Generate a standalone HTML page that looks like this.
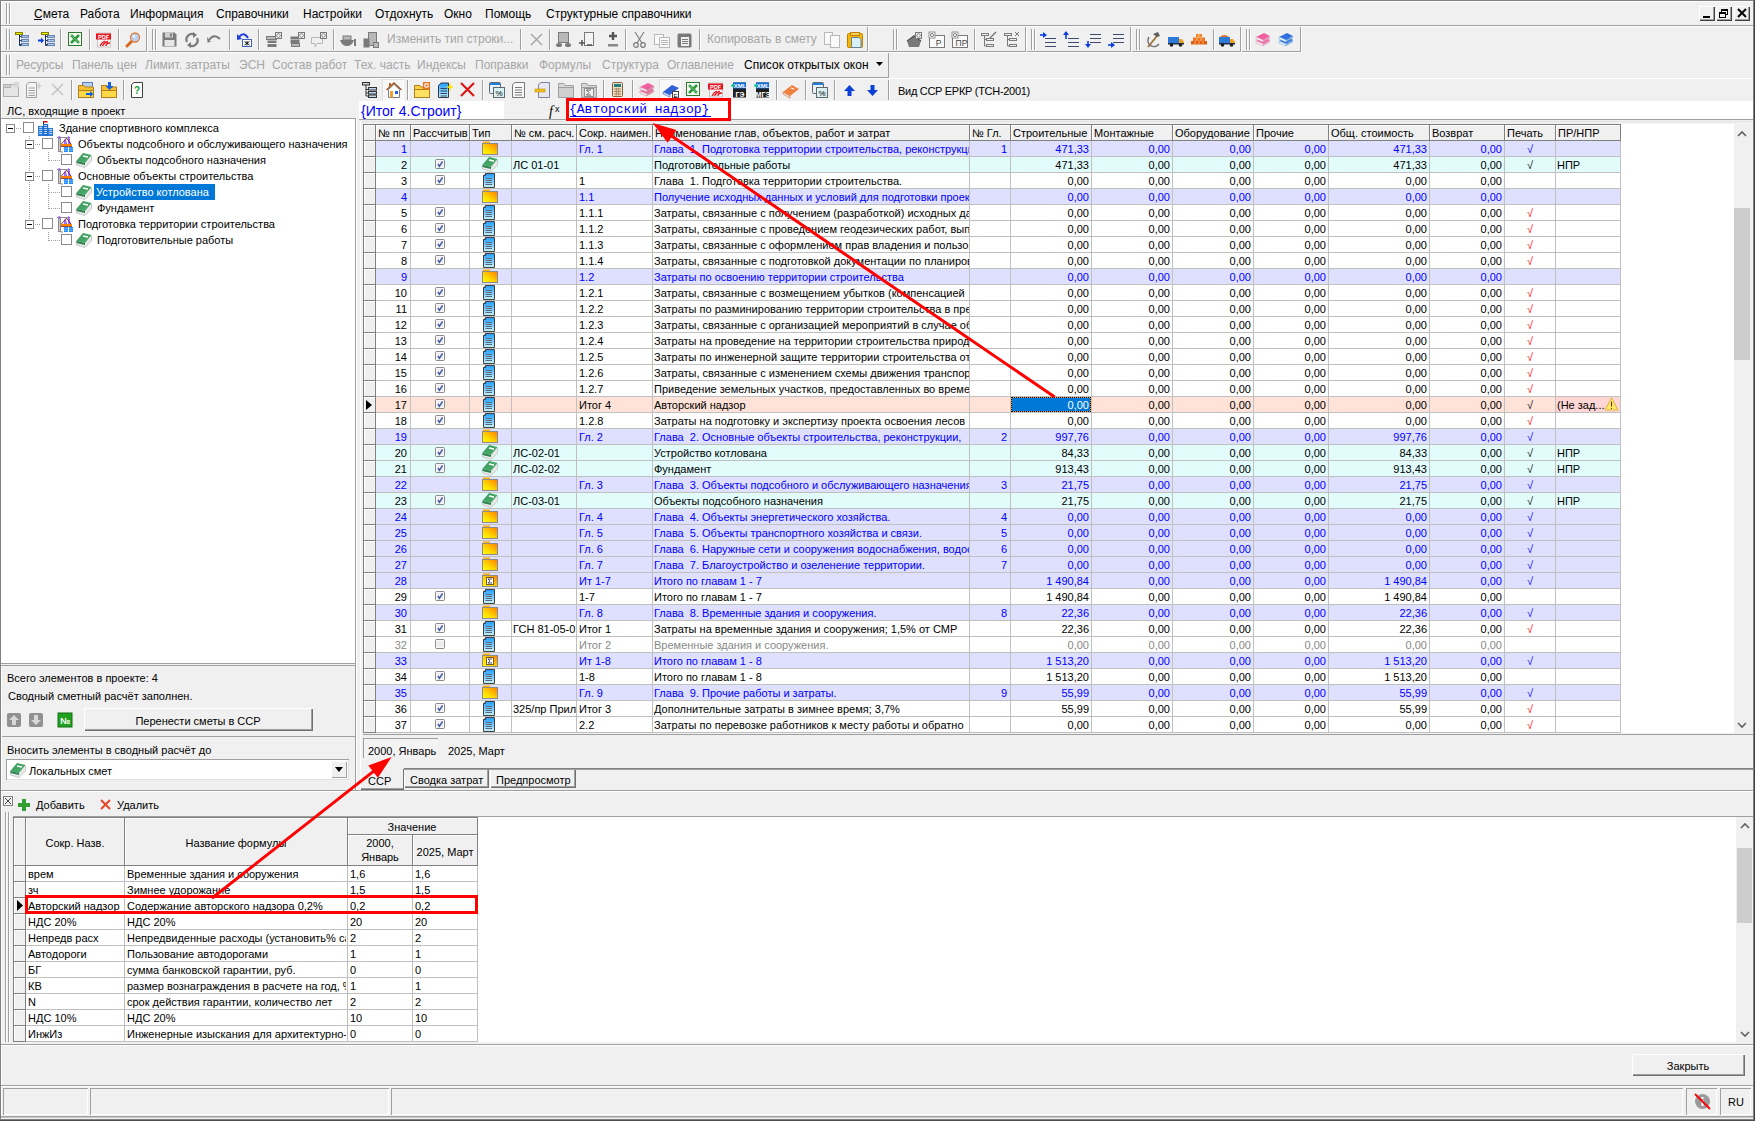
<!DOCTYPE html><html><head><meta charset="utf-8"><style>
*{margin:0;padding:0}
html,body{width:1755px;height:1121px;overflow:hidden;background:#f0f0f0}
body{position:relative;font-family:'Liberation Sans',sans-serif;font-size:11px}
body div{position:absolute}
.t{white-space:pre}
svg{overflow:visible}
</style></head><body><svg width="0" height="0" style="position:absolute"><defs>
<linearGradient id="gfold" x1="0" y1="1" x2="1" y2="0"><stop offset="0" stop-color="#ffff00"/><stop offset="0.45" stop-color="#ffd200"/><stop offset="1" stop-color="#ff7a00"/></linearGradient>
<linearGradient id="gdoc" x1="0" y1="0" x2="0" y2="1"><stop offset="0" stop-color="#1e9cff"/><stop offset="1" stop-color="#c8f4ff"/></linearGradient>
<linearGradient id="gbook" x1="0" y1="0" x2="1" y2="1"><stop offset="0" stop-color="#2f9a5a"/><stop offset="1" stop-color="#58b070"/></linearGradient>
<linearGradient id="gfold2" x1="0" y1="0" x2="0" y2="1"><stop offset="0" stop-color="#ffe070"/><stop offset="1" stop-color="#f0a000"/></linearGradient>
</defs></svg><div style="left:0px;top:0px;width:1755px;height:1px;background:#808080"></div><div style="left:0px;top:0px;width:1px;height:1121px;background:#808080"></div><div style="left:1px;top:1px;width:1753px;height:1px;background:#fff"></div><div style="left:1px;top:1px;width:1px;height:1119px;background:#fff"></div><div style="left:1753px;top:0px;width:1px;height:1121px;background:#808080"></div><div style="left:1754px;top:0px;width:1px;height:1121px;background:#404040"></div><div style="left:6px;top:3px;width:1px;height:21px;background:#a0a0a0"></div><div style="left:7px;top:3px;width:1px;height:21px;background:#fff"></div><div style="left:9px;top:3px;width:1px;height:21px;background:#a0a0a0"></div><div style="left:10px;top:3px;width:1px;height:21px;background:#fff"></div><div class="t" style="left:34px;top:8px;font-size:12px;line-height:12px;color:#000;font-family:'Liberation Sans';">Смета</div><div class="t" style="left:80px;top:8px;font-size:12px;line-height:12px;color:#000;font-family:'Liberation Sans';">Работа</div><div class="t" style="left:130px;top:8px;font-size:12px;line-height:12px;color:#000;font-family:'Liberation Sans';">Информация</div><div class="t" style="left:216px;top:8px;font-size:12px;line-height:12px;color:#000;font-family:'Liberation Sans';">Справочники</div><div class="t" style="left:303px;top:8px;font-size:12px;line-height:12px;color:#000;font-family:'Liberation Sans';">Настройки</div><div class="t" style="left:375px;top:8px;font-size:12px;line-height:12px;color:#000;font-family:'Liberation Sans';">Отдохнуть</div><div class="t" style="left:444px;top:8px;font-size:12px;line-height:12px;color:#000;font-family:'Liberation Sans';">Окно</div><div class="t" style="left:485px;top:8px;font-size:12px;line-height:12px;color:#000;font-family:'Liberation Sans';">Помощь</div><div class="t" style="left:546px;top:8px;font-size:12px;line-height:12px;color:#000;font-family:'Liberation Sans';">Структурные справочники</div><div style="left:34px;top:19px;width:8px;height:1px;background:#000"></div><div style="left:1px;top:25px;width:1752px;height:1px;background:#a0a0a0"></div><div style="left:1px;top:26px;width:1752px;height:1px;background:#fff"></div><div style="left:1699px;top:6px;width:16px;height:15px;background:#f0f0f0;box-shadow:inset 1px 1px #fff, inset -1px -1px #404040, inset -2px -2px #a0a0a0"></div><div style="left:1716px;top:6px;width:16px;height:15px;background:#f0f0f0;box-shadow:inset 1px 1px #fff, inset -1px -1px #404040, inset -2px -2px #a0a0a0"></div><div style="left:1734px;top:6px;width:16px;height:15px;background:#f0f0f0;box-shadow:inset 1px 1px #fff, inset -1px -1px #404040, inset -2px -2px #a0a0a0"></div><svg style="position:absolute;left:1699px;top:6px" width="16" height="15" viewBox="0 0 16 15"><rect x="4" y="10" width="7" height="2" fill="#000"/></svg><svg style="position:absolute;left:1716px;top:6px" width="16" height="15" viewBox="0 0 16 15"><rect x="5.5" y="3.5" width="6" height="5" fill="none" stroke="#000"/><rect x="5" y="3" width="7" height="2" fill="#000"/><rect x="3.5" y="6.5" width="6" height="5" fill="#f0f0f0" stroke="#000"/><rect x="3" y="6" width="7" height="2" fill="#000"/></svg><svg style="position:absolute;left:1734px;top:6px" width="17" height="15" viewBox="0 0 17 15"><path d="M4 3 L12 11 M12 3 L4 11" stroke="#000" stroke-width="2"/></svg><div style="left:1px;top:51px;width:1299px;height:1px;background:#a0a0a0"></div><div style="left:1px;top:52px;width:1299px;height:1px;background:#fff"></div><div style="left:146px;top:27px;width:1px;height:25px;background:#a0a0a0"></div><div style="left:147px;top:27px;width:1px;height:25px;background:#fff"></div><div style="left:867px;top:27px;width:1px;height:25px;background:#a0a0a0"></div><div style="left:868px;top:27px;width:1px;height:25px;background:#fff"></div><div style="left:1025px;top:27px;width:1px;height:25px;background:#a0a0a0"></div><div style="left:1026px;top:27px;width:1px;height:25px;background:#fff"></div><div style="left:1130px;top:27px;width:1px;height:25px;background:#a0a0a0"></div><div style="left:1131px;top:27px;width:1px;height:25px;background:#fff"></div><div style="left:1240px;top:27px;width:1px;height:25px;background:#a0a0a0"></div><div style="left:1241px;top:27px;width:1px;height:25px;background:#fff"></div><div style="left:1300px;top:27px;width:1px;height:25px;background:#a0a0a0"></div><div style="left:1301px;top:27px;width:1px;height:25px;background:#fff"></div><div style="left:6px;top:29px;width:1px;height:21px;background:#a0a0a0"></div><div style="left:7px;top:29px;width:1px;height:21px;background:#fff"></div><div style="left:9px;top:29px;width:1px;height:21px;background:#a0a0a0"></div><div style="left:10px;top:29px;width:1px;height:21px;background:#fff"></div><div style="left:152px;top:29px;width:1px;height:21px;background:#a0a0a0"></div><div style="left:153px;top:29px;width:1px;height:21px;background:#fff"></div><div style="left:155px;top:29px;width:1px;height:21px;background:#a0a0a0"></div><div style="left:156px;top:29px;width:1px;height:21px;background:#fff"></div><div style="left:893px;top:29px;width:1px;height:21px;background:#a0a0a0"></div><div style="left:894px;top:29px;width:1px;height:21px;background:#fff"></div><div style="left:896px;top:29px;width:1px;height:21px;background:#a0a0a0"></div><div style="left:897px;top:29px;width:1px;height:21px;background:#fff"></div><div style="left:1031px;top:29px;width:1px;height:21px;background:#a0a0a0"></div><div style="left:1032px;top:29px;width:1px;height:21px;background:#fff"></div><div style="left:1034px;top:29px;width:1px;height:21px;background:#a0a0a0"></div><div style="left:1035px;top:29px;width:1px;height:21px;background:#fff"></div><div style="left:1136px;top:29px;width:1px;height:21px;background:#a0a0a0"></div><div style="left:1137px;top:29px;width:1px;height:21px;background:#fff"></div><div style="left:1139px;top:29px;width:1px;height:21px;background:#a0a0a0"></div><div style="left:1140px;top:29px;width:1px;height:21px;background:#fff"></div><div style="left:1246px;top:29px;width:1px;height:21px;background:#a0a0a0"></div><div style="left:1247px;top:29px;width:1px;height:21px;background:#fff"></div><div style="left:1249px;top:29px;width:1px;height:21px;background:#a0a0a0"></div><div style="left:1250px;top:29px;width:1px;height:21px;background:#fff"></div><div style="left:6px;top:55px;width:1px;height:20px;background:#a0a0a0"></div><div style="left:7px;top:55px;width:1px;height:20px;background:#fff"></div><div style="left:9px;top:55px;width:1px;height:20px;background:#a0a0a0"></div><div style="left:10px;top:55px;width:1px;height:20px;background:#fff"></div><div class="t" style="left:16px;top:59px;font-size:12px;line-height:12px;color:#a6a6a6;font-family:'Liberation Sans';">Ресурсы</div><div class="t" style="left:72px;top:59px;font-size:12px;line-height:12px;color:#a6a6a6;font-family:'Liberation Sans';">Панель цен</div><div class="t" style="left:145px;top:59px;font-size:12px;line-height:12px;color:#a6a6a6;font-family:'Liberation Sans';">Лимит. затраты</div><div class="t" style="left:239px;top:59px;font-size:12px;line-height:12px;color:#a6a6a6;font-family:'Liberation Sans';">ЭСН</div><div class="t" style="left:272px;top:59px;font-size:12px;line-height:12px;color:#a6a6a6;font-family:'Liberation Sans';">Состав работ</div><div class="t" style="left:354px;top:59px;font-size:12px;line-height:12px;color:#a6a6a6;font-family:'Liberation Sans';">Тех. часть</div><div class="t" style="left:417px;top:59px;font-size:12px;line-height:12px;color:#a6a6a6;font-family:'Liberation Sans';">Индексы</div><div class="t" style="left:475px;top:59px;font-size:12px;line-height:12px;color:#a6a6a6;font-family:'Liberation Sans';">Поправки</div><div class="t" style="left:539px;top:59px;font-size:12px;line-height:12px;color:#a6a6a6;font-family:'Liberation Sans';">Формулы</div><div class="t" style="left:602px;top:59px;font-size:12px;line-height:12px;color:#a6a6a6;font-family:'Liberation Sans';">Структура</div><div class="t" style="left:667px;top:59px;font-size:12px;line-height:12px;color:#a6a6a6;font-family:'Liberation Sans';">Оглавление</div><div class="t" style="left:744px;top:59px;font-size:12px;line-height:12px;color:#000;font-family:'Liberation Sans';">Список открытых окон</div><svg style="position:absolute;left:876px;top:62px" width="7" height="4" viewBox="0 0 7 4"><path d="M0 0 H7 L3.5 4 Z" fill="#000"/></svg><div style="left:1px;top:77px;width:888px;height:1px;background:#a0a0a0"></div><div style="left:888px;top:53px;width:1px;height:25px;background:#a0a0a0"></div><div style="left:1px;top:78px;width:1752px;height:1px;background:#fff"></div><div class="t" style="left:387px;top:33px;font-size:12px;line-height:12px;color:#a6a6a6;font-family:'Liberation Sans';">Изменить тип строки...</div><div class="t" style="left:707px;top:33px;font-size:12px;line-height:12px;color:#a6a6a6;font-family:'Liberation Sans';">Копировать в смету</div><div style="left:60px;top:29px;width:1px;height:21px;background:#a0a0a0"></div><div style="left:61px;top:29px;width:1px;height:21px;background:#fff"></div><div style="left:89px;top:29px;width:1px;height:21px;background:#a0a0a0"></div><div style="left:90px;top:29px;width:1px;height:21px;background:#fff"></div><div style="left:118px;top:29px;width:1px;height:21px;background:#a0a0a0"></div><div style="left:119px;top:29px;width:1px;height:21px;background:#fff"></div><div style="left:229px;top:29px;width:1px;height:21px;background:#a0a0a0"></div><div style="left:230px;top:29px;width:1px;height:21px;background:#fff"></div><div style="left:258px;top:29px;width:1px;height:21px;background:#a0a0a0"></div><div style="left:259px;top:29px;width:1px;height:21px;background:#fff"></div><div style="left:333px;top:29px;width:1px;height:21px;background:#a0a0a0"></div><div style="left:334px;top:29px;width:1px;height:21px;background:#fff"></div><div style="left:520px;top:29px;width:1px;height:21px;background:#a0a0a0"></div><div style="left:521px;top:29px;width:1px;height:21px;background:#fff"></div><div style="left:549px;top:29px;width:1px;height:21px;background:#a0a0a0"></div><div style="left:550px;top:29px;width:1px;height:21px;background:#fff"></div><div style="left:625px;top:29px;width:1px;height:21px;background:#a0a0a0"></div><div style="left:626px;top:29px;width:1px;height:21px;background:#fff"></div><div style="left:699px;top:29px;width:1px;height:21px;background:#a0a0a0"></div><div style="left:700px;top:29px;width:1px;height:21px;background:#fff"></div><div style="left:974px;top:29px;width:1px;height:21px;background:#a0a0a0"></div><div style="left:975px;top:29px;width:1px;height:21px;background:#fff"></div><div style="left:1213px;top:29px;width:1px;height:21px;background:#a0a0a0"></div><div style="left:1214px;top:29px;width:1px;height:21px;background:#fff"></div><div class="t" style="left:7px;top:106px;font-size:11px;line-height:11px;color:#000;font-family:'Liberation Sans';">ЛС, входящие в проект</div><div style="left:1px;top:118px;width:355px;height:546px;background:#fff;box-shadow:inset 0 1px #a0a0a0, inset -1px -1px #a0a0a0"></div><div style="left:71px;top:80px;width:1px;height:20px;background:#a0a0a0"></div><div style="left:72px;top:80px;width:1px;height:20px;background:#fff"></div><div style="left:123px;top:80px;width:1px;height:20px;background:#a0a0a0"></div><div style="left:124px;top:80px;width:1px;height:20px;background:#fff"></div><div style="left:407px;top:80px;width:1px;height:20px;background:#a0a0a0"></div><div style="left:408px;top:80px;width:1px;height:20px;background:#fff"></div><div style="left:482px;top:80px;width:1px;height:20px;background:#a0a0a0"></div><div style="left:483px;top:80px;width:1px;height:20px;background:#fff"></div><div style="left:603px;top:80px;width:1px;height:20px;background:#a0a0a0"></div><div style="left:604px;top:80px;width:1px;height:20px;background:#fff"></div><div style="left:632px;top:80px;width:1px;height:20px;background:#a0a0a0"></div><div style="left:633px;top:80px;width:1px;height:20px;background:#fff"></div><div style="left:776px;top:80px;width:1px;height:20px;background:#a0a0a0"></div><div style="left:777px;top:80px;width:1px;height:20px;background:#fff"></div><div style="left:805px;top:80px;width:1px;height:20px;background:#a0a0a0"></div><div style="left:806px;top:80px;width:1px;height:20px;background:#fff"></div><div style="left:834px;top:80px;width:1px;height:20px;background:#a0a0a0"></div><div style="left:835px;top:80px;width:1px;height:20px;background:#fff"></div><div style="left:888px;top:80px;width:1px;height:20px;background:#a0a0a0"></div><div style="left:889px;top:80px;width:1px;height:20px;background:#fff"></div><div class="t" style="left:898px;top:86px;font-size:11px;line-height:11px;color:#000;font-family:'Liberation Sans';letter-spacing:-0.3px">Вид ССР ЕРКР (ТСН-2001)</div><div style="left:359px;top:101px;width:1394px;height:18px;background:#fff"></div><div style="left:504px;top:101px;width:63px;height:18px;background:#f0f0f0"></div><div style="left:359px;top:119px;width:1394px;height:1px;background:#a0a0a0"></div><div class="t" style="left:361px;top:104px;font-size:14px;line-height:14px;color:#0000ff;font-family:'Liberation Sans';">{Итог 4.Строит}</div><div class="t" style="left:549px;top:105px;font-size:14px;line-height:14px;color:#000;font-family:'Liberation Serif';font-style:italic">f</div><div class="t" style="left:555px;top:105px;font-size:9px;line-height:9px;color:#000;font-family:'Liberation Sans';">x</div><div class="t" style="left:569px;top:103px;font-size:13px;line-height:13px;color:#0000ff;font-family:'Liberation Mono';">{Авторский надзор}</div><div style="left:570px;top:116px;width:141px;height:1px;background:#0000ff"></div><div style="left:363px;top:124px;width:1371px;height:609px;background:#fff"></div><div style="left:360px;top:121px;width:1393px;height:1px;background:#e3e3e3"></div><div style="left:360px;top:121px;width:1px;height:613px;background:#e3e3e3"></div><div style="left:363px;top:734px;width:1390px;height:1px;background:#a0a0a0"></div><div style="left:360px;top:121px;width:1px;height:670px;background:#fff"></div><div style="left:363px;top:124px;width:1258px;height:1px;background:#808080"></div><div style="left:363px;top:140px;width:1258px;height:1px;background:#808080"></div><div style="left:363px;top:124px;width:1px;height:609px;background:#808080"></div><div style="left:375px;top:124px;width:1px;height:609px;background:#808080"></div><div style="left:410px;top:124px;width:1px;height:609px;background:#c0c0c0"></div><div style="left:469px;top:124px;width:1px;height:609px;background:#c0c0c0"></div><div style="left:511px;top:124px;width:1px;height:609px;background:#c0c0c0"></div><div style="left:576px;top:124px;width:1px;height:609px;background:#c0c0c0"></div><div style="left:652px;top:124px;width:1px;height:609px;background:#c0c0c0"></div><div style="left:969px;top:124px;width:1px;height:609px;background:#c0c0c0"></div><div style="left:1010px;top:124px;width:1px;height:609px;background:#c0c0c0"></div><div style="left:1091px;top:124px;width:1px;height:609px;background:#c0c0c0"></div><div style="left:1172px;top:124px;width:1px;height:609px;background:#c0c0c0"></div><div style="left:1253px;top:124px;width:1px;height:609px;background:#c0c0c0"></div><div style="left:1328px;top:124px;width:1px;height:609px;background:#c0c0c0"></div><div style="left:1429px;top:124px;width:1px;height:609px;background:#c0c0c0"></div><div style="left:1504px;top:124px;width:1px;height:609px;background:#c0c0c0"></div><div style="left:1555px;top:124px;width:1px;height:609px;background:#c0c0c0"></div><div style="left:1620px;top:124px;width:1px;height:609px;background:#c0c0c0"></div><div style="left:364px;top:125px;width:11px;height:15px;background:#f0f0f0;box-shadow:inset 1px 1px #fff"></div><div style="left:375px;top:124px;width:1px;height:17px;background:#808080"></div><div style="left:376px;top:125px;width:34px;height:15px;background:#f0f0f0;box-shadow:inset 1px 1px #fff"></div><div style="left:410px;top:124px;width:1px;height:17px;background:#808080"></div><div class="t" style="left:378px;width:31px;overflow:hidden;top:128px;font-size:11px;line-height:11px;color:#000;font-family:'Liberation Sans';">№ пп</div><div style="left:411px;top:125px;width:58px;height:15px;background:#f0f0f0;box-shadow:inset 1px 1px #fff"></div><div style="left:469px;top:124px;width:1px;height:17px;background:#808080"></div><div class="t" style="left:413px;width:55px;overflow:hidden;top:128px;font-size:11px;line-height:11px;color:#000;font-family:'Liberation Sans';">Рассчитыв</div><div style="left:470px;top:125px;width:41px;height:15px;background:#f0f0f0;box-shadow:inset 1px 1px #fff"></div><div style="left:511px;top:124px;width:1px;height:17px;background:#808080"></div><div class="t" style="left:472px;width:38px;overflow:hidden;top:128px;font-size:11px;line-height:11px;color:#000;font-family:'Liberation Sans';">Тип</div><div style="left:512px;top:125px;width:64px;height:15px;background:#f0f0f0;box-shadow:inset 1px 1px #fff"></div><div style="left:576px;top:124px;width:1px;height:17px;background:#808080"></div><div class="t" style="left:514px;width:61px;overflow:hidden;top:128px;font-size:11px;line-height:11px;color:#000;font-family:'Liberation Sans';">№ см. расч.</div><div style="left:577px;top:125px;width:75px;height:15px;background:#f0f0f0;box-shadow:inset 1px 1px #fff"></div><div style="left:652px;top:124px;width:1px;height:17px;background:#808080"></div><div class="t" style="left:579px;width:72px;overflow:hidden;top:128px;font-size:11px;line-height:11px;color:#000;font-family:'Liberation Sans';">Сокр. наимен.</div><div style="left:653px;top:125px;width:316px;height:15px;background:#f0f0f0;box-shadow:inset 1px 1px #fff"></div><div style="left:969px;top:124px;width:1px;height:17px;background:#808080"></div><div class="t" style="left:655px;width:313px;overflow:hidden;top:128px;font-size:11px;line-height:11px;color:#000;font-family:'Liberation Sans';">Наименование глав, объектов, работ и затрат</div><div style="left:970px;top:125px;width:40px;height:15px;background:#f0f0f0;box-shadow:inset 1px 1px #fff"></div><div style="left:1010px;top:124px;width:1px;height:17px;background:#808080"></div><div class="t" style="left:972px;width:37px;overflow:hidden;top:128px;font-size:11px;line-height:11px;color:#000;font-family:'Liberation Sans';">№ Гл.</div><div style="left:1011px;top:125px;width:80px;height:15px;background:#f0f0f0;box-shadow:inset 1px 1px #fff"></div><div style="left:1091px;top:124px;width:1px;height:17px;background:#808080"></div><div class="t" style="left:1013px;width:77px;overflow:hidden;top:128px;font-size:11px;line-height:11px;color:#000;font-family:'Liberation Sans';">Строительные</div><div style="left:1092px;top:125px;width:80px;height:15px;background:#f0f0f0;box-shadow:inset 1px 1px #fff"></div><div style="left:1172px;top:124px;width:1px;height:17px;background:#808080"></div><div class="t" style="left:1094px;width:77px;overflow:hidden;top:128px;font-size:11px;line-height:11px;color:#000;font-family:'Liberation Sans';">Монтажные</div><div style="left:1173px;top:125px;width:80px;height:15px;background:#f0f0f0;box-shadow:inset 1px 1px #fff"></div><div style="left:1253px;top:124px;width:1px;height:17px;background:#808080"></div><div class="t" style="left:1175px;width:77px;overflow:hidden;top:128px;font-size:11px;line-height:11px;color:#000;font-family:'Liberation Sans';">Оборудование</div><div style="left:1254px;top:125px;width:74px;height:15px;background:#f0f0f0;box-shadow:inset 1px 1px #fff"></div><div style="left:1328px;top:124px;width:1px;height:17px;background:#808080"></div><div class="t" style="left:1256px;width:71px;overflow:hidden;top:128px;font-size:11px;line-height:11px;color:#000;font-family:'Liberation Sans';">Прочие</div><div style="left:1329px;top:125px;width:100px;height:15px;background:#f0f0f0;box-shadow:inset 1px 1px #fff"></div><div style="left:1429px;top:124px;width:1px;height:17px;background:#808080"></div><div class="t" style="left:1331px;width:97px;overflow:hidden;top:128px;font-size:11px;line-height:11px;color:#000;font-family:'Liberation Sans';">Общ. стоимость</div><div style="left:1430px;top:125px;width:74px;height:15px;background:#f0f0f0;box-shadow:inset 1px 1px #fff"></div><div style="left:1504px;top:124px;width:1px;height:17px;background:#808080"></div><div class="t" style="left:1432px;width:71px;overflow:hidden;top:128px;font-size:11px;line-height:11px;color:#000;font-family:'Liberation Sans';">Возврат</div><div style="left:1505px;top:125px;width:50px;height:15px;background:#f0f0f0;box-shadow:inset 1px 1px #fff"></div><div style="left:1555px;top:124px;width:1px;height:17px;background:#808080"></div><div class="t" style="left:1507px;width:47px;overflow:hidden;top:128px;font-size:11px;line-height:11px;color:#000;font-family:'Liberation Sans';">Печать</div><div style="left:1556px;top:125px;width:64px;height:15px;background:#f0f0f0;box-shadow:inset 1px 1px #fff"></div><div style="left:1620px;top:124px;width:1px;height:17px;background:#808080"></div><div class="t" style="left:1558px;width:61px;overflow:hidden;top:128px;font-size:11px;line-height:11px;color:#000;font-family:'Liberation Sans';">ПР/НПР</div><div style="left:364px;top:141px;width:11px;height:15px;background:#f0f0f0;box-shadow:inset 1px 1px #fff"></div><div style="left:363px;top:156px;width:13px;height:1px;background:#808080"></div><div style="left:376px;top:141px;width:1244px;height:15px;background:#dfdffe"></div><div style="left:376px;top:156px;width:1245px;height:1px;background:#c0c0c0"></div><div style="left:410px;top:141px;width:1px;height:16px;background:#c0c0c0"></div><div style="left:469px;top:141px;width:1px;height:16px;background:#c0c0c0"></div><div style="left:511px;top:141px;width:1px;height:16px;background:#c0c0c0"></div><div style="left:576px;top:141px;width:1px;height:16px;background:#c0c0c0"></div><div style="left:652px;top:141px;width:1px;height:16px;background:#c0c0c0"></div><div style="left:969px;top:141px;width:1px;height:16px;background:#c0c0c0"></div><div style="left:1010px;top:141px;width:1px;height:16px;background:#c0c0c0"></div><div style="left:1091px;top:141px;width:1px;height:16px;background:#c0c0c0"></div><div style="left:1172px;top:141px;width:1px;height:16px;background:#c0c0c0"></div><div style="left:1253px;top:141px;width:1px;height:16px;background:#c0c0c0"></div><div style="left:1328px;top:141px;width:1px;height:16px;background:#c0c0c0"></div><div style="left:1429px;top:141px;width:1px;height:16px;background:#c0c0c0"></div><div style="left:1504px;top:141px;width:1px;height:16px;background:#c0c0c0"></div><div style="left:1555px;top:141px;width:1px;height:16px;background:#c0c0c0"></div><div style="left:1620px;top:141px;width:1px;height:16px;background:#c0c0c0"></div><div class="t" style="left:7px;width:400px;text-align:right;top:144px;font-size:11px;line-height:11px;color:#0000ff;font-family:'Liberation Sans';">1</div><svg style="position:absolute;left:482px;top:141px" width="16" height="16" viewBox="0 0 16 16"><rect x="1" y="0.5" width="7" height="2" fill="#ffb000"/><rect x="0.5" y="2.5" width="15" height="11" fill="url(#gfold)" stroke="#8c8c8c"/></svg><div class="t" style="left:579px;width:73px;overflow:hidden;top:144px;font-size:11px;line-height:11px;color:#0000ff;font-family:'Liberation Sans';">Гл. 1</div><div class="t" style="left:654px;width:315px;overflow:hidden;top:144px;font-size:11px;line-height:11px;color:#0000ff;font-family:'Liberation Sans';">Глава  1. Подготовка территории строительства, реконструкции</div><div class="t" style="left:607px;width:400px;text-align:right;top:144px;font-size:11px;line-height:11px;color:#0000ff;font-family:'Liberation Sans';">1</div><div class="t" style="left:689px;width:400px;text-align:right;top:144px;font-size:11px;line-height:11px;color:#0000ff;font-family:'Liberation Sans';">471,33</div><div class="t" style="left:770px;width:400px;text-align:right;top:144px;font-size:11px;line-height:11px;color:#0000ff;font-family:'Liberation Sans';">0,00</div><div class="t" style="left:851px;width:400px;text-align:right;top:144px;font-size:11px;line-height:11px;color:#0000ff;font-family:'Liberation Sans';">0,00</div><div class="t" style="left:926px;width:400px;text-align:right;top:144px;font-size:11px;line-height:11px;color:#0000ff;font-family:'Liberation Sans';">0,00</div><div class="t" style="left:1027px;width:400px;text-align:right;top:144px;font-size:11px;line-height:11px;color:#0000ff;font-family:'Liberation Sans';">471,33</div><div class="t" style="left:1102px;width:400px;text-align:right;top:144px;font-size:11px;line-height:11px;color:#0000ff;font-family:'Liberation Sans';">0,00</div><div class="t" style="left:1230px;width:600px;text-align:center;top:144px;font-size:11px;line-height:11px;color:#0000ff;font-family:'Liberation Sans';">√</div><div style="left:364px;top:157px;width:11px;height:15px;background:#f0f0f0;box-shadow:inset 1px 1px #fff"></div><div style="left:363px;top:172px;width:13px;height:1px;background:#808080"></div><div style="left:376px;top:157px;width:1244px;height:15px;background:#e2fcfc"></div><div style="left:376px;top:172px;width:1245px;height:1px;background:#c0c0c0"></div><div style="left:410px;top:157px;width:1px;height:16px;background:#c0c0c0"></div><div style="left:469px;top:157px;width:1px;height:16px;background:#c0c0c0"></div><div style="left:511px;top:157px;width:1px;height:16px;background:#c0c0c0"></div><div style="left:576px;top:157px;width:1px;height:16px;background:#c0c0c0"></div><div style="left:652px;top:157px;width:1px;height:16px;background:#c0c0c0"></div><div style="left:969px;top:157px;width:1px;height:16px;background:#c0c0c0"></div><div style="left:1010px;top:157px;width:1px;height:16px;background:#c0c0c0"></div><div style="left:1091px;top:157px;width:1px;height:16px;background:#c0c0c0"></div><div style="left:1172px;top:157px;width:1px;height:16px;background:#c0c0c0"></div><div style="left:1253px;top:157px;width:1px;height:16px;background:#c0c0c0"></div><div style="left:1328px;top:157px;width:1px;height:16px;background:#c0c0c0"></div><div style="left:1429px;top:157px;width:1px;height:16px;background:#c0c0c0"></div><div style="left:1504px;top:157px;width:1px;height:16px;background:#c0c0c0"></div><div style="left:1555px;top:157px;width:1px;height:16px;background:#c0c0c0"></div><div style="left:1620px;top:157px;width:1px;height:16px;background:#c0c0c0"></div><div class="t" style="left:7px;width:400px;text-align:right;top:160px;font-size:11px;line-height:11px;color:#000000;font-family:'Liberation Sans';">2</div><svg style="position:absolute;left:435px;top:159px" width="11" height="11" viewBox="0 0 11 11"><rect x="0.5" y="0.5" width="9" height="9" rx="0.8" fill="#f8f8f8" stroke="#8a8a8a"/><rect x="2" y="2" width="6" height="6" fill="#ececec"/><path d="M3 5 L4.3 7.3 L7.6 2.3" fill="none" stroke="#3a55a0" stroke-width="1.4"/></svg><svg style="position:absolute;left:482px;top:156px" width="16" height="16" viewBox="0 0 16 16"><path d="M0.5 9 L7 2 L15.5 4 L15.5 9 L9 15.5 L0.5 13 Z" fill="#e8e8e8" stroke="#c0c0c0" stroke-width="0.8"/><path d="M0.5 9 L7 1 L15.5 3 L9 11 Z" fill="url(#gbook)"/><path d="M0.5 9 L9 11 L9 13 L0.5 11 Z" fill="#2a8050"/><path d="M7 4 L12 5" stroke="#fff" stroke-width="1.3"/></svg><div class="t" style="left:513px;width:63px;overflow:hidden;top:160px;font-size:11px;line-height:11px;color:#000000;font-family:'Liberation Sans';">ЛС 01-01</div><div class="t" style="left:654px;width:315px;overflow:hidden;top:160px;font-size:11px;line-height:11px;color:#000000;font-family:'Liberation Sans';">Подготовительные работы</div><div class="t" style="left:689px;width:400px;text-align:right;top:160px;font-size:11px;line-height:11px;color:#000000;font-family:'Liberation Sans';">471,33</div><div class="t" style="left:770px;width:400px;text-align:right;top:160px;font-size:11px;line-height:11px;color:#000000;font-family:'Liberation Sans';">0,00</div><div class="t" style="left:851px;width:400px;text-align:right;top:160px;font-size:11px;line-height:11px;color:#000000;font-family:'Liberation Sans';">0,00</div><div class="t" style="left:926px;width:400px;text-align:right;top:160px;font-size:11px;line-height:11px;color:#000000;font-family:'Liberation Sans';">0,00</div><div class="t" style="left:1027px;width:400px;text-align:right;top:160px;font-size:11px;line-height:11px;color:#000000;font-family:'Liberation Sans';">471,33</div><div class="t" style="left:1102px;width:400px;text-align:right;top:160px;font-size:11px;line-height:11px;color:#000000;font-family:'Liberation Sans';">0,00</div><div class="t" style="left:1230px;width:600px;text-align:center;top:160px;font-size:11px;line-height:11px;color:#000000;font-family:'Liberation Sans';">√</div><div class="t" style="left:1557px;width:63px;overflow:hidden;top:160px;font-size:11px;line-height:11px;color:#000;font-family:'Liberation Sans';">НПР</div><div style="left:364px;top:173px;width:11px;height:15px;background:#f0f0f0;box-shadow:inset 1px 1px #fff"></div><div style="left:363px;top:188px;width:13px;height:1px;background:#808080"></div><div style="left:376px;top:173px;width:1244px;height:15px;background:#ffffff"></div><div style="left:376px;top:188px;width:1245px;height:1px;background:#c0c0c0"></div><div style="left:410px;top:173px;width:1px;height:16px;background:#c0c0c0"></div><div style="left:469px;top:173px;width:1px;height:16px;background:#c0c0c0"></div><div style="left:511px;top:173px;width:1px;height:16px;background:#c0c0c0"></div><div style="left:576px;top:173px;width:1px;height:16px;background:#c0c0c0"></div><div style="left:652px;top:173px;width:1px;height:16px;background:#c0c0c0"></div><div style="left:969px;top:173px;width:1px;height:16px;background:#c0c0c0"></div><div style="left:1010px;top:173px;width:1px;height:16px;background:#c0c0c0"></div><div style="left:1091px;top:173px;width:1px;height:16px;background:#c0c0c0"></div><div style="left:1172px;top:173px;width:1px;height:16px;background:#c0c0c0"></div><div style="left:1253px;top:173px;width:1px;height:16px;background:#c0c0c0"></div><div style="left:1328px;top:173px;width:1px;height:16px;background:#c0c0c0"></div><div style="left:1429px;top:173px;width:1px;height:16px;background:#c0c0c0"></div><div style="left:1504px;top:173px;width:1px;height:16px;background:#c0c0c0"></div><div style="left:1555px;top:173px;width:1px;height:16px;background:#c0c0c0"></div><div style="left:1620px;top:173px;width:1px;height:16px;background:#c0c0c0"></div><div class="t" style="left:7px;width:400px;text-align:right;top:176px;font-size:11px;line-height:11px;color:#000000;font-family:'Liberation Sans';">3</div><svg style="position:absolute;left:435px;top:175px" width="11" height="11" viewBox="0 0 11 11"><rect x="0.5" y="0.5" width="9" height="9" rx="0.8" fill="#f8f8f8" stroke="#8a8a8a"/><rect x="2" y="2" width="6" height="6" fill="#ececec"/><path d="M3 5 L4.3 7.3 L7.6 2.3" fill="none" stroke="#3a55a0" stroke-width="1.4"/></svg><svg style="position:absolute;left:483px;top:173px" width="16" height="16" viewBox="0 0 16 16"><path d="M0.5 2.5 L2.5 0.5 H11.5 V14.5 H0.5 Z" fill="url(#gdoc)" stroke="#404040"/><path d="M0.5 2.5 H2.5 V0.5" fill="#d8f8ff" stroke="#404040"/><path d="M2.5 5.5h6.5M2.5 7.5h6.5M2.5 9.5h6.5M2.5 11.5h6.5" stroke="#5a6a7a" stroke-width="1"/></svg><div class="t" style="left:579px;width:73px;overflow:hidden;top:176px;font-size:11px;line-height:11px;color:#000000;font-family:'Liberation Sans';">1</div><div class="t" style="left:654px;width:315px;overflow:hidden;top:176px;font-size:11px;line-height:11px;color:#000000;font-family:'Liberation Sans';">Глава  1. Подготовка территории строительства.</div><div class="t" style="left:689px;width:400px;text-align:right;top:176px;font-size:11px;line-height:11px;color:#000000;font-family:'Liberation Sans';">0,00</div><div class="t" style="left:770px;width:400px;text-align:right;top:176px;font-size:11px;line-height:11px;color:#000000;font-family:'Liberation Sans';">0,00</div><div class="t" style="left:851px;width:400px;text-align:right;top:176px;font-size:11px;line-height:11px;color:#000000;font-family:'Liberation Sans';">0,00</div><div class="t" style="left:926px;width:400px;text-align:right;top:176px;font-size:11px;line-height:11px;color:#000000;font-family:'Liberation Sans';">0,00</div><div class="t" style="left:1027px;width:400px;text-align:right;top:176px;font-size:11px;line-height:11px;color:#000000;font-family:'Liberation Sans';">0,00</div><div class="t" style="left:1102px;width:400px;text-align:right;top:176px;font-size:11px;line-height:11px;color:#000000;font-family:'Liberation Sans';">0,00</div><div style="left:364px;top:189px;width:11px;height:15px;background:#f0f0f0;box-shadow:inset 1px 1px #fff"></div><div style="left:363px;top:204px;width:13px;height:1px;background:#808080"></div><div style="left:376px;top:189px;width:1244px;height:15px;background:#dfdffe"></div><div style="left:376px;top:204px;width:1245px;height:1px;background:#c0c0c0"></div><div style="left:410px;top:189px;width:1px;height:16px;background:#c0c0c0"></div><div style="left:469px;top:189px;width:1px;height:16px;background:#c0c0c0"></div><div style="left:511px;top:189px;width:1px;height:16px;background:#c0c0c0"></div><div style="left:576px;top:189px;width:1px;height:16px;background:#c0c0c0"></div><div style="left:652px;top:189px;width:1px;height:16px;background:#c0c0c0"></div><div style="left:969px;top:189px;width:1px;height:16px;background:#c0c0c0"></div><div style="left:1010px;top:189px;width:1px;height:16px;background:#c0c0c0"></div><div style="left:1091px;top:189px;width:1px;height:16px;background:#c0c0c0"></div><div style="left:1172px;top:189px;width:1px;height:16px;background:#c0c0c0"></div><div style="left:1253px;top:189px;width:1px;height:16px;background:#c0c0c0"></div><div style="left:1328px;top:189px;width:1px;height:16px;background:#c0c0c0"></div><div style="left:1429px;top:189px;width:1px;height:16px;background:#c0c0c0"></div><div style="left:1504px;top:189px;width:1px;height:16px;background:#c0c0c0"></div><div style="left:1555px;top:189px;width:1px;height:16px;background:#c0c0c0"></div><div style="left:1620px;top:189px;width:1px;height:16px;background:#c0c0c0"></div><div class="t" style="left:7px;width:400px;text-align:right;top:192px;font-size:11px;line-height:11px;color:#0000ff;font-family:'Liberation Sans';">4</div><svg style="position:absolute;left:482px;top:189px" width="16" height="16" viewBox="0 0 16 16"><rect x="1" y="0.5" width="7" height="2" fill="#ffb000"/><rect x="0.5" y="2.5" width="15" height="11" fill="url(#gfold)" stroke="#8c8c8c"/></svg><div class="t" style="left:579px;width:73px;overflow:hidden;top:192px;font-size:11px;line-height:11px;color:#0000ff;font-family:'Liberation Sans';">1.1</div><div class="t" style="left:654px;width:315px;overflow:hidden;top:192px;font-size:11px;line-height:11px;color:#0000ff;font-family:'Liberation Sans';">Получение исходных данных и условий для подготовки проекта</div><div class="t" style="left:689px;width:400px;text-align:right;top:192px;font-size:11px;line-height:11px;color:#0000ff;font-family:'Liberation Sans';">0,00</div><div class="t" style="left:770px;width:400px;text-align:right;top:192px;font-size:11px;line-height:11px;color:#0000ff;font-family:'Liberation Sans';">0,00</div><div class="t" style="left:851px;width:400px;text-align:right;top:192px;font-size:11px;line-height:11px;color:#0000ff;font-family:'Liberation Sans';">0,00</div><div class="t" style="left:926px;width:400px;text-align:right;top:192px;font-size:11px;line-height:11px;color:#0000ff;font-family:'Liberation Sans';">0,00</div><div class="t" style="left:1027px;width:400px;text-align:right;top:192px;font-size:11px;line-height:11px;color:#0000ff;font-family:'Liberation Sans';">0,00</div><div class="t" style="left:1102px;width:400px;text-align:right;top:192px;font-size:11px;line-height:11px;color:#0000ff;font-family:'Liberation Sans';">0,00</div><div style="left:364px;top:205px;width:11px;height:15px;background:#f0f0f0;box-shadow:inset 1px 1px #fff"></div><div style="left:363px;top:220px;width:13px;height:1px;background:#808080"></div><div style="left:376px;top:205px;width:1244px;height:15px;background:#ffffff"></div><div style="left:376px;top:220px;width:1245px;height:1px;background:#c0c0c0"></div><div style="left:410px;top:205px;width:1px;height:16px;background:#c0c0c0"></div><div style="left:469px;top:205px;width:1px;height:16px;background:#c0c0c0"></div><div style="left:511px;top:205px;width:1px;height:16px;background:#c0c0c0"></div><div style="left:576px;top:205px;width:1px;height:16px;background:#c0c0c0"></div><div style="left:652px;top:205px;width:1px;height:16px;background:#c0c0c0"></div><div style="left:969px;top:205px;width:1px;height:16px;background:#c0c0c0"></div><div style="left:1010px;top:205px;width:1px;height:16px;background:#c0c0c0"></div><div style="left:1091px;top:205px;width:1px;height:16px;background:#c0c0c0"></div><div style="left:1172px;top:205px;width:1px;height:16px;background:#c0c0c0"></div><div style="left:1253px;top:205px;width:1px;height:16px;background:#c0c0c0"></div><div style="left:1328px;top:205px;width:1px;height:16px;background:#c0c0c0"></div><div style="left:1429px;top:205px;width:1px;height:16px;background:#c0c0c0"></div><div style="left:1504px;top:205px;width:1px;height:16px;background:#c0c0c0"></div><div style="left:1555px;top:205px;width:1px;height:16px;background:#c0c0c0"></div><div style="left:1620px;top:205px;width:1px;height:16px;background:#c0c0c0"></div><div class="t" style="left:7px;width:400px;text-align:right;top:208px;font-size:11px;line-height:11px;color:#000000;font-family:'Liberation Sans';">5</div><svg style="position:absolute;left:435px;top:207px" width="11" height="11" viewBox="0 0 11 11"><rect x="0.5" y="0.5" width="9" height="9" rx="0.8" fill="#f8f8f8" stroke="#8a8a8a"/><rect x="2" y="2" width="6" height="6" fill="#ececec"/><path d="M3 5 L4.3 7.3 L7.6 2.3" fill="none" stroke="#3a55a0" stroke-width="1.4"/></svg><svg style="position:absolute;left:483px;top:205px" width="16" height="16" viewBox="0 0 16 16"><path d="M0.5 2.5 L2.5 0.5 H11.5 V14.5 H0.5 Z" fill="url(#gdoc)" stroke="#404040"/><path d="M0.5 2.5 H2.5 V0.5" fill="#d8f8ff" stroke="#404040"/><path d="M2.5 5.5h6.5M2.5 7.5h6.5M2.5 9.5h6.5M2.5 11.5h6.5" stroke="#5a6a7a" stroke-width="1"/></svg><div class="t" style="left:579px;width:73px;overflow:hidden;top:208px;font-size:11px;line-height:11px;color:#000000;font-family:'Liberation Sans';">1.1.1</div><div class="t" style="left:654px;width:315px;overflow:hidden;top:208px;font-size:11px;line-height:11px;color:#000000;font-family:'Liberation Sans';">Затраты, связанные с получением (разработкой) исходных данных</div><div class="t" style="left:689px;width:400px;text-align:right;top:208px;font-size:11px;line-height:11px;color:#000000;font-family:'Liberation Sans';">0,00</div><div class="t" style="left:770px;width:400px;text-align:right;top:208px;font-size:11px;line-height:11px;color:#000000;font-family:'Liberation Sans';">0,00</div><div class="t" style="left:851px;width:400px;text-align:right;top:208px;font-size:11px;line-height:11px;color:#000000;font-family:'Liberation Sans';">0,00</div><div class="t" style="left:926px;width:400px;text-align:right;top:208px;font-size:11px;line-height:11px;color:#000000;font-family:'Liberation Sans';">0,00</div><div class="t" style="left:1027px;width:400px;text-align:right;top:208px;font-size:11px;line-height:11px;color:#000000;font-family:'Liberation Sans';">0,00</div><div class="t" style="left:1102px;width:400px;text-align:right;top:208px;font-size:11px;line-height:11px;color:#000000;font-family:'Liberation Sans';">0,00</div><div class="t" style="left:1230px;width:600px;text-align:center;top:208px;font-size:11px;line-height:11px;color:#ff0000;font-family:'Liberation Sans';">√</div><div style="left:364px;top:221px;width:11px;height:15px;background:#f0f0f0;box-shadow:inset 1px 1px #fff"></div><div style="left:363px;top:236px;width:13px;height:1px;background:#808080"></div><div style="left:376px;top:221px;width:1244px;height:15px;background:#ffffff"></div><div style="left:376px;top:236px;width:1245px;height:1px;background:#c0c0c0"></div><div style="left:410px;top:221px;width:1px;height:16px;background:#c0c0c0"></div><div style="left:469px;top:221px;width:1px;height:16px;background:#c0c0c0"></div><div style="left:511px;top:221px;width:1px;height:16px;background:#c0c0c0"></div><div style="left:576px;top:221px;width:1px;height:16px;background:#c0c0c0"></div><div style="left:652px;top:221px;width:1px;height:16px;background:#c0c0c0"></div><div style="left:969px;top:221px;width:1px;height:16px;background:#c0c0c0"></div><div style="left:1010px;top:221px;width:1px;height:16px;background:#c0c0c0"></div><div style="left:1091px;top:221px;width:1px;height:16px;background:#c0c0c0"></div><div style="left:1172px;top:221px;width:1px;height:16px;background:#c0c0c0"></div><div style="left:1253px;top:221px;width:1px;height:16px;background:#c0c0c0"></div><div style="left:1328px;top:221px;width:1px;height:16px;background:#c0c0c0"></div><div style="left:1429px;top:221px;width:1px;height:16px;background:#c0c0c0"></div><div style="left:1504px;top:221px;width:1px;height:16px;background:#c0c0c0"></div><div style="left:1555px;top:221px;width:1px;height:16px;background:#c0c0c0"></div><div style="left:1620px;top:221px;width:1px;height:16px;background:#c0c0c0"></div><div class="t" style="left:7px;width:400px;text-align:right;top:224px;font-size:11px;line-height:11px;color:#000000;font-family:'Liberation Sans';">6</div><svg style="position:absolute;left:435px;top:223px" width="11" height="11" viewBox="0 0 11 11"><rect x="0.5" y="0.5" width="9" height="9" rx="0.8" fill="#f8f8f8" stroke="#8a8a8a"/><rect x="2" y="2" width="6" height="6" fill="#ececec"/><path d="M3 5 L4.3 7.3 L7.6 2.3" fill="none" stroke="#3a55a0" stroke-width="1.4"/></svg><svg style="position:absolute;left:483px;top:221px" width="16" height="16" viewBox="0 0 16 16"><path d="M0.5 2.5 L2.5 0.5 H11.5 V14.5 H0.5 Z" fill="url(#gdoc)" stroke="#404040"/><path d="M0.5 2.5 H2.5 V0.5" fill="#d8f8ff" stroke="#404040"/><path d="M2.5 5.5h6.5M2.5 7.5h6.5M2.5 9.5h6.5M2.5 11.5h6.5" stroke="#5a6a7a" stroke-width="1"/></svg><div class="t" style="left:579px;width:73px;overflow:hidden;top:224px;font-size:11px;line-height:11px;color:#000000;font-family:'Liberation Sans';">1.1.2</div><div class="t" style="left:654px;width:315px;overflow:hidden;top:224px;font-size:11px;line-height:11px;color:#000000;font-family:'Liberation Sans';">Затраты, связанные с проведением геодезических работ, выполняемых</div><div class="t" style="left:689px;width:400px;text-align:right;top:224px;font-size:11px;line-height:11px;color:#000000;font-family:'Liberation Sans';">0,00</div><div class="t" style="left:770px;width:400px;text-align:right;top:224px;font-size:11px;line-height:11px;color:#000000;font-family:'Liberation Sans';">0,00</div><div class="t" style="left:851px;width:400px;text-align:right;top:224px;font-size:11px;line-height:11px;color:#000000;font-family:'Liberation Sans';">0,00</div><div class="t" style="left:926px;width:400px;text-align:right;top:224px;font-size:11px;line-height:11px;color:#000000;font-family:'Liberation Sans';">0,00</div><div class="t" style="left:1027px;width:400px;text-align:right;top:224px;font-size:11px;line-height:11px;color:#000000;font-family:'Liberation Sans';">0,00</div><div class="t" style="left:1102px;width:400px;text-align:right;top:224px;font-size:11px;line-height:11px;color:#000000;font-family:'Liberation Sans';">0,00</div><div class="t" style="left:1230px;width:600px;text-align:center;top:224px;font-size:11px;line-height:11px;color:#ff0000;font-family:'Liberation Sans';">√</div><div style="left:364px;top:237px;width:11px;height:15px;background:#f0f0f0;box-shadow:inset 1px 1px #fff"></div><div style="left:363px;top:252px;width:13px;height:1px;background:#808080"></div><div style="left:376px;top:237px;width:1244px;height:15px;background:#ffffff"></div><div style="left:376px;top:252px;width:1245px;height:1px;background:#c0c0c0"></div><div style="left:410px;top:237px;width:1px;height:16px;background:#c0c0c0"></div><div style="left:469px;top:237px;width:1px;height:16px;background:#c0c0c0"></div><div style="left:511px;top:237px;width:1px;height:16px;background:#c0c0c0"></div><div style="left:576px;top:237px;width:1px;height:16px;background:#c0c0c0"></div><div style="left:652px;top:237px;width:1px;height:16px;background:#c0c0c0"></div><div style="left:969px;top:237px;width:1px;height:16px;background:#c0c0c0"></div><div style="left:1010px;top:237px;width:1px;height:16px;background:#c0c0c0"></div><div style="left:1091px;top:237px;width:1px;height:16px;background:#c0c0c0"></div><div style="left:1172px;top:237px;width:1px;height:16px;background:#c0c0c0"></div><div style="left:1253px;top:237px;width:1px;height:16px;background:#c0c0c0"></div><div style="left:1328px;top:237px;width:1px;height:16px;background:#c0c0c0"></div><div style="left:1429px;top:237px;width:1px;height:16px;background:#c0c0c0"></div><div style="left:1504px;top:237px;width:1px;height:16px;background:#c0c0c0"></div><div style="left:1555px;top:237px;width:1px;height:16px;background:#c0c0c0"></div><div style="left:1620px;top:237px;width:1px;height:16px;background:#c0c0c0"></div><div class="t" style="left:7px;width:400px;text-align:right;top:240px;font-size:11px;line-height:11px;color:#000000;font-family:'Liberation Sans';">7</div><svg style="position:absolute;left:435px;top:239px" width="11" height="11" viewBox="0 0 11 11"><rect x="0.5" y="0.5" width="9" height="9" rx="0.8" fill="#f8f8f8" stroke="#8a8a8a"/><rect x="2" y="2" width="6" height="6" fill="#ececec"/><path d="M3 5 L4.3 7.3 L7.6 2.3" fill="none" stroke="#3a55a0" stroke-width="1.4"/></svg><svg style="position:absolute;left:483px;top:237px" width="16" height="16" viewBox="0 0 16 16"><path d="M0.5 2.5 L2.5 0.5 H11.5 V14.5 H0.5 Z" fill="url(#gdoc)" stroke="#404040"/><path d="M0.5 2.5 H2.5 V0.5" fill="#d8f8ff" stroke="#404040"/><path d="M2.5 5.5h6.5M2.5 7.5h6.5M2.5 9.5h6.5M2.5 11.5h6.5" stroke="#5a6a7a" stroke-width="1"/></svg><div class="t" style="left:579px;width:73px;overflow:hidden;top:240px;font-size:11px;line-height:11px;color:#000000;font-family:'Liberation Sans';">1.1.3</div><div class="t" style="left:654px;width:315px;overflow:hidden;top:240px;font-size:11px;line-height:11px;color:#000000;font-family:'Liberation Sans';">Затраты, связанные с оформлением прав владения и пользования</div><div class="t" style="left:689px;width:400px;text-align:right;top:240px;font-size:11px;line-height:11px;color:#000000;font-family:'Liberation Sans';">0,00</div><div class="t" style="left:770px;width:400px;text-align:right;top:240px;font-size:11px;line-height:11px;color:#000000;font-family:'Liberation Sans';">0,00</div><div class="t" style="left:851px;width:400px;text-align:right;top:240px;font-size:11px;line-height:11px;color:#000000;font-family:'Liberation Sans';">0,00</div><div class="t" style="left:926px;width:400px;text-align:right;top:240px;font-size:11px;line-height:11px;color:#000000;font-family:'Liberation Sans';">0,00</div><div class="t" style="left:1027px;width:400px;text-align:right;top:240px;font-size:11px;line-height:11px;color:#000000;font-family:'Liberation Sans';">0,00</div><div class="t" style="left:1102px;width:400px;text-align:right;top:240px;font-size:11px;line-height:11px;color:#000000;font-family:'Liberation Sans';">0,00</div><div class="t" style="left:1230px;width:600px;text-align:center;top:240px;font-size:11px;line-height:11px;color:#ff0000;font-family:'Liberation Sans';">√</div><div style="left:364px;top:253px;width:11px;height:15px;background:#f0f0f0;box-shadow:inset 1px 1px #fff"></div><div style="left:363px;top:268px;width:13px;height:1px;background:#808080"></div><div style="left:376px;top:253px;width:1244px;height:15px;background:#ffffff"></div><div style="left:376px;top:268px;width:1245px;height:1px;background:#c0c0c0"></div><div style="left:410px;top:253px;width:1px;height:16px;background:#c0c0c0"></div><div style="left:469px;top:253px;width:1px;height:16px;background:#c0c0c0"></div><div style="left:511px;top:253px;width:1px;height:16px;background:#c0c0c0"></div><div style="left:576px;top:253px;width:1px;height:16px;background:#c0c0c0"></div><div style="left:652px;top:253px;width:1px;height:16px;background:#c0c0c0"></div><div style="left:969px;top:253px;width:1px;height:16px;background:#c0c0c0"></div><div style="left:1010px;top:253px;width:1px;height:16px;background:#c0c0c0"></div><div style="left:1091px;top:253px;width:1px;height:16px;background:#c0c0c0"></div><div style="left:1172px;top:253px;width:1px;height:16px;background:#c0c0c0"></div><div style="left:1253px;top:253px;width:1px;height:16px;background:#c0c0c0"></div><div style="left:1328px;top:253px;width:1px;height:16px;background:#c0c0c0"></div><div style="left:1429px;top:253px;width:1px;height:16px;background:#c0c0c0"></div><div style="left:1504px;top:253px;width:1px;height:16px;background:#c0c0c0"></div><div style="left:1555px;top:253px;width:1px;height:16px;background:#c0c0c0"></div><div style="left:1620px;top:253px;width:1px;height:16px;background:#c0c0c0"></div><div class="t" style="left:7px;width:400px;text-align:right;top:256px;font-size:11px;line-height:11px;color:#000000;font-family:'Liberation Sans';">8</div><svg style="position:absolute;left:435px;top:255px" width="11" height="11" viewBox="0 0 11 11"><rect x="0.5" y="0.5" width="9" height="9" rx="0.8" fill="#f8f8f8" stroke="#8a8a8a"/><rect x="2" y="2" width="6" height="6" fill="#ececec"/><path d="M3 5 L4.3 7.3 L7.6 2.3" fill="none" stroke="#3a55a0" stroke-width="1.4"/></svg><svg style="position:absolute;left:483px;top:253px" width="16" height="16" viewBox="0 0 16 16"><path d="M0.5 2.5 L2.5 0.5 H11.5 V14.5 H0.5 Z" fill="url(#gdoc)" stroke="#404040"/><path d="M0.5 2.5 H2.5 V0.5" fill="#d8f8ff" stroke="#404040"/><path d="M2.5 5.5h6.5M2.5 7.5h6.5M2.5 9.5h6.5M2.5 11.5h6.5" stroke="#5a6a7a" stroke-width="1"/></svg><div class="t" style="left:579px;width:73px;overflow:hidden;top:256px;font-size:11px;line-height:11px;color:#000000;font-family:'Liberation Sans';">1.1.4</div><div class="t" style="left:654px;width:315px;overflow:hidden;top:256px;font-size:11px;line-height:11px;color:#000000;font-family:'Liberation Sans';">Затраты, связанные с подготовкой документации по планировке</div><div class="t" style="left:689px;width:400px;text-align:right;top:256px;font-size:11px;line-height:11px;color:#000000;font-family:'Liberation Sans';">0,00</div><div class="t" style="left:770px;width:400px;text-align:right;top:256px;font-size:11px;line-height:11px;color:#000000;font-family:'Liberation Sans';">0,00</div><div class="t" style="left:851px;width:400px;text-align:right;top:256px;font-size:11px;line-height:11px;color:#000000;font-family:'Liberation Sans';">0,00</div><div class="t" style="left:926px;width:400px;text-align:right;top:256px;font-size:11px;line-height:11px;color:#000000;font-family:'Liberation Sans';">0,00</div><div class="t" style="left:1027px;width:400px;text-align:right;top:256px;font-size:11px;line-height:11px;color:#000000;font-family:'Liberation Sans';">0,00</div><div class="t" style="left:1102px;width:400px;text-align:right;top:256px;font-size:11px;line-height:11px;color:#000000;font-family:'Liberation Sans';">0,00</div><div class="t" style="left:1230px;width:600px;text-align:center;top:256px;font-size:11px;line-height:11px;color:#ff0000;font-family:'Liberation Sans';">√</div><div style="left:364px;top:269px;width:11px;height:15px;background:#f0f0f0;box-shadow:inset 1px 1px #fff"></div><div style="left:363px;top:284px;width:13px;height:1px;background:#808080"></div><div style="left:376px;top:269px;width:1244px;height:15px;background:#dfdffe"></div><div style="left:376px;top:284px;width:1245px;height:1px;background:#c0c0c0"></div><div style="left:410px;top:269px;width:1px;height:16px;background:#c0c0c0"></div><div style="left:469px;top:269px;width:1px;height:16px;background:#c0c0c0"></div><div style="left:511px;top:269px;width:1px;height:16px;background:#c0c0c0"></div><div style="left:576px;top:269px;width:1px;height:16px;background:#c0c0c0"></div><div style="left:652px;top:269px;width:1px;height:16px;background:#c0c0c0"></div><div style="left:969px;top:269px;width:1px;height:16px;background:#c0c0c0"></div><div style="left:1010px;top:269px;width:1px;height:16px;background:#c0c0c0"></div><div style="left:1091px;top:269px;width:1px;height:16px;background:#c0c0c0"></div><div style="left:1172px;top:269px;width:1px;height:16px;background:#c0c0c0"></div><div style="left:1253px;top:269px;width:1px;height:16px;background:#c0c0c0"></div><div style="left:1328px;top:269px;width:1px;height:16px;background:#c0c0c0"></div><div style="left:1429px;top:269px;width:1px;height:16px;background:#c0c0c0"></div><div style="left:1504px;top:269px;width:1px;height:16px;background:#c0c0c0"></div><div style="left:1555px;top:269px;width:1px;height:16px;background:#c0c0c0"></div><div style="left:1620px;top:269px;width:1px;height:16px;background:#c0c0c0"></div><div class="t" style="left:7px;width:400px;text-align:right;top:272px;font-size:11px;line-height:11px;color:#0000ff;font-family:'Liberation Sans';">9</div><svg style="position:absolute;left:482px;top:269px" width="16" height="16" viewBox="0 0 16 16"><rect x="1" y="0.5" width="7" height="2" fill="#ffb000"/><rect x="0.5" y="2.5" width="15" height="11" fill="url(#gfold)" stroke="#8c8c8c"/></svg><div class="t" style="left:579px;width:73px;overflow:hidden;top:272px;font-size:11px;line-height:11px;color:#0000ff;font-family:'Liberation Sans';">1.2</div><div class="t" style="left:654px;width:315px;overflow:hidden;top:272px;font-size:11px;line-height:11px;color:#0000ff;font-family:'Liberation Sans';">Затраты по освоению территории строительства</div><div class="t" style="left:689px;width:400px;text-align:right;top:272px;font-size:11px;line-height:11px;color:#0000ff;font-family:'Liberation Sans';">0,00</div><div class="t" style="left:770px;width:400px;text-align:right;top:272px;font-size:11px;line-height:11px;color:#0000ff;font-family:'Liberation Sans';">0,00</div><div class="t" style="left:851px;width:400px;text-align:right;top:272px;font-size:11px;line-height:11px;color:#0000ff;font-family:'Liberation Sans';">0,00</div><div class="t" style="left:926px;width:400px;text-align:right;top:272px;font-size:11px;line-height:11px;color:#0000ff;font-family:'Liberation Sans';">0,00</div><div class="t" style="left:1027px;width:400px;text-align:right;top:272px;font-size:11px;line-height:11px;color:#0000ff;font-family:'Liberation Sans';">0,00</div><div class="t" style="left:1102px;width:400px;text-align:right;top:272px;font-size:11px;line-height:11px;color:#0000ff;font-family:'Liberation Sans';">0,00</div><div style="left:364px;top:285px;width:11px;height:15px;background:#f0f0f0;box-shadow:inset 1px 1px #fff"></div><div style="left:363px;top:300px;width:13px;height:1px;background:#808080"></div><div style="left:376px;top:285px;width:1244px;height:15px;background:#ffffff"></div><div style="left:376px;top:300px;width:1245px;height:1px;background:#c0c0c0"></div><div style="left:410px;top:285px;width:1px;height:16px;background:#c0c0c0"></div><div style="left:469px;top:285px;width:1px;height:16px;background:#c0c0c0"></div><div style="left:511px;top:285px;width:1px;height:16px;background:#c0c0c0"></div><div style="left:576px;top:285px;width:1px;height:16px;background:#c0c0c0"></div><div style="left:652px;top:285px;width:1px;height:16px;background:#c0c0c0"></div><div style="left:969px;top:285px;width:1px;height:16px;background:#c0c0c0"></div><div style="left:1010px;top:285px;width:1px;height:16px;background:#c0c0c0"></div><div style="left:1091px;top:285px;width:1px;height:16px;background:#c0c0c0"></div><div style="left:1172px;top:285px;width:1px;height:16px;background:#c0c0c0"></div><div style="left:1253px;top:285px;width:1px;height:16px;background:#c0c0c0"></div><div style="left:1328px;top:285px;width:1px;height:16px;background:#c0c0c0"></div><div style="left:1429px;top:285px;width:1px;height:16px;background:#c0c0c0"></div><div style="left:1504px;top:285px;width:1px;height:16px;background:#c0c0c0"></div><div style="left:1555px;top:285px;width:1px;height:16px;background:#c0c0c0"></div><div style="left:1620px;top:285px;width:1px;height:16px;background:#c0c0c0"></div><div class="t" style="left:7px;width:400px;text-align:right;top:288px;font-size:11px;line-height:11px;color:#000000;font-family:'Liberation Sans';">10</div><svg style="position:absolute;left:435px;top:287px" width="11" height="11" viewBox="0 0 11 11"><rect x="0.5" y="0.5" width="9" height="9" rx="0.8" fill="#f8f8f8" stroke="#8a8a8a"/><rect x="2" y="2" width="6" height="6" fill="#ececec"/><path d="M3 5 L4.3 7.3 L7.6 2.3" fill="none" stroke="#3a55a0" stroke-width="1.4"/></svg><svg style="position:absolute;left:483px;top:285px" width="16" height="16" viewBox="0 0 16 16"><path d="M0.5 2.5 L2.5 0.5 H11.5 V14.5 H0.5 Z" fill="url(#gdoc)" stroke="#404040"/><path d="M0.5 2.5 H2.5 V0.5" fill="#d8f8ff" stroke="#404040"/><path d="M2.5 5.5h6.5M2.5 7.5h6.5M2.5 9.5h6.5M2.5 11.5h6.5" stroke="#5a6a7a" stroke-width="1"/></svg><div class="t" style="left:579px;width:73px;overflow:hidden;top:288px;font-size:11px;line-height:11px;color:#000000;font-family:'Liberation Sans';">1.2.1</div><div class="t" style="left:654px;width:315px;overflow:hidden;top:288px;font-size:11px;line-height:11px;color:#000000;font-family:'Liberation Sans';">Затраты, связанные с возмещением убытков (компенсацией</div><div class="t" style="left:689px;width:400px;text-align:right;top:288px;font-size:11px;line-height:11px;color:#000000;font-family:'Liberation Sans';">0,00</div><div class="t" style="left:770px;width:400px;text-align:right;top:288px;font-size:11px;line-height:11px;color:#000000;font-family:'Liberation Sans';">0,00</div><div class="t" style="left:851px;width:400px;text-align:right;top:288px;font-size:11px;line-height:11px;color:#000000;font-family:'Liberation Sans';">0,00</div><div class="t" style="left:926px;width:400px;text-align:right;top:288px;font-size:11px;line-height:11px;color:#000000;font-family:'Liberation Sans';">0,00</div><div class="t" style="left:1027px;width:400px;text-align:right;top:288px;font-size:11px;line-height:11px;color:#000000;font-family:'Liberation Sans';">0,00</div><div class="t" style="left:1102px;width:400px;text-align:right;top:288px;font-size:11px;line-height:11px;color:#000000;font-family:'Liberation Sans';">0,00</div><div class="t" style="left:1230px;width:600px;text-align:center;top:288px;font-size:11px;line-height:11px;color:#ff0000;font-family:'Liberation Sans';">√</div><div style="left:364px;top:301px;width:11px;height:15px;background:#f0f0f0;box-shadow:inset 1px 1px #fff"></div><div style="left:363px;top:316px;width:13px;height:1px;background:#808080"></div><div style="left:376px;top:301px;width:1244px;height:15px;background:#ffffff"></div><div style="left:376px;top:316px;width:1245px;height:1px;background:#c0c0c0"></div><div style="left:410px;top:301px;width:1px;height:16px;background:#c0c0c0"></div><div style="left:469px;top:301px;width:1px;height:16px;background:#c0c0c0"></div><div style="left:511px;top:301px;width:1px;height:16px;background:#c0c0c0"></div><div style="left:576px;top:301px;width:1px;height:16px;background:#c0c0c0"></div><div style="left:652px;top:301px;width:1px;height:16px;background:#c0c0c0"></div><div style="left:969px;top:301px;width:1px;height:16px;background:#c0c0c0"></div><div style="left:1010px;top:301px;width:1px;height:16px;background:#c0c0c0"></div><div style="left:1091px;top:301px;width:1px;height:16px;background:#c0c0c0"></div><div style="left:1172px;top:301px;width:1px;height:16px;background:#c0c0c0"></div><div style="left:1253px;top:301px;width:1px;height:16px;background:#c0c0c0"></div><div style="left:1328px;top:301px;width:1px;height:16px;background:#c0c0c0"></div><div style="left:1429px;top:301px;width:1px;height:16px;background:#c0c0c0"></div><div style="left:1504px;top:301px;width:1px;height:16px;background:#c0c0c0"></div><div style="left:1555px;top:301px;width:1px;height:16px;background:#c0c0c0"></div><div style="left:1620px;top:301px;width:1px;height:16px;background:#c0c0c0"></div><div class="t" style="left:7px;width:400px;text-align:right;top:304px;font-size:11px;line-height:11px;color:#000000;font-family:'Liberation Sans';">11</div><svg style="position:absolute;left:435px;top:303px" width="11" height="11" viewBox="0 0 11 11"><rect x="0.5" y="0.5" width="9" height="9" rx="0.8" fill="#f8f8f8" stroke="#8a8a8a"/><rect x="2" y="2" width="6" height="6" fill="#ececec"/><path d="M3 5 L4.3 7.3 L7.6 2.3" fill="none" stroke="#3a55a0" stroke-width="1.4"/></svg><svg style="position:absolute;left:483px;top:301px" width="16" height="16" viewBox="0 0 16 16"><path d="M0.5 2.5 L2.5 0.5 H11.5 V14.5 H0.5 Z" fill="url(#gdoc)" stroke="#404040"/><path d="M0.5 2.5 H2.5 V0.5" fill="#d8f8ff" stroke="#404040"/><path d="M2.5 5.5h6.5M2.5 7.5h6.5M2.5 9.5h6.5M2.5 11.5h6.5" stroke="#5a6a7a" stroke-width="1"/></svg><div class="t" style="left:579px;width:73px;overflow:hidden;top:304px;font-size:11px;line-height:11px;color:#000000;font-family:'Liberation Sans';">1.2.2</div><div class="t" style="left:654px;width:315px;overflow:hidden;top:304px;font-size:11px;line-height:11px;color:#000000;font-family:'Liberation Sans';">Затраты по разминированию территории строительства в пределах</div><div class="t" style="left:689px;width:400px;text-align:right;top:304px;font-size:11px;line-height:11px;color:#000000;font-family:'Liberation Sans';">0,00</div><div class="t" style="left:770px;width:400px;text-align:right;top:304px;font-size:11px;line-height:11px;color:#000000;font-family:'Liberation Sans';">0,00</div><div class="t" style="left:851px;width:400px;text-align:right;top:304px;font-size:11px;line-height:11px;color:#000000;font-family:'Liberation Sans';">0,00</div><div class="t" style="left:926px;width:400px;text-align:right;top:304px;font-size:11px;line-height:11px;color:#000000;font-family:'Liberation Sans';">0,00</div><div class="t" style="left:1027px;width:400px;text-align:right;top:304px;font-size:11px;line-height:11px;color:#000000;font-family:'Liberation Sans';">0,00</div><div class="t" style="left:1102px;width:400px;text-align:right;top:304px;font-size:11px;line-height:11px;color:#000000;font-family:'Liberation Sans';">0,00</div><div class="t" style="left:1230px;width:600px;text-align:center;top:304px;font-size:11px;line-height:11px;color:#ff0000;font-family:'Liberation Sans';">√</div><div style="left:364px;top:317px;width:11px;height:15px;background:#f0f0f0;box-shadow:inset 1px 1px #fff"></div><div style="left:363px;top:332px;width:13px;height:1px;background:#808080"></div><div style="left:376px;top:317px;width:1244px;height:15px;background:#ffffff"></div><div style="left:376px;top:332px;width:1245px;height:1px;background:#c0c0c0"></div><div style="left:410px;top:317px;width:1px;height:16px;background:#c0c0c0"></div><div style="left:469px;top:317px;width:1px;height:16px;background:#c0c0c0"></div><div style="left:511px;top:317px;width:1px;height:16px;background:#c0c0c0"></div><div style="left:576px;top:317px;width:1px;height:16px;background:#c0c0c0"></div><div style="left:652px;top:317px;width:1px;height:16px;background:#c0c0c0"></div><div style="left:969px;top:317px;width:1px;height:16px;background:#c0c0c0"></div><div style="left:1010px;top:317px;width:1px;height:16px;background:#c0c0c0"></div><div style="left:1091px;top:317px;width:1px;height:16px;background:#c0c0c0"></div><div style="left:1172px;top:317px;width:1px;height:16px;background:#c0c0c0"></div><div style="left:1253px;top:317px;width:1px;height:16px;background:#c0c0c0"></div><div style="left:1328px;top:317px;width:1px;height:16px;background:#c0c0c0"></div><div style="left:1429px;top:317px;width:1px;height:16px;background:#c0c0c0"></div><div style="left:1504px;top:317px;width:1px;height:16px;background:#c0c0c0"></div><div style="left:1555px;top:317px;width:1px;height:16px;background:#c0c0c0"></div><div style="left:1620px;top:317px;width:1px;height:16px;background:#c0c0c0"></div><div class="t" style="left:7px;width:400px;text-align:right;top:320px;font-size:11px;line-height:11px;color:#000000;font-family:'Liberation Sans';">12</div><svg style="position:absolute;left:435px;top:319px" width="11" height="11" viewBox="0 0 11 11"><rect x="0.5" y="0.5" width="9" height="9" rx="0.8" fill="#f8f8f8" stroke="#8a8a8a"/><rect x="2" y="2" width="6" height="6" fill="#ececec"/><path d="M3 5 L4.3 7.3 L7.6 2.3" fill="none" stroke="#3a55a0" stroke-width="1.4"/></svg><svg style="position:absolute;left:483px;top:317px" width="16" height="16" viewBox="0 0 16 16"><path d="M0.5 2.5 L2.5 0.5 H11.5 V14.5 H0.5 Z" fill="url(#gdoc)" stroke="#404040"/><path d="M0.5 2.5 H2.5 V0.5" fill="#d8f8ff" stroke="#404040"/><path d="M2.5 5.5h6.5M2.5 7.5h6.5M2.5 9.5h6.5M2.5 11.5h6.5" stroke="#5a6a7a" stroke-width="1"/></svg><div class="t" style="left:579px;width:73px;overflow:hidden;top:320px;font-size:11px;line-height:11px;color:#000000;font-family:'Liberation Sans';">1.2.3</div><div class="t" style="left:654px;width:315px;overflow:hidden;top:320px;font-size:11px;line-height:11px;color:#000000;font-family:'Liberation Sans';">Затраты, связанные с организацией мероприятий в случае обнаружения</div><div class="t" style="left:689px;width:400px;text-align:right;top:320px;font-size:11px;line-height:11px;color:#000000;font-family:'Liberation Sans';">0,00</div><div class="t" style="left:770px;width:400px;text-align:right;top:320px;font-size:11px;line-height:11px;color:#000000;font-family:'Liberation Sans';">0,00</div><div class="t" style="left:851px;width:400px;text-align:right;top:320px;font-size:11px;line-height:11px;color:#000000;font-family:'Liberation Sans';">0,00</div><div class="t" style="left:926px;width:400px;text-align:right;top:320px;font-size:11px;line-height:11px;color:#000000;font-family:'Liberation Sans';">0,00</div><div class="t" style="left:1027px;width:400px;text-align:right;top:320px;font-size:11px;line-height:11px;color:#000000;font-family:'Liberation Sans';">0,00</div><div class="t" style="left:1102px;width:400px;text-align:right;top:320px;font-size:11px;line-height:11px;color:#000000;font-family:'Liberation Sans';">0,00</div><div class="t" style="left:1230px;width:600px;text-align:center;top:320px;font-size:11px;line-height:11px;color:#ff0000;font-family:'Liberation Sans';">√</div><div style="left:364px;top:333px;width:11px;height:15px;background:#f0f0f0;box-shadow:inset 1px 1px #fff"></div><div style="left:363px;top:348px;width:13px;height:1px;background:#808080"></div><div style="left:376px;top:333px;width:1244px;height:15px;background:#ffffff"></div><div style="left:376px;top:348px;width:1245px;height:1px;background:#c0c0c0"></div><div style="left:410px;top:333px;width:1px;height:16px;background:#c0c0c0"></div><div style="left:469px;top:333px;width:1px;height:16px;background:#c0c0c0"></div><div style="left:511px;top:333px;width:1px;height:16px;background:#c0c0c0"></div><div style="left:576px;top:333px;width:1px;height:16px;background:#c0c0c0"></div><div style="left:652px;top:333px;width:1px;height:16px;background:#c0c0c0"></div><div style="left:969px;top:333px;width:1px;height:16px;background:#c0c0c0"></div><div style="left:1010px;top:333px;width:1px;height:16px;background:#c0c0c0"></div><div style="left:1091px;top:333px;width:1px;height:16px;background:#c0c0c0"></div><div style="left:1172px;top:333px;width:1px;height:16px;background:#c0c0c0"></div><div style="left:1253px;top:333px;width:1px;height:16px;background:#c0c0c0"></div><div style="left:1328px;top:333px;width:1px;height:16px;background:#c0c0c0"></div><div style="left:1429px;top:333px;width:1px;height:16px;background:#c0c0c0"></div><div style="left:1504px;top:333px;width:1px;height:16px;background:#c0c0c0"></div><div style="left:1555px;top:333px;width:1px;height:16px;background:#c0c0c0"></div><div style="left:1620px;top:333px;width:1px;height:16px;background:#c0c0c0"></div><div class="t" style="left:7px;width:400px;text-align:right;top:336px;font-size:11px;line-height:11px;color:#000000;font-family:'Liberation Sans';">13</div><svg style="position:absolute;left:435px;top:335px" width="11" height="11" viewBox="0 0 11 11"><rect x="0.5" y="0.5" width="9" height="9" rx="0.8" fill="#f8f8f8" stroke="#8a8a8a"/><rect x="2" y="2" width="6" height="6" fill="#ececec"/><path d="M3 5 L4.3 7.3 L7.6 2.3" fill="none" stroke="#3a55a0" stroke-width="1.4"/></svg><svg style="position:absolute;left:483px;top:333px" width="16" height="16" viewBox="0 0 16 16"><path d="M0.5 2.5 L2.5 0.5 H11.5 V14.5 H0.5 Z" fill="url(#gdoc)" stroke="#404040"/><path d="M0.5 2.5 H2.5 V0.5" fill="#d8f8ff" stroke="#404040"/><path d="M2.5 5.5h6.5M2.5 7.5h6.5M2.5 9.5h6.5M2.5 11.5h6.5" stroke="#5a6a7a" stroke-width="1"/></svg><div class="t" style="left:579px;width:73px;overflow:hidden;top:336px;font-size:11px;line-height:11px;color:#000000;font-family:'Liberation Sans';">1.2.4</div><div class="t" style="left:654px;width:315px;overflow:hidden;top:336px;font-size:11px;line-height:11px;color:#000000;font-family:'Liberation Sans';">Затраты на проведение на территории строительства природоохранных</div><div class="t" style="left:689px;width:400px;text-align:right;top:336px;font-size:11px;line-height:11px;color:#000000;font-family:'Liberation Sans';">0,00</div><div class="t" style="left:770px;width:400px;text-align:right;top:336px;font-size:11px;line-height:11px;color:#000000;font-family:'Liberation Sans';">0,00</div><div class="t" style="left:851px;width:400px;text-align:right;top:336px;font-size:11px;line-height:11px;color:#000000;font-family:'Liberation Sans';">0,00</div><div class="t" style="left:926px;width:400px;text-align:right;top:336px;font-size:11px;line-height:11px;color:#000000;font-family:'Liberation Sans';">0,00</div><div class="t" style="left:1027px;width:400px;text-align:right;top:336px;font-size:11px;line-height:11px;color:#000000;font-family:'Liberation Sans';">0,00</div><div class="t" style="left:1102px;width:400px;text-align:right;top:336px;font-size:11px;line-height:11px;color:#000000;font-family:'Liberation Sans';">0,00</div><div class="t" style="left:1230px;width:600px;text-align:center;top:336px;font-size:11px;line-height:11px;color:#ff0000;font-family:'Liberation Sans';">√</div><div style="left:364px;top:349px;width:11px;height:15px;background:#f0f0f0;box-shadow:inset 1px 1px #fff"></div><div style="left:363px;top:364px;width:13px;height:1px;background:#808080"></div><div style="left:376px;top:349px;width:1244px;height:15px;background:#ffffff"></div><div style="left:376px;top:364px;width:1245px;height:1px;background:#c0c0c0"></div><div style="left:410px;top:349px;width:1px;height:16px;background:#c0c0c0"></div><div style="left:469px;top:349px;width:1px;height:16px;background:#c0c0c0"></div><div style="left:511px;top:349px;width:1px;height:16px;background:#c0c0c0"></div><div style="left:576px;top:349px;width:1px;height:16px;background:#c0c0c0"></div><div style="left:652px;top:349px;width:1px;height:16px;background:#c0c0c0"></div><div style="left:969px;top:349px;width:1px;height:16px;background:#c0c0c0"></div><div style="left:1010px;top:349px;width:1px;height:16px;background:#c0c0c0"></div><div style="left:1091px;top:349px;width:1px;height:16px;background:#c0c0c0"></div><div style="left:1172px;top:349px;width:1px;height:16px;background:#c0c0c0"></div><div style="left:1253px;top:349px;width:1px;height:16px;background:#c0c0c0"></div><div style="left:1328px;top:349px;width:1px;height:16px;background:#c0c0c0"></div><div style="left:1429px;top:349px;width:1px;height:16px;background:#c0c0c0"></div><div style="left:1504px;top:349px;width:1px;height:16px;background:#c0c0c0"></div><div style="left:1555px;top:349px;width:1px;height:16px;background:#c0c0c0"></div><div style="left:1620px;top:349px;width:1px;height:16px;background:#c0c0c0"></div><div class="t" style="left:7px;width:400px;text-align:right;top:352px;font-size:11px;line-height:11px;color:#000000;font-family:'Liberation Sans';">14</div><svg style="position:absolute;left:435px;top:351px" width="11" height="11" viewBox="0 0 11 11"><rect x="0.5" y="0.5" width="9" height="9" rx="0.8" fill="#f8f8f8" stroke="#8a8a8a"/><rect x="2" y="2" width="6" height="6" fill="#ececec"/><path d="M3 5 L4.3 7.3 L7.6 2.3" fill="none" stroke="#3a55a0" stroke-width="1.4"/></svg><svg style="position:absolute;left:483px;top:349px" width="16" height="16" viewBox="0 0 16 16"><path d="M0.5 2.5 L2.5 0.5 H11.5 V14.5 H0.5 Z" fill="url(#gdoc)" stroke="#404040"/><path d="M0.5 2.5 H2.5 V0.5" fill="#d8f8ff" stroke="#404040"/><path d="M2.5 5.5h6.5M2.5 7.5h6.5M2.5 9.5h6.5M2.5 11.5h6.5" stroke="#5a6a7a" stroke-width="1"/></svg><div class="t" style="left:579px;width:73px;overflow:hidden;top:352px;font-size:11px;line-height:11px;color:#000000;font-family:'Liberation Sans';">1.2.5</div><div class="t" style="left:654px;width:315px;overflow:hidden;top:352px;font-size:11px;line-height:11px;color:#000000;font-family:'Liberation Sans';">Затраты по инженерной защите территории строительства от</div><div class="t" style="left:689px;width:400px;text-align:right;top:352px;font-size:11px;line-height:11px;color:#000000;font-family:'Liberation Sans';">0,00</div><div class="t" style="left:770px;width:400px;text-align:right;top:352px;font-size:11px;line-height:11px;color:#000000;font-family:'Liberation Sans';">0,00</div><div class="t" style="left:851px;width:400px;text-align:right;top:352px;font-size:11px;line-height:11px;color:#000000;font-family:'Liberation Sans';">0,00</div><div class="t" style="left:926px;width:400px;text-align:right;top:352px;font-size:11px;line-height:11px;color:#000000;font-family:'Liberation Sans';">0,00</div><div class="t" style="left:1027px;width:400px;text-align:right;top:352px;font-size:11px;line-height:11px;color:#000000;font-family:'Liberation Sans';">0,00</div><div class="t" style="left:1102px;width:400px;text-align:right;top:352px;font-size:11px;line-height:11px;color:#000000;font-family:'Liberation Sans';">0,00</div><div class="t" style="left:1230px;width:600px;text-align:center;top:352px;font-size:11px;line-height:11px;color:#ff0000;font-family:'Liberation Sans';">√</div><div style="left:364px;top:365px;width:11px;height:15px;background:#f0f0f0;box-shadow:inset 1px 1px #fff"></div><div style="left:363px;top:380px;width:13px;height:1px;background:#808080"></div><div style="left:376px;top:365px;width:1244px;height:15px;background:#ffffff"></div><div style="left:376px;top:380px;width:1245px;height:1px;background:#c0c0c0"></div><div style="left:410px;top:365px;width:1px;height:16px;background:#c0c0c0"></div><div style="left:469px;top:365px;width:1px;height:16px;background:#c0c0c0"></div><div style="left:511px;top:365px;width:1px;height:16px;background:#c0c0c0"></div><div style="left:576px;top:365px;width:1px;height:16px;background:#c0c0c0"></div><div style="left:652px;top:365px;width:1px;height:16px;background:#c0c0c0"></div><div style="left:969px;top:365px;width:1px;height:16px;background:#c0c0c0"></div><div style="left:1010px;top:365px;width:1px;height:16px;background:#c0c0c0"></div><div style="left:1091px;top:365px;width:1px;height:16px;background:#c0c0c0"></div><div style="left:1172px;top:365px;width:1px;height:16px;background:#c0c0c0"></div><div style="left:1253px;top:365px;width:1px;height:16px;background:#c0c0c0"></div><div style="left:1328px;top:365px;width:1px;height:16px;background:#c0c0c0"></div><div style="left:1429px;top:365px;width:1px;height:16px;background:#c0c0c0"></div><div style="left:1504px;top:365px;width:1px;height:16px;background:#c0c0c0"></div><div style="left:1555px;top:365px;width:1px;height:16px;background:#c0c0c0"></div><div style="left:1620px;top:365px;width:1px;height:16px;background:#c0c0c0"></div><div class="t" style="left:7px;width:400px;text-align:right;top:368px;font-size:11px;line-height:11px;color:#000000;font-family:'Liberation Sans';">15</div><svg style="position:absolute;left:435px;top:367px" width="11" height="11" viewBox="0 0 11 11"><rect x="0.5" y="0.5" width="9" height="9" rx="0.8" fill="#f8f8f8" stroke="#8a8a8a"/><rect x="2" y="2" width="6" height="6" fill="#ececec"/><path d="M3 5 L4.3 7.3 L7.6 2.3" fill="none" stroke="#3a55a0" stroke-width="1.4"/></svg><svg style="position:absolute;left:483px;top:365px" width="16" height="16" viewBox="0 0 16 16"><path d="M0.5 2.5 L2.5 0.5 H11.5 V14.5 H0.5 Z" fill="url(#gdoc)" stroke="#404040"/><path d="M0.5 2.5 H2.5 V0.5" fill="#d8f8ff" stroke="#404040"/><path d="M2.5 5.5h6.5M2.5 7.5h6.5M2.5 9.5h6.5M2.5 11.5h6.5" stroke="#5a6a7a" stroke-width="1"/></svg><div class="t" style="left:579px;width:73px;overflow:hidden;top:368px;font-size:11px;line-height:11px;color:#000000;font-family:'Liberation Sans';">1.2.6</div><div class="t" style="left:654px;width:315px;overflow:hidden;top:368px;font-size:11px;line-height:11px;color:#000000;font-family:'Liberation Sans';">Затраты, связанные с изменением схемы движения транспорта</div><div class="t" style="left:689px;width:400px;text-align:right;top:368px;font-size:11px;line-height:11px;color:#000000;font-family:'Liberation Sans';">0,00</div><div class="t" style="left:770px;width:400px;text-align:right;top:368px;font-size:11px;line-height:11px;color:#000000;font-family:'Liberation Sans';">0,00</div><div class="t" style="left:851px;width:400px;text-align:right;top:368px;font-size:11px;line-height:11px;color:#000000;font-family:'Liberation Sans';">0,00</div><div class="t" style="left:926px;width:400px;text-align:right;top:368px;font-size:11px;line-height:11px;color:#000000;font-family:'Liberation Sans';">0,00</div><div class="t" style="left:1027px;width:400px;text-align:right;top:368px;font-size:11px;line-height:11px;color:#000000;font-family:'Liberation Sans';">0,00</div><div class="t" style="left:1102px;width:400px;text-align:right;top:368px;font-size:11px;line-height:11px;color:#000000;font-family:'Liberation Sans';">0,00</div><div class="t" style="left:1230px;width:600px;text-align:center;top:368px;font-size:11px;line-height:11px;color:#ff0000;font-family:'Liberation Sans';">√</div><div style="left:364px;top:381px;width:11px;height:15px;background:#f0f0f0;box-shadow:inset 1px 1px #fff"></div><div style="left:363px;top:396px;width:13px;height:1px;background:#808080"></div><div style="left:376px;top:381px;width:1244px;height:15px;background:#ffffff"></div><div style="left:376px;top:396px;width:1245px;height:1px;background:#c0c0c0"></div><div style="left:410px;top:381px;width:1px;height:16px;background:#c0c0c0"></div><div style="left:469px;top:381px;width:1px;height:16px;background:#c0c0c0"></div><div style="left:511px;top:381px;width:1px;height:16px;background:#c0c0c0"></div><div style="left:576px;top:381px;width:1px;height:16px;background:#c0c0c0"></div><div style="left:652px;top:381px;width:1px;height:16px;background:#c0c0c0"></div><div style="left:969px;top:381px;width:1px;height:16px;background:#c0c0c0"></div><div style="left:1010px;top:381px;width:1px;height:16px;background:#c0c0c0"></div><div style="left:1091px;top:381px;width:1px;height:16px;background:#c0c0c0"></div><div style="left:1172px;top:381px;width:1px;height:16px;background:#c0c0c0"></div><div style="left:1253px;top:381px;width:1px;height:16px;background:#c0c0c0"></div><div style="left:1328px;top:381px;width:1px;height:16px;background:#c0c0c0"></div><div style="left:1429px;top:381px;width:1px;height:16px;background:#c0c0c0"></div><div style="left:1504px;top:381px;width:1px;height:16px;background:#c0c0c0"></div><div style="left:1555px;top:381px;width:1px;height:16px;background:#c0c0c0"></div><div style="left:1620px;top:381px;width:1px;height:16px;background:#c0c0c0"></div><div class="t" style="left:7px;width:400px;text-align:right;top:384px;font-size:11px;line-height:11px;color:#000000;font-family:'Liberation Sans';">16</div><svg style="position:absolute;left:435px;top:383px" width="11" height="11" viewBox="0 0 11 11"><rect x="0.5" y="0.5" width="9" height="9" rx="0.8" fill="#f8f8f8" stroke="#8a8a8a"/><rect x="2" y="2" width="6" height="6" fill="#ececec"/><path d="M3 5 L4.3 7.3 L7.6 2.3" fill="none" stroke="#3a55a0" stroke-width="1.4"/></svg><svg style="position:absolute;left:483px;top:381px" width="16" height="16" viewBox="0 0 16 16"><path d="M0.5 2.5 L2.5 0.5 H11.5 V14.5 H0.5 Z" fill="url(#gdoc)" stroke="#404040"/><path d="M0.5 2.5 H2.5 V0.5" fill="#d8f8ff" stroke="#404040"/><path d="M2.5 5.5h6.5M2.5 7.5h6.5M2.5 9.5h6.5M2.5 11.5h6.5" stroke="#5a6a7a" stroke-width="1"/></svg><div class="t" style="left:579px;width:73px;overflow:hidden;top:384px;font-size:11px;line-height:11px;color:#000000;font-family:'Liberation Sans';">1.2.7</div><div class="t" style="left:654px;width:315px;overflow:hidden;top:384px;font-size:11px;line-height:11px;color:#000000;font-family:'Liberation Sans';">Приведение земельных участков, предоставленных во временное</div><div class="t" style="left:689px;width:400px;text-align:right;top:384px;font-size:11px;line-height:11px;color:#000000;font-family:'Liberation Sans';">0,00</div><div class="t" style="left:770px;width:400px;text-align:right;top:384px;font-size:11px;line-height:11px;color:#000000;font-family:'Liberation Sans';">0,00</div><div class="t" style="left:851px;width:400px;text-align:right;top:384px;font-size:11px;line-height:11px;color:#000000;font-family:'Liberation Sans';">0,00</div><div class="t" style="left:926px;width:400px;text-align:right;top:384px;font-size:11px;line-height:11px;color:#000000;font-family:'Liberation Sans';">0,00</div><div class="t" style="left:1027px;width:400px;text-align:right;top:384px;font-size:11px;line-height:11px;color:#000000;font-family:'Liberation Sans';">0,00</div><div class="t" style="left:1102px;width:400px;text-align:right;top:384px;font-size:11px;line-height:11px;color:#000000;font-family:'Liberation Sans';">0,00</div><div class="t" style="left:1230px;width:600px;text-align:center;top:384px;font-size:11px;line-height:11px;color:#ff0000;font-family:'Liberation Sans';">√</div><div style="left:364px;top:397px;width:11px;height:15px;background:#f0f0f0;box-shadow:inset 1px 1px #fff"></div><div style="left:363px;top:412px;width:13px;height:1px;background:#808080"></div><div style="left:376px;top:397px;width:1244px;height:15px;background:#ffe3d8"></div><div style="left:376px;top:412px;width:1245px;height:1px;background:#c0c0c0"></div><div style="left:410px;top:397px;width:1px;height:16px;background:#c0c0c0"></div><div style="left:469px;top:397px;width:1px;height:16px;background:#c0c0c0"></div><div style="left:511px;top:397px;width:1px;height:16px;background:#c0c0c0"></div><div style="left:576px;top:397px;width:1px;height:16px;background:#c0c0c0"></div><div style="left:652px;top:397px;width:1px;height:16px;background:#c0c0c0"></div><div style="left:969px;top:397px;width:1px;height:16px;background:#c0c0c0"></div><div style="left:1010px;top:397px;width:1px;height:16px;background:#c0c0c0"></div><div style="left:1091px;top:397px;width:1px;height:16px;background:#c0c0c0"></div><div style="left:1172px;top:397px;width:1px;height:16px;background:#c0c0c0"></div><div style="left:1253px;top:397px;width:1px;height:16px;background:#c0c0c0"></div><div style="left:1328px;top:397px;width:1px;height:16px;background:#c0c0c0"></div><div style="left:1429px;top:397px;width:1px;height:16px;background:#c0c0c0"></div><div style="left:1504px;top:397px;width:1px;height:16px;background:#c0c0c0"></div><div style="left:1555px;top:397px;width:1px;height:16px;background:#c0c0c0"></div><div style="left:1620px;top:397px;width:1px;height:16px;background:#c0c0c0"></div><div class="t" style="left:7px;width:400px;text-align:right;top:400px;font-size:11px;line-height:11px;color:#000000;font-family:'Liberation Sans';">17</div><svg style="position:absolute;left:435px;top:399px" width="11" height="11" viewBox="0 0 11 11"><rect x="0.5" y="0.5" width="9" height="9" rx="0.8" fill="#f8f8f8" stroke="#8a8a8a"/><rect x="2" y="2" width="6" height="6" fill="#ececec"/><path d="M3 5 L4.3 7.3 L7.6 2.3" fill="none" stroke="#3a55a0" stroke-width="1.4"/></svg><svg style="position:absolute;left:483px;top:397px" width="16" height="16" viewBox="0 0 16 16"><path d="M0.5 2.5 L2.5 0.5 H11.5 V14.5 H0.5 Z" fill="url(#gdoc)" stroke="#404040"/><path d="M0.5 2.5 H2.5 V0.5" fill="#d8f8ff" stroke="#404040"/><path d="M2.5 5.5h6.5M2.5 7.5h6.5M2.5 9.5h6.5M2.5 11.5h6.5" stroke="#5a6a7a" stroke-width="1"/></svg><div class="t" style="left:579px;width:73px;overflow:hidden;top:400px;font-size:11px;line-height:11px;color:#000000;font-family:'Liberation Sans';">Итог 4</div><div class="t" style="left:654px;width:315px;overflow:hidden;top:400px;font-size:11px;line-height:11px;color:#000000;font-family:'Liberation Sans';">Авторский надзор</div><div style="left:1011px;top:397px;width:80px;height:15px;background:#0078d7;box-shadow:inset 0 0 0 1px #f0a030;outline:1px dotted #000;outline-offset:-1px"></div><div class="t" style="left:689px;width:400px;text-align:right;top:400px;font-size:11px;line-height:11px;color:#fff;font-family:'Liberation Sans';">0,00</div><div class="t" style="left:770px;width:400px;text-align:right;top:400px;font-size:11px;line-height:11px;color:#000000;font-family:'Liberation Sans';">0,00</div><div class="t" style="left:851px;width:400px;text-align:right;top:400px;font-size:11px;line-height:11px;color:#000000;font-family:'Liberation Sans';">0,00</div><div class="t" style="left:926px;width:400px;text-align:right;top:400px;font-size:11px;line-height:11px;color:#000000;font-family:'Liberation Sans';">0,00</div><div class="t" style="left:1027px;width:400px;text-align:right;top:400px;font-size:11px;line-height:11px;color:#000000;font-family:'Liberation Sans';">0,00</div><div class="t" style="left:1102px;width:400px;text-align:right;top:400px;font-size:11px;line-height:11px;color:#000000;font-family:'Liberation Sans';">0,00</div><div class="t" style="left:1230px;width:600px;text-align:center;top:400px;font-size:11px;line-height:11px;color:#000000;font-family:'Liberation Sans';">√</div><div style="left:1556px;top:397px;width:64px;height:15px;background:#ffd6d6"></div><div class="t" style="left:1557px;width:63px;overflow:hidden;top:400px;font-size:11px;line-height:11px;color:#000;font-family:'Liberation Sans';">(Не зад...</div><div style="left:364px;top:413px;width:11px;height:15px;background:#f0f0f0;box-shadow:inset 1px 1px #fff"></div><div style="left:363px;top:428px;width:13px;height:1px;background:#808080"></div><div style="left:376px;top:413px;width:1244px;height:15px;background:#ffffff"></div><div style="left:376px;top:428px;width:1245px;height:1px;background:#c0c0c0"></div><div style="left:410px;top:413px;width:1px;height:16px;background:#c0c0c0"></div><div style="left:469px;top:413px;width:1px;height:16px;background:#c0c0c0"></div><div style="left:511px;top:413px;width:1px;height:16px;background:#c0c0c0"></div><div style="left:576px;top:413px;width:1px;height:16px;background:#c0c0c0"></div><div style="left:652px;top:413px;width:1px;height:16px;background:#c0c0c0"></div><div style="left:969px;top:413px;width:1px;height:16px;background:#c0c0c0"></div><div style="left:1010px;top:413px;width:1px;height:16px;background:#c0c0c0"></div><div style="left:1091px;top:413px;width:1px;height:16px;background:#c0c0c0"></div><div style="left:1172px;top:413px;width:1px;height:16px;background:#c0c0c0"></div><div style="left:1253px;top:413px;width:1px;height:16px;background:#c0c0c0"></div><div style="left:1328px;top:413px;width:1px;height:16px;background:#c0c0c0"></div><div style="left:1429px;top:413px;width:1px;height:16px;background:#c0c0c0"></div><div style="left:1504px;top:413px;width:1px;height:16px;background:#c0c0c0"></div><div style="left:1555px;top:413px;width:1px;height:16px;background:#c0c0c0"></div><div style="left:1620px;top:413px;width:1px;height:16px;background:#c0c0c0"></div><div class="t" style="left:7px;width:400px;text-align:right;top:416px;font-size:11px;line-height:11px;color:#000000;font-family:'Liberation Sans';">18</div><svg style="position:absolute;left:435px;top:415px" width="11" height="11" viewBox="0 0 11 11"><rect x="0.5" y="0.5" width="9" height="9" rx="0.8" fill="#f8f8f8" stroke="#8a8a8a"/><rect x="2" y="2" width="6" height="6" fill="#ececec"/><path d="M3 5 L4.3 7.3 L7.6 2.3" fill="none" stroke="#3a55a0" stroke-width="1.4"/></svg><svg style="position:absolute;left:483px;top:413px" width="16" height="16" viewBox="0 0 16 16"><path d="M0.5 2.5 L2.5 0.5 H11.5 V14.5 H0.5 Z" fill="url(#gdoc)" stroke="#404040"/><path d="M0.5 2.5 H2.5 V0.5" fill="#d8f8ff" stroke="#404040"/><path d="M2.5 5.5h6.5M2.5 7.5h6.5M2.5 9.5h6.5M2.5 11.5h6.5" stroke="#5a6a7a" stroke-width="1"/></svg><div class="t" style="left:579px;width:73px;overflow:hidden;top:416px;font-size:11px;line-height:11px;color:#000000;font-family:'Liberation Sans';">1.2.8</div><div class="t" style="left:654px;width:315px;overflow:hidden;top:416px;font-size:11px;line-height:11px;color:#000000;font-family:'Liberation Sans';">Затраты на подготовку и экспертизу проекта освоения лесов</div><div class="t" style="left:689px;width:400px;text-align:right;top:416px;font-size:11px;line-height:11px;color:#000000;font-family:'Liberation Sans';">0,00</div><div class="t" style="left:770px;width:400px;text-align:right;top:416px;font-size:11px;line-height:11px;color:#000000;font-family:'Liberation Sans';">0,00</div><div class="t" style="left:851px;width:400px;text-align:right;top:416px;font-size:11px;line-height:11px;color:#000000;font-family:'Liberation Sans';">0,00</div><div class="t" style="left:926px;width:400px;text-align:right;top:416px;font-size:11px;line-height:11px;color:#000000;font-family:'Liberation Sans';">0,00</div><div class="t" style="left:1027px;width:400px;text-align:right;top:416px;font-size:11px;line-height:11px;color:#000000;font-family:'Liberation Sans';">0,00</div><div class="t" style="left:1102px;width:400px;text-align:right;top:416px;font-size:11px;line-height:11px;color:#000000;font-family:'Liberation Sans';">0,00</div><div class="t" style="left:1230px;width:600px;text-align:center;top:416px;font-size:11px;line-height:11px;color:#ff0000;font-family:'Liberation Sans';">√</div><div style="left:364px;top:429px;width:11px;height:15px;background:#f0f0f0;box-shadow:inset 1px 1px #fff"></div><div style="left:363px;top:444px;width:13px;height:1px;background:#808080"></div><div style="left:376px;top:429px;width:1244px;height:15px;background:#dfdffe"></div><div style="left:376px;top:444px;width:1245px;height:1px;background:#c0c0c0"></div><div style="left:410px;top:429px;width:1px;height:16px;background:#c0c0c0"></div><div style="left:469px;top:429px;width:1px;height:16px;background:#c0c0c0"></div><div style="left:511px;top:429px;width:1px;height:16px;background:#c0c0c0"></div><div style="left:576px;top:429px;width:1px;height:16px;background:#c0c0c0"></div><div style="left:652px;top:429px;width:1px;height:16px;background:#c0c0c0"></div><div style="left:969px;top:429px;width:1px;height:16px;background:#c0c0c0"></div><div style="left:1010px;top:429px;width:1px;height:16px;background:#c0c0c0"></div><div style="left:1091px;top:429px;width:1px;height:16px;background:#c0c0c0"></div><div style="left:1172px;top:429px;width:1px;height:16px;background:#c0c0c0"></div><div style="left:1253px;top:429px;width:1px;height:16px;background:#c0c0c0"></div><div style="left:1328px;top:429px;width:1px;height:16px;background:#c0c0c0"></div><div style="left:1429px;top:429px;width:1px;height:16px;background:#c0c0c0"></div><div style="left:1504px;top:429px;width:1px;height:16px;background:#c0c0c0"></div><div style="left:1555px;top:429px;width:1px;height:16px;background:#c0c0c0"></div><div style="left:1620px;top:429px;width:1px;height:16px;background:#c0c0c0"></div><div class="t" style="left:7px;width:400px;text-align:right;top:432px;font-size:11px;line-height:11px;color:#0000ff;font-family:'Liberation Sans';">19</div><svg style="position:absolute;left:482px;top:429px" width="16" height="16" viewBox="0 0 16 16"><rect x="1" y="0.5" width="7" height="2" fill="#ffb000"/><rect x="0.5" y="2.5" width="15" height="11" fill="url(#gfold)" stroke="#8c8c8c"/></svg><div class="t" style="left:579px;width:73px;overflow:hidden;top:432px;font-size:11px;line-height:11px;color:#0000ff;font-family:'Liberation Sans';">Гл. 2</div><div class="t" style="left:654px;width:315px;overflow:hidden;top:432px;font-size:11px;line-height:11px;color:#0000ff;font-family:'Liberation Sans';">Глава  2. Основные объекты строительства, реконструкции, </div><div class="t" style="left:607px;width:400px;text-align:right;top:432px;font-size:11px;line-height:11px;color:#0000ff;font-family:'Liberation Sans';">2</div><div class="t" style="left:689px;width:400px;text-align:right;top:432px;font-size:11px;line-height:11px;color:#0000ff;font-family:'Liberation Sans';">997,76</div><div class="t" style="left:770px;width:400px;text-align:right;top:432px;font-size:11px;line-height:11px;color:#0000ff;font-family:'Liberation Sans';">0,00</div><div class="t" style="left:851px;width:400px;text-align:right;top:432px;font-size:11px;line-height:11px;color:#0000ff;font-family:'Liberation Sans';">0,00</div><div class="t" style="left:926px;width:400px;text-align:right;top:432px;font-size:11px;line-height:11px;color:#0000ff;font-family:'Liberation Sans';">0,00</div><div class="t" style="left:1027px;width:400px;text-align:right;top:432px;font-size:11px;line-height:11px;color:#0000ff;font-family:'Liberation Sans';">997,76</div><div class="t" style="left:1102px;width:400px;text-align:right;top:432px;font-size:11px;line-height:11px;color:#0000ff;font-family:'Liberation Sans';">0,00</div><div class="t" style="left:1230px;width:600px;text-align:center;top:432px;font-size:11px;line-height:11px;color:#0000ff;font-family:'Liberation Sans';">√</div><div style="left:364px;top:445px;width:11px;height:15px;background:#f0f0f0;box-shadow:inset 1px 1px #fff"></div><div style="left:363px;top:460px;width:13px;height:1px;background:#808080"></div><div style="left:376px;top:445px;width:1244px;height:15px;background:#e2fcfc"></div><div style="left:376px;top:460px;width:1245px;height:1px;background:#c0c0c0"></div><div style="left:410px;top:445px;width:1px;height:16px;background:#c0c0c0"></div><div style="left:469px;top:445px;width:1px;height:16px;background:#c0c0c0"></div><div style="left:511px;top:445px;width:1px;height:16px;background:#c0c0c0"></div><div style="left:576px;top:445px;width:1px;height:16px;background:#c0c0c0"></div><div style="left:652px;top:445px;width:1px;height:16px;background:#c0c0c0"></div><div style="left:969px;top:445px;width:1px;height:16px;background:#c0c0c0"></div><div style="left:1010px;top:445px;width:1px;height:16px;background:#c0c0c0"></div><div style="left:1091px;top:445px;width:1px;height:16px;background:#c0c0c0"></div><div style="left:1172px;top:445px;width:1px;height:16px;background:#c0c0c0"></div><div style="left:1253px;top:445px;width:1px;height:16px;background:#c0c0c0"></div><div style="left:1328px;top:445px;width:1px;height:16px;background:#c0c0c0"></div><div style="left:1429px;top:445px;width:1px;height:16px;background:#c0c0c0"></div><div style="left:1504px;top:445px;width:1px;height:16px;background:#c0c0c0"></div><div style="left:1555px;top:445px;width:1px;height:16px;background:#c0c0c0"></div><div style="left:1620px;top:445px;width:1px;height:16px;background:#c0c0c0"></div><div class="t" style="left:7px;width:400px;text-align:right;top:448px;font-size:11px;line-height:11px;color:#000000;font-family:'Liberation Sans';">20</div><svg style="position:absolute;left:435px;top:447px" width="11" height="11" viewBox="0 0 11 11"><rect x="0.5" y="0.5" width="9" height="9" rx="0.8" fill="#f8f8f8" stroke="#8a8a8a"/><rect x="2" y="2" width="6" height="6" fill="#ececec"/><path d="M3 5 L4.3 7.3 L7.6 2.3" fill="none" stroke="#3a55a0" stroke-width="1.4"/></svg><svg style="position:absolute;left:482px;top:444px" width="16" height="16" viewBox="0 0 16 16"><path d="M0.5 9 L7 2 L15.5 4 L15.5 9 L9 15.5 L0.5 13 Z" fill="#e8e8e8" stroke="#c0c0c0" stroke-width="0.8"/><path d="M0.5 9 L7 1 L15.5 3 L9 11 Z" fill="url(#gbook)"/><path d="M0.5 9 L9 11 L9 13 L0.5 11 Z" fill="#2a8050"/><path d="M7 4 L12 5" stroke="#fff" stroke-width="1.3"/></svg><div class="t" style="left:513px;width:63px;overflow:hidden;top:448px;font-size:11px;line-height:11px;color:#000000;font-family:'Liberation Sans';">ЛС-02-01</div><div class="t" style="left:654px;width:315px;overflow:hidden;top:448px;font-size:11px;line-height:11px;color:#000000;font-family:'Liberation Sans';">Устройство котлована</div><div class="t" style="left:689px;width:400px;text-align:right;top:448px;font-size:11px;line-height:11px;color:#000000;font-family:'Liberation Sans';">84,33</div><div class="t" style="left:770px;width:400px;text-align:right;top:448px;font-size:11px;line-height:11px;color:#000000;font-family:'Liberation Sans';">0,00</div><div class="t" style="left:851px;width:400px;text-align:right;top:448px;font-size:11px;line-height:11px;color:#000000;font-family:'Liberation Sans';">0,00</div><div class="t" style="left:926px;width:400px;text-align:right;top:448px;font-size:11px;line-height:11px;color:#000000;font-family:'Liberation Sans';">0,00</div><div class="t" style="left:1027px;width:400px;text-align:right;top:448px;font-size:11px;line-height:11px;color:#000000;font-family:'Liberation Sans';">84,33</div><div class="t" style="left:1102px;width:400px;text-align:right;top:448px;font-size:11px;line-height:11px;color:#000000;font-family:'Liberation Sans';">0,00</div><div class="t" style="left:1230px;width:600px;text-align:center;top:448px;font-size:11px;line-height:11px;color:#000000;font-family:'Liberation Sans';">√</div><div class="t" style="left:1557px;width:63px;overflow:hidden;top:448px;font-size:11px;line-height:11px;color:#000;font-family:'Liberation Sans';">НПР</div><div style="left:364px;top:461px;width:11px;height:15px;background:#f0f0f0;box-shadow:inset 1px 1px #fff"></div><div style="left:363px;top:476px;width:13px;height:1px;background:#808080"></div><div style="left:376px;top:461px;width:1244px;height:15px;background:#e2fcfc"></div><div style="left:376px;top:476px;width:1245px;height:1px;background:#c0c0c0"></div><div style="left:410px;top:461px;width:1px;height:16px;background:#c0c0c0"></div><div style="left:469px;top:461px;width:1px;height:16px;background:#c0c0c0"></div><div style="left:511px;top:461px;width:1px;height:16px;background:#c0c0c0"></div><div style="left:576px;top:461px;width:1px;height:16px;background:#c0c0c0"></div><div style="left:652px;top:461px;width:1px;height:16px;background:#c0c0c0"></div><div style="left:969px;top:461px;width:1px;height:16px;background:#c0c0c0"></div><div style="left:1010px;top:461px;width:1px;height:16px;background:#c0c0c0"></div><div style="left:1091px;top:461px;width:1px;height:16px;background:#c0c0c0"></div><div style="left:1172px;top:461px;width:1px;height:16px;background:#c0c0c0"></div><div style="left:1253px;top:461px;width:1px;height:16px;background:#c0c0c0"></div><div style="left:1328px;top:461px;width:1px;height:16px;background:#c0c0c0"></div><div style="left:1429px;top:461px;width:1px;height:16px;background:#c0c0c0"></div><div style="left:1504px;top:461px;width:1px;height:16px;background:#c0c0c0"></div><div style="left:1555px;top:461px;width:1px;height:16px;background:#c0c0c0"></div><div style="left:1620px;top:461px;width:1px;height:16px;background:#c0c0c0"></div><div class="t" style="left:7px;width:400px;text-align:right;top:464px;font-size:11px;line-height:11px;color:#000000;font-family:'Liberation Sans';">21</div><svg style="position:absolute;left:435px;top:463px" width="11" height="11" viewBox="0 0 11 11"><rect x="0.5" y="0.5" width="9" height="9" rx="0.8" fill="#f8f8f8" stroke="#8a8a8a"/><rect x="2" y="2" width="6" height="6" fill="#ececec"/><path d="M3 5 L4.3 7.3 L7.6 2.3" fill="none" stroke="#3a55a0" stroke-width="1.4"/></svg><svg style="position:absolute;left:482px;top:460px" width="16" height="16" viewBox="0 0 16 16"><path d="M0.5 9 L7 2 L15.5 4 L15.5 9 L9 15.5 L0.5 13 Z" fill="#e8e8e8" stroke="#c0c0c0" stroke-width="0.8"/><path d="M0.5 9 L7 1 L15.5 3 L9 11 Z" fill="url(#gbook)"/><path d="M0.5 9 L9 11 L9 13 L0.5 11 Z" fill="#2a8050"/><path d="M7 4 L12 5" stroke="#fff" stroke-width="1.3"/></svg><div class="t" style="left:513px;width:63px;overflow:hidden;top:464px;font-size:11px;line-height:11px;color:#000000;font-family:'Liberation Sans';">ЛС-02-02</div><div class="t" style="left:654px;width:315px;overflow:hidden;top:464px;font-size:11px;line-height:11px;color:#000000;font-family:'Liberation Sans';">Фундамент</div><div class="t" style="left:689px;width:400px;text-align:right;top:464px;font-size:11px;line-height:11px;color:#000000;font-family:'Liberation Sans';">913,43</div><div class="t" style="left:770px;width:400px;text-align:right;top:464px;font-size:11px;line-height:11px;color:#000000;font-family:'Liberation Sans';">0,00</div><div class="t" style="left:851px;width:400px;text-align:right;top:464px;font-size:11px;line-height:11px;color:#000000;font-family:'Liberation Sans';">0,00</div><div class="t" style="left:926px;width:400px;text-align:right;top:464px;font-size:11px;line-height:11px;color:#000000;font-family:'Liberation Sans';">0,00</div><div class="t" style="left:1027px;width:400px;text-align:right;top:464px;font-size:11px;line-height:11px;color:#000000;font-family:'Liberation Sans';">913,43</div><div class="t" style="left:1102px;width:400px;text-align:right;top:464px;font-size:11px;line-height:11px;color:#000000;font-family:'Liberation Sans';">0,00</div><div class="t" style="left:1230px;width:600px;text-align:center;top:464px;font-size:11px;line-height:11px;color:#000000;font-family:'Liberation Sans';">√</div><div class="t" style="left:1557px;width:63px;overflow:hidden;top:464px;font-size:11px;line-height:11px;color:#000;font-family:'Liberation Sans';">НПР</div><div style="left:364px;top:477px;width:11px;height:15px;background:#f0f0f0;box-shadow:inset 1px 1px #fff"></div><div style="left:363px;top:492px;width:13px;height:1px;background:#808080"></div><div style="left:376px;top:477px;width:1244px;height:15px;background:#dfdffe"></div><div style="left:376px;top:492px;width:1245px;height:1px;background:#c0c0c0"></div><div style="left:410px;top:477px;width:1px;height:16px;background:#c0c0c0"></div><div style="left:469px;top:477px;width:1px;height:16px;background:#c0c0c0"></div><div style="left:511px;top:477px;width:1px;height:16px;background:#c0c0c0"></div><div style="left:576px;top:477px;width:1px;height:16px;background:#c0c0c0"></div><div style="left:652px;top:477px;width:1px;height:16px;background:#c0c0c0"></div><div style="left:969px;top:477px;width:1px;height:16px;background:#c0c0c0"></div><div style="left:1010px;top:477px;width:1px;height:16px;background:#c0c0c0"></div><div style="left:1091px;top:477px;width:1px;height:16px;background:#c0c0c0"></div><div style="left:1172px;top:477px;width:1px;height:16px;background:#c0c0c0"></div><div style="left:1253px;top:477px;width:1px;height:16px;background:#c0c0c0"></div><div style="left:1328px;top:477px;width:1px;height:16px;background:#c0c0c0"></div><div style="left:1429px;top:477px;width:1px;height:16px;background:#c0c0c0"></div><div style="left:1504px;top:477px;width:1px;height:16px;background:#c0c0c0"></div><div style="left:1555px;top:477px;width:1px;height:16px;background:#c0c0c0"></div><div style="left:1620px;top:477px;width:1px;height:16px;background:#c0c0c0"></div><div class="t" style="left:7px;width:400px;text-align:right;top:480px;font-size:11px;line-height:11px;color:#0000ff;font-family:'Liberation Sans';">22</div><svg style="position:absolute;left:482px;top:477px" width="16" height="16" viewBox="0 0 16 16"><rect x="1" y="0.5" width="7" height="2" fill="#ffb000"/><rect x="0.5" y="2.5" width="15" height="11" fill="url(#gfold)" stroke="#8c8c8c"/></svg><div class="t" style="left:579px;width:73px;overflow:hidden;top:480px;font-size:11px;line-height:11px;color:#0000ff;font-family:'Liberation Sans';">Гл. 3</div><div class="t" style="left:654px;width:315px;overflow:hidden;top:480px;font-size:11px;line-height:11px;color:#0000ff;font-family:'Liberation Sans';">Глава  3. Объекты подсобного и обслуживающего назначения</div><div class="t" style="left:607px;width:400px;text-align:right;top:480px;font-size:11px;line-height:11px;color:#0000ff;font-family:'Liberation Sans';">3</div><div class="t" style="left:689px;width:400px;text-align:right;top:480px;font-size:11px;line-height:11px;color:#0000ff;font-family:'Liberation Sans';">21,75</div><div class="t" style="left:770px;width:400px;text-align:right;top:480px;font-size:11px;line-height:11px;color:#0000ff;font-family:'Liberation Sans';">0,00</div><div class="t" style="left:851px;width:400px;text-align:right;top:480px;font-size:11px;line-height:11px;color:#0000ff;font-family:'Liberation Sans';">0,00</div><div class="t" style="left:926px;width:400px;text-align:right;top:480px;font-size:11px;line-height:11px;color:#0000ff;font-family:'Liberation Sans';">0,00</div><div class="t" style="left:1027px;width:400px;text-align:right;top:480px;font-size:11px;line-height:11px;color:#0000ff;font-family:'Liberation Sans';">21,75</div><div class="t" style="left:1102px;width:400px;text-align:right;top:480px;font-size:11px;line-height:11px;color:#0000ff;font-family:'Liberation Sans';">0,00</div><div class="t" style="left:1230px;width:600px;text-align:center;top:480px;font-size:11px;line-height:11px;color:#0000ff;font-family:'Liberation Sans';">√</div><div style="left:364px;top:493px;width:11px;height:15px;background:#f0f0f0;box-shadow:inset 1px 1px #fff"></div><div style="left:363px;top:508px;width:13px;height:1px;background:#808080"></div><div style="left:376px;top:493px;width:1244px;height:15px;background:#e2fcfc"></div><div style="left:376px;top:508px;width:1245px;height:1px;background:#c0c0c0"></div><div style="left:410px;top:493px;width:1px;height:16px;background:#c0c0c0"></div><div style="left:469px;top:493px;width:1px;height:16px;background:#c0c0c0"></div><div style="left:511px;top:493px;width:1px;height:16px;background:#c0c0c0"></div><div style="left:576px;top:493px;width:1px;height:16px;background:#c0c0c0"></div><div style="left:652px;top:493px;width:1px;height:16px;background:#c0c0c0"></div><div style="left:969px;top:493px;width:1px;height:16px;background:#c0c0c0"></div><div style="left:1010px;top:493px;width:1px;height:16px;background:#c0c0c0"></div><div style="left:1091px;top:493px;width:1px;height:16px;background:#c0c0c0"></div><div style="left:1172px;top:493px;width:1px;height:16px;background:#c0c0c0"></div><div style="left:1253px;top:493px;width:1px;height:16px;background:#c0c0c0"></div><div style="left:1328px;top:493px;width:1px;height:16px;background:#c0c0c0"></div><div style="left:1429px;top:493px;width:1px;height:16px;background:#c0c0c0"></div><div style="left:1504px;top:493px;width:1px;height:16px;background:#c0c0c0"></div><div style="left:1555px;top:493px;width:1px;height:16px;background:#c0c0c0"></div><div style="left:1620px;top:493px;width:1px;height:16px;background:#c0c0c0"></div><div class="t" style="left:7px;width:400px;text-align:right;top:496px;font-size:11px;line-height:11px;color:#000000;font-family:'Liberation Sans';">23</div><svg style="position:absolute;left:435px;top:495px" width="11" height="11" viewBox="0 0 11 11"><rect x="0.5" y="0.5" width="9" height="9" rx="0.8" fill="#f8f8f8" stroke="#8a8a8a"/><rect x="2" y="2" width="6" height="6" fill="#ececec"/><path d="M3 5 L4.3 7.3 L7.6 2.3" fill="none" stroke="#3a55a0" stroke-width="1.4"/></svg><svg style="position:absolute;left:482px;top:492px" width="16" height="16" viewBox="0 0 16 16"><path d="M0.5 9 L7 2 L15.5 4 L15.5 9 L9 15.5 L0.5 13 Z" fill="#e8e8e8" stroke="#c0c0c0" stroke-width="0.8"/><path d="M0.5 9 L7 1 L15.5 3 L9 11 Z" fill="url(#gbook)"/><path d="M0.5 9 L9 11 L9 13 L0.5 11 Z" fill="#2a8050"/><path d="M7 4 L12 5" stroke="#fff" stroke-width="1.3"/></svg><div class="t" style="left:513px;width:63px;overflow:hidden;top:496px;font-size:11px;line-height:11px;color:#000000;font-family:'Liberation Sans';">ЛС-03-01</div><div class="t" style="left:654px;width:315px;overflow:hidden;top:496px;font-size:11px;line-height:11px;color:#000000;font-family:'Liberation Sans';">Объекты подсобного назначения</div><div class="t" style="left:689px;width:400px;text-align:right;top:496px;font-size:11px;line-height:11px;color:#000000;font-family:'Liberation Sans';">21,75</div><div class="t" style="left:770px;width:400px;text-align:right;top:496px;font-size:11px;line-height:11px;color:#000000;font-family:'Liberation Sans';">0,00</div><div class="t" style="left:851px;width:400px;text-align:right;top:496px;font-size:11px;line-height:11px;color:#000000;font-family:'Liberation Sans';">0,00</div><div class="t" style="left:926px;width:400px;text-align:right;top:496px;font-size:11px;line-height:11px;color:#000000;font-family:'Liberation Sans';">0,00</div><div class="t" style="left:1027px;width:400px;text-align:right;top:496px;font-size:11px;line-height:11px;color:#000000;font-family:'Liberation Sans';">21,75</div><div class="t" style="left:1102px;width:400px;text-align:right;top:496px;font-size:11px;line-height:11px;color:#000000;font-family:'Liberation Sans';">0,00</div><div class="t" style="left:1230px;width:600px;text-align:center;top:496px;font-size:11px;line-height:11px;color:#000000;font-family:'Liberation Sans';">√</div><div class="t" style="left:1557px;width:63px;overflow:hidden;top:496px;font-size:11px;line-height:11px;color:#000;font-family:'Liberation Sans';">НПР</div><div style="left:364px;top:509px;width:11px;height:15px;background:#f0f0f0;box-shadow:inset 1px 1px #fff"></div><div style="left:363px;top:524px;width:13px;height:1px;background:#808080"></div><div style="left:376px;top:509px;width:1244px;height:15px;background:#dfdffe"></div><div style="left:376px;top:524px;width:1245px;height:1px;background:#c0c0c0"></div><div style="left:410px;top:509px;width:1px;height:16px;background:#c0c0c0"></div><div style="left:469px;top:509px;width:1px;height:16px;background:#c0c0c0"></div><div style="left:511px;top:509px;width:1px;height:16px;background:#c0c0c0"></div><div style="left:576px;top:509px;width:1px;height:16px;background:#c0c0c0"></div><div style="left:652px;top:509px;width:1px;height:16px;background:#c0c0c0"></div><div style="left:969px;top:509px;width:1px;height:16px;background:#c0c0c0"></div><div style="left:1010px;top:509px;width:1px;height:16px;background:#c0c0c0"></div><div style="left:1091px;top:509px;width:1px;height:16px;background:#c0c0c0"></div><div style="left:1172px;top:509px;width:1px;height:16px;background:#c0c0c0"></div><div style="left:1253px;top:509px;width:1px;height:16px;background:#c0c0c0"></div><div style="left:1328px;top:509px;width:1px;height:16px;background:#c0c0c0"></div><div style="left:1429px;top:509px;width:1px;height:16px;background:#c0c0c0"></div><div style="left:1504px;top:509px;width:1px;height:16px;background:#c0c0c0"></div><div style="left:1555px;top:509px;width:1px;height:16px;background:#c0c0c0"></div><div style="left:1620px;top:509px;width:1px;height:16px;background:#c0c0c0"></div><div class="t" style="left:7px;width:400px;text-align:right;top:512px;font-size:11px;line-height:11px;color:#0000ff;font-family:'Liberation Sans';">24</div><svg style="position:absolute;left:482px;top:509px" width="16" height="16" viewBox="0 0 16 16"><rect x="1" y="0.5" width="7" height="2" fill="#ffb000"/><rect x="0.5" y="2.5" width="15" height="11" fill="url(#gfold)" stroke="#8c8c8c"/></svg><div class="t" style="left:579px;width:73px;overflow:hidden;top:512px;font-size:11px;line-height:11px;color:#0000ff;font-family:'Liberation Sans';">Гл. 4</div><div class="t" style="left:654px;width:315px;overflow:hidden;top:512px;font-size:11px;line-height:11px;color:#0000ff;font-family:'Liberation Sans';">Глава  4. Объекты энергетического хозяйства.</div><div class="t" style="left:607px;width:400px;text-align:right;top:512px;font-size:11px;line-height:11px;color:#0000ff;font-family:'Liberation Sans';">4</div><div class="t" style="left:689px;width:400px;text-align:right;top:512px;font-size:11px;line-height:11px;color:#0000ff;font-family:'Liberation Sans';">0,00</div><div class="t" style="left:770px;width:400px;text-align:right;top:512px;font-size:11px;line-height:11px;color:#0000ff;font-family:'Liberation Sans';">0,00</div><div class="t" style="left:851px;width:400px;text-align:right;top:512px;font-size:11px;line-height:11px;color:#0000ff;font-family:'Liberation Sans';">0,00</div><div class="t" style="left:926px;width:400px;text-align:right;top:512px;font-size:11px;line-height:11px;color:#0000ff;font-family:'Liberation Sans';">0,00</div><div class="t" style="left:1027px;width:400px;text-align:right;top:512px;font-size:11px;line-height:11px;color:#0000ff;font-family:'Liberation Sans';">0,00</div><div class="t" style="left:1102px;width:400px;text-align:right;top:512px;font-size:11px;line-height:11px;color:#0000ff;font-family:'Liberation Sans';">0,00</div><div class="t" style="left:1230px;width:600px;text-align:center;top:512px;font-size:11px;line-height:11px;color:#0000ff;font-family:'Liberation Sans';">√</div><div style="left:364px;top:525px;width:11px;height:15px;background:#f0f0f0;box-shadow:inset 1px 1px #fff"></div><div style="left:363px;top:540px;width:13px;height:1px;background:#808080"></div><div style="left:376px;top:525px;width:1244px;height:15px;background:#dfdffe"></div><div style="left:376px;top:540px;width:1245px;height:1px;background:#c0c0c0"></div><div style="left:410px;top:525px;width:1px;height:16px;background:#c0c0c0"></div><div style="left:469px;top:525px;width:1px;height:16px;background:#c0c0c0"></div><div style="left:511px;top:525px;width:1px;height:16px;background:#c0c0c0"></div><div style="left:576px;top:525px;width:1px;height:16px;background:#c0c0c0"></div><div style="left:652px;top:525px;width:1px;height:16px;background:#c0c0c0"></div><div style="left:969px;top:525px;width:1px;height:16px;background:#c0c0c0"></div><div style="left:1010px;top:525px;width:1px;height:16px;background:#c0c0c0"></div><div style="left:1091px;top:525px;width:1px;height:16px;background:#c0c0c0"></div><div style="left:1172px;top:525px;width:1px;height:16px;background:#c0c0c0"></div><div style="left:1253px;top:525px;width:1px;height:16px;background:#c0c0c0"></div><div style="left:1328px;top:525px;width:1px;height:16px;background:#c0c0c0"></div><div style="left:1429px;top:525px;width:1px;height:16px;background:#c0c0c0"></div><div style="left:1504px;top:525px;width:1px;height:16px;background:#c0c0c0"></div><div style="left:1555px;top:525px;width:1px;height:16px;background:#c0c0c0"></div><div style="left:1620px;top:525px;width:1px;height:16px;background:#c0c0c0"></div><div class="t" style="left:7px;width:400px;text-align:right;top:528px;font-size:11px;line-height:11px;color:#0000ff;font-family:'Liberation Sans';">25</div><svg style="position:absolute;left:482px;top:525px" width="16" height="16" viewBox="0 0 16 16"><rect x="1" y="0.5" width="7" height="2" fill="#ffb000"/><rect x="0.5" y="2.5" width="15" height="11" fill="url(#gfold)" stroke="#8c8c8c"/></svg><div class="t" style="left:579px;width:73px;overflow:hidden;top:528px;font-size:11px;line-height:11px;color:#0000ff;font-family:'Liberation Sans';">Гл. 5</div><div class="t" style="left:654px;width:315px;overflow:hidden;top:528px;font-size:11px;line-height:11px;color:#0000ff;font-family:'Liberation Sans';">Глава  5. Объекты транспортного хозяйства и связи.</div><div class="t" style="left:607px;width:400px;text-align:right;top:528px;font-size:11px;line-height:11px;color:#0000ff;font-family:'Liberation Sans';">5</div><div class="t" style="left:689px;width:400px;text-align:right;top:528px;font-size:11px;line-height:11px;color:#0000ff;font-family:'Liberation Sans';">0,00</div><div class="t" style="left:770px;width:400px;text-align:right;top:528px;font-size:11px;line-height:11px;color:#0000ff;font-family:'Liberation Sans';">0,00</div><div class="t" style="left:851px;width:400px;text-align:right;top:528px;font-size:11px;line-height:11px;color:#0000ff;font-family:'Liberation Sans';">0,00</div><div class="t" style="left:926px;width:400px;text-align:right;top:528px;font-size:11px;line-height:11px;color:#0000ff;font-family:'Liberation Sans';">0,00</div><div class="t" style="left:1027px;width:400px;text-align:right;top:528px;font-size:11px;line-height:11px;color:#0000ff;font-family:'Liberation Sans';">0,00</div><div class="t" style="left:1102px;width:400px;text-align:right;top:528px;font-size:11px;line-height:11px;color:#0000ff;font-family:'Liberation Sans';">0,00</div><div class="t" style="left:1230px;width:600px;text-align:center;top:528px;font-size:11px;line-height:11px;color:#0000ff;font-family:'Liberation Sans';">√</div><div style="left:364px;top:541px;width:11px;height:15px;background:#f0f0f0;box-shadow:inset 1px 1px #fff"></div><div style="left:363px;top:556px;width:13px;height:1px;background:#808080"></div><div style="left:376px;top:541px;width:1244px;height:15px;background:#dfdffe"></div><div style="left:376px;top:556px;width:1245px;height:1px;background:#c0c0c0"></div><div style="left:410px;top:541px;width:1px;height:16px;background:#c0c0c0"></div><div style="left:469px;top:541px;width:1px;height:16px;background:#c0c0c0"></div><div style="left:511px;top:541px;width:1px;height:16px;background:#c0c0c0"></div><div style="left:576px;top:541px;width:1px;height:16px;background:#c0c0c0"></div><div style="left:652px;top:541px;width:1px;height:16px;background:#c0c0c0"></div><div style="left:969px;top:541px;width:1px;height:16px;background:#c0c0c0"></div><div style="left:1010px;top:541px;width:1px;height:16px;background:#c0c0c0"></div><div style="left:1091px;top:541px;width:1px;height:16px;background:#c0c0c0"></div><div style="left:1172px;top:541px;width:1px;height:16px;background:#c0c0c0"></div><div style="left:1253px;top:541px;width:1px;height:16px;background:#c0c0c0"></div><div style="left:1328px;top:541px;width:1px;height:16px;background:#c0c0c0"></div><div style="left:1429px;top:541px;width:1px;height:16px;background:#c0c0c0"></div><div style="left:1504px;top:541px;width:1px;height:16px;background:#c0c0c0"></div><div style="left:1555px;top:541px;width:1px;height:16px;background:#c0c0c0"></div><div style="left:1620px;top:541px;width:1px;height:16px;background:#c0c0c0"></div><div class="t" style="left:7px;width:400px;text-align:right;top:544px;font-size:11px;line-height:11px;color:#0000ff;font-family:'Liberation Sans';">26</div><svg style="position:absolute;left:482px;top:541px" width="16" height="16" viewBox="0 0 16 16"><rect x="1" y="0.5" width="7" height="2" fill="#ffb000"/><rect x="0.5" y="2.5" width="15" height="11" fill="url(#gfold)" stroke="#8c8c8c"/></svg><div class="t" style="left:579px;width:73px;overflow:hidden;top:544px;font-size:11px;line-height:11px;color:#0000ff;font-family:'Liberation Sans';">Гл. 6</div><div class="t" style="left:654px;width:315px;overflow:hidden;top:544px;font-size:11px;line-height:11px;color:#0000ff;font-family:'Liberation Sans';">Глава  6. Наружные сети и сооружения водоснабжения, водоотведения</div><div class="t" style="left:607px;width:400px;text-align:right;top:544px;font-size:11px;line-height:11px;color:#0000ff;font-family:'Liberation Sans';">6</div><div class="t" style="left:689px;width:400px;text-align:right;top:544px;font-size:11px;line-height:11px;color:#0000ff;font-family:'Liberation Sans';">0,00</div><div class="t" style="left:770px;width:400px;text-align:right;top:544px;font-size:11px;line-height:11px;color:#0000ff;font-family:'Liberation Sans';">0,00</div><div class="t" style="left:851px;width:400px;text-align:right;top:544px;font-size:11px;line-height:11px;color:#0000ff;font-family:'Liberation Sans';">0,00</div><div class="t" style="left:926px;width:400px;text-align:right;top:544px;font-size:11px;line-height:11px;color:#0000ff;font-family:'Liberation Sans';">0,00</div><div class="t" style="left:1027px;width:400px;text-align:right;top:544px;font-size:11px;line-height:11px;color:#0000ff;font-family:'Liberation Sans';">0,00</div><div class="t" style="left:1102px;width:400px;text-align:right;top:544px;font-size:11px;line-height:11px;color:#0000ff;font-family:'Liberation Sans';">0,00</div><div class="t" style="left:1230px;width:600px;text-align:center;top:544px;font-size:11px;line-height:11px;color:#0000ff;font-family:'Liberation Sans';">√</div><div style="left:364px;top:557px;width:11px;height:15px;background:#f0f0f0;box-shadow:inset 1px 1px #fff"></div><div style="left:363px;top:572px;width:13px;height:1px;background:#808080"></div><div style="left:376px;top:557px;width:1244px;height:15px;background:#dfdffe"></div><div style="left:376px;top:572px;width:1245px;height:1px;background:#c0c0c0"></div><div style="left:410px;top:557px;width:1px;height:16px;background:#c0c0c0"></div><div style="left:469px;top:557px;width:1px;height:16px;background:#c0c0c0"></div><div style="left:511px;top:557px;width:1px;height:16px;background:#c0c0c0"></div><div style="left:576px;top:557px;width:1px;height:16px;background:#c0c0c0"></div><div style="left:652px;top:557px;width:1px;height:16px;background:#c0c0c0"></div><div style="left:969px;top:557px;width:1px;height:16px;background:#c0c0c0"></div><div style="left:1010px;top:557px;width:1px;height:16px;background:#c0c0c0"></div><div style="left:1091px;top:557px;width:1px;height:16px;background:#c0c0c0"></div><div style="left:1172px;top:557px;width:1px;height:16px;background:#c0c0c0"></div><div style="left:1253px;top:557px;width:1px;height:16px;background:#c0c0c0"></div><div style="left:1328px;top:557px;width:1px;height:16px;background:#c0c0c0"></div><div style="left:1429px;top:557px;width:1px;height:16px;background:#c0c0c0"></div><div style="left:1504px;top:557px;width:1px;height:16px;background:#c0c0c0"></div><div style="left:1555px;top:557px;width:1px;height:16px;background:#c0c0c0"></div><div style="left:1620px;top:557px;width:1px;height:16px;background:#c0c0c0"></div><div class="t" style="left:7px;width:400px;text-align:right;top:560px;font-size:11px;line-height:11px;color:#0000ff;font-family:'Liberation Sans';">27</div><svg style="position:absolute;left:482px;top:557px" width="16" height="16" viewBox="0 0 16 16"><rect x="1" y="0.5" width="7" height="2" fill="#ffb000"/><rect x="0.5" y="2.5" width="15" height="11" fill="url(#gfold)" stroke="#8c8c8c"/></svg><div class="t" style="left:579px;width:73px;overflow:hidden;top:560px;font-size:11px;line-height:11px;color:#0000ff;font-family:'Liberation Sans';">Гл. 7</div><div class="t" style="left:654px;width:315px;overflow:hidden;top:560px;font-size:11px;line-height:11px;color:#0000ff;font-family:'Liberation Sans';">Глава  7. Благоустройство и озеленение территории.</div><div class="t" style="left:607px;width:400px;text-align:right;top:560px;font-size:11px;line-height:11px;color:#0000ff;font-family:'Liberation Sans';">7</div><div class="t" style="left:689px;width:400px;text-align:right;top:560px;font-size:11px;line-height:11px;color:#0000ff;font-family:'Liberation Sans';">0,00</div><div class="t" style="left:770px;width:400px;text-align:right;top:560px;font-size:11px;line-height:11px;color:#0000ff;font-family:'Liberation Sans';">0,00</div><div class="t" style="left:851px;width:400px;text-align:right;top:560px;font-size:11px;line-height:11px;color:#0000ff;font-family:'Liberation Sans';">0,00</div><div class="t" style="left:926px;width:400px;text-align:right;top:560px;font-size:11px;line-height:11px;color:#0000ff;font-family:'Liberation Sans';">0,00</div><div class="t" style="left:1027px;width:400px;text-align:right;top:560px;font-size:11px;line-height:11px;color:#0000ff;font-family:'Liberation Sans';">0,00</div><div class="t" style="left:1102px;width:400px;text-align:right;top:560px;font-size:11px;line-height:11px;color:#0000ff;font-family:'Liberation Sans';">0,00</div><div class="t" style="left:1230px;width:600px;text-align:center;top:560px;font-size:11px;line-height:11px;color:#0000ff;font-family:'Liberation Sans';">√</div><div style="left:364px;top:573px;width:11px;height:15px;background:#f0f0f0;box-shadow:inset 1px 1px #fff"></div><div style="left:363px;top:588px;width:13px;height:1px;background:#808080"></div><div style="left:376px;top:573px;width:1244px;height:15px;background:#dfdffe"></div><div style="left:376px;top:588px;width:1245px;height:1px;background:#c0c0c0"></div><div style="left:410px;top:573px;width:1px;height:16px;background:#c0c0c0"></div><div style="left:469px;top:573px;width:1px;height:16px;background:#c0c0c0"></div><div style="left:511px;top:573px;width:1px;height:16px;background:#c0c0c0"></div><div style="left:576px;top:573px;width:1px;height:16px;background:#c0c0c0"></div><div style="left:652px;top:573px;width:1px;height:16px;background:#c0c0c0"></div><div style="left:969px;top:573px;width:1px;height:16px;background:#c0c0c0"></div><div style="left:1010px;top:573px;width:1px;height:16px;background:#c0c0c0"></div><div style="left:1091px;top:573px;width:1px;height:16px;background:#c0c0c0"></div><div style="left:1172px;top:573px;width:1px;height:16px;background:#c0c0c0"></div><div style="left:1253px;top:573px;width:1px;height:16px;background:#c0c0c0"></div><div style="left:1328px;top:573px;width:1px;height:16px;background:#c0c0c0"></div><div style="left:1429px;top:573px;width:1px;height:16px;background:#c0c0c0"></div><div style="left:1504px;top:573px;width:1px;height:16px;background:#c0c0c0"></div><div style="left:1555px;top:573px;width:1px;height:16px;background:#c0c0c0"></div><div style="left:1620px;top:573px;width:1px;height:16px;background:#c0c0c0"></div><div class="t" style="left:7px;width:400px;text-align:right;top:576px;font-size:11px;line-height:11px;color:#0000ff;font-family:'Liberation Sans';">28</div><svg style="position:absolute;left:482px;top:573px" width="16" height="16" viewBox="0 0 16 16"><rect x="1" y="0.5" width="7" height="2" fill="#ffb000"/><rect x="0.5" y="2.5" width="15" height="11" fill="url(#gfold)" stroke="#8c8c8c"/><rect x="4.5" y="4.5" width="7" height="7" fill="#fff" stroke="#806020"/><path d="M6 6h4M6 6l2 2l-2 2h4" stroke="#404040" fill="none" stroke-width="0.9"/></svg><div class="t" style="left:579px;width:73px;overflow:hidden;top:576px;font-size:11px;line-height:11px;color:#0000ff;font-family:'Liberation Sans';">Ит 1-7</div><div class="t" style="left:654px;width:315px;overflow:hidden;top:576px;font-size:11px;line-height:11px;color:#0000ff;font-family:'Liberation Sans';">Итого по главам 1 - 7</div><div class="t" style="left:689px;width:400px;text-align:right;top:576px;font-size:11px;line-height:11px;color:#0000ff;font-family:'Liberation Sans';">1 490,84</div><div class="t" style="left:770px;width:400px;text-align:right;top:576px;font-size:11px;line-height:11px;color:#0000ff;font-family:'Liberation Sans';">0,00</div><div class="t" style="left:851px;width:400px;text-align:right;top:576px;font-size:11px;line-height:11px;color:#0000ff;font-family:'Liberation Sans';">0,00</div><div class="t" style="left:926px;width:400px;text-align:right;top:576px;font-size:11px;line-height:11px;color:#0000ff;font-family:'Liberation Sans';">0,00</div><div class="t" style="left:1027px;width:400px;text-align:right;top:576px;font-size:11px;line-height:11px;color:#0000ff;font-family:'Liberation Sans';">1 490,84</div><div class="t" style="left:1102px;width:400px;text-align:right;top:576px;font-size:11px;line-height:11px;color:#0000ff;font-family:'Liberation Sans';">0,00</div><div class="t" style="left:1230px;width:600px;text-align:center;top:576px;font-size:11px;line-height:11px;color:#0000ff;font-family:'Liberation Sans';">√</div><div style="left:364px;top:589px;width:11px;height:15px;background:#f0f0f0;box-shadow:inset 1px 1px #fff"></div><div style="left:363px;top:604px;width:13px;height:1px;background:#808080"></div><div style="left:376px;top:589px;width:1244px;height:15px;background:#ffffff"></div><div style="left:376px;top:604px;width:1245px;height:1px;background:#c0c0c0"></div><div style="left:410px;top:589px;width:1px;height:16px;background:#c0c0c0"></div><div style="left:469px;top:589px;width:1px;height:16px;background:#c0c0c0"></div><div style="left:511px;top:589px;width:1px;height:16px;background:#c0c0c0"></div><div style="left:576px;top:589px;width:1px;height:16px;background:#c0c0c0"></div><div style="left:652px;top:589px;width:1px;height:16px;background:#c0c0c0"></div><div style="left:969px;top:589px;width:1px;height:16px;background:#c0c0c0"></div><div style="left:1010px;top:589px;width:1px;height:16px;background:#c0c0c0"></div><div style="left:1091px;top:589px;width:1px;height:16px;background:#c0c0c0"></div><div style="left:1172px;top:589px;width:1px;height:16px;background:#c0c0c0"></div><div style="left:1253px;top:589px;width:1px;height:16px;background:#c0c0c0"></div><div style="left:1328px;top:589px;width:1px;height:16px;background:#c0c0c0"></div><div style="left:1429px;top:589px;width:1px;height:16px;background:#c0c0c0"></div><div style="left:1504px;top:589px;width:1px;height:16px;background:#c0c0c0"></div><div style="left:1555px;top:589px;width:1px;height:16px;background:#c0c0c0"></div><div style="left:1620px;top:589px;width:1px;height:16px;background:#c0c0c0"></div><div class="t" style="left:7px;width:400px;text-align:right;top:592px;font-size:11px;line-height:11px;color:#000000;font-family:'Liberation Sans';">29</div><svg style="position:absolute;left:435px;top:591px" width="11" height="11" viewBox="0 0 11 11"><rect x="0.5" y="0.5" width="9" height="9" rx="0.8" fill="#f8f8f8" stroke="#8a8a8a"/><rect x="2" y="2" width="6" height="6" fill="#ececec"/><path d="M3 5 L4.3 7.3 L7.6 2.3" fill="none" stroke="#3a55a0" stroke-width="1.4"/></svg><svg style="position:absolute;left:483px;top:589px" width="16" height="16" viewBox="0 0 16 16"><path d="M0.5 2.5 L2.5 0.5 H11.5 V14.5 H0.5 Z" fill="url(#gdoc)" stroke="#404040"/><path d="M0.5 2.5 H2.5 V0.5" fill="#d8f8ff" stroke="#404040"/><path d="M2.5 5.5h6.5M2.5 7.5h6.5M2.5 9.5h6.5M2.5 11.5h6.5" stroke="#5a6a7a" stroke-width="1"/></svg><div class="t" style="left:579px;width:73px;overflow:hidden;top:592px;font-size:11px;line-height:11px;color:#000000;font-family:'Liberation Sans';">1-7</div><div class="t" style="left:654px;width:315px;overflow:hidden;top:592px;font-size:11px;line-height:11px;color:#000000;font-family:'Liberation Sans';">Итого по главам 1 - 7</div><div class="t" style="left:689px;width:400px;text-align:right;top:592px;font-size:11px;line-height:11px;color:#000000;font-family:'Liberation Sans';">1 490,84</div><div class="t" style="left:770px;width:400px;text-align:right;top:592px;font-size:11px;line-height:11px;color:#000000;font-family:'Liberation Sans';">0,00</div><div class="t" style="left:851px;width:400px;text-align:right;top:592px;font-size:11px;line-height:11px;color:#000000;font-family:'Liberation Sans';">0,00</div><div class="t" style="left:926px;width:400px;text-align:right;top:592px;font-size:11px;line-height:11px;color:#000000;font-family:'Liberation Sans';">0,00</div><div class="t" style="left:1027px;width:400px;text-align:right;top:592px;font-size:11px;line-height:11px;color:#000000;font-family:'Liberation Sans';">1 490,84</div><div class="t" style="left:1102px;width:400px;text-align:right;top:592px;font-size:11px;line-height:11px;color:#000000;font-family:'Liberation Sans';">0,00</div><div style="left:364px;top:605px;width:11px;height:15px;background:#f0f0f0;box-shadow:inset 1px 1px #fff"></div><div style="left:363px;top:620px;width:13px;height:1px;background:#808080"></div><div style="left:376px;top:605px;width:1244px;height:15px;background:#dfdffe"></div><div style="left:376px;top:620px;width:1245px;height:1px;background:#c0c0c0"></div><div style="left:410px;top:605px;width:1px;height:16px;background:#c0c0c0"></div><div style="left:469px;top:605px;width:1px;height:16px;background:#c0c0c0"></div><div style="left:511px;top:605px;width:1px;height:16px;background:#c0c0c0"></div><div style="left:576px;top:605px;width:1px;height:16px;background:#c0c0c0"></div><div style="left:652px;top:605px;width:1px;height:16px;background:#c0c0c0"></div><div style="left:969px;top:605px;width:1px;height:16px;background:#c0c0c0"></div><div style="left:1010px;top:605px;width:1px;height:16px;background:#c0c0c0"></div><div style="left:1091px;top:605px;width:1px;height:16px;background:#c0c0c0"></div><div style="left:1172px;top:605px;width:1px;height:16px;background:#c0c0c0"></div><div style="left:1253px;top:605px;width:1px;height:16px;background:#c0c0c0"></div><div style="left:1328px;top:605px;width:1px;height:16px;background:#c0c0c0"></div><div style="left:1429px;top:605px;width:1px;height:16px;background:#c0c0c0"></div><div style="left:1504px;top:605px;width:1px;height:16px;background:#c0c0c0"></div><div style="left:1555px;top:605px;width:1px;height:16px;background:#c0c0c0"></div><div style="left:1620px;top:605px;width:1px;height:16px;background:#c0c0c0"></div><div class="t" style="left:7px;width:400px;text-align:right;top:608px;font-size:11px;line-height:11px;color:#0000ff;font-family:'Liberation Sans';">30</div><svg style="position:absolute;left:482px;top:605px" width="16" height="16" viewBox="0 0 16 16"><rect x="1" y="0.5" width="7" height="2" fill="#ffb000"/><rect x="0.5" y="2.5" width="15" height="11" fill="url(#gfold)" stroke="#8c8c8c"/></svg><div class="t" style="left:579px;width:73px;overflow:hidden;top:608px;font-size:11px;line-height:11px;color:#0000ff;font-family:'Liberation Sans';">Гл. 8</div><div class="t" style="left:654px;width:315px;overflow:hidden;top:608px;font-size:11px;line-height:11px;color:#0000ff;font-family:'Liberation Sans';">Глава  8. Временные здания и сооружения.</div><div class="t" style="left:607px;width:400px;text-align:right;top:608px;font-size:11px;line-height:11px;color:#0000ff;font-family:'Liberation Sans';">8</div><div class="t" style="left:689px;width:400px;text-align:right;top:608px;font-size:11px;line-height:11px;color:#0000ff;font-family:'Liberation Sans';">22,36</div><div class="t" style="left:770px;width:400px;text-align:right;top:608px;font-size:11px;line-height:11px;color:#0000ff;font-family:'Liberation Sans';">0,00</div><div class="t" style="left:851px;width:400px;text-align:right;top:608px;font-size:11px;line-height:11px;color:#0000ff;font-family:'Liberation Sans';">0,00</div><div class="t" style="left:926px;width:400px;text-align:right;top:608px;font-size:11px;line-height:11px;color:#0000ff;font-family:'Liberation Sans';">0,00</div><div class="t" style="left:1027px;width:400px;text-align:right;top:608px;font-size:11px;line-height:11px;color:#0000ff;font-family:'Liberation Sans';">22,36</div><div class="t" style="left:1102px;width:400px;text-align:right;top:608px;font-size:11px;line-height:11px;color:#0000ff;font-family:'Liberation Sans';">0,00</div><div class="t" style="left:1230px;width:600px;text-align:center;top:608px;font-size:11px;line-height:11px;color:#0000ff;font-family:'Liberation Sans';">√</div><div style="left:364px;top:621px;width:11px;height:15px;background:#f0f0f0;box-shadow:inset 1px 1px #fff"></div><div style="left:363px;top:636px;width:13px;height:1px;background:#808080"></div><div style="left:376px;top:621px;width:1244px;height:15px;background:#ffffff"></div><div style="left:376px;top:636px;width:1245px;height:1px;background:#c0c0c0"></div><div style="left:410px;top:621px;width:1px;height:16px;background:#c0c0c0"></div><div style="left:469px;top:621px;width:1px;height:16px;background:#c0c0c0"></div><div style="left:511px;top:621px;width:1px;height:16px;background:#c0c0c0"></div><div style="left:576px;top:621px;width:1px;height:16px;background:#c0c0c0"></div><div style="left:652px;top:621px;width:1px;height:16px;background:#c0c0c0"></div><div style="left:969px;top:621px;width:1px;height:16px;background:#c0c0c0"></div><div style="left:1010px;top:621px;width:1px;height:16px;background:#c0c0c0"></div><div style="left:1091px;top:621px;width:1px;height:16px;background:#c0c0c0"></div><div style="left:1172px;top:621px;width:1px;height:16px;background:#c0c0c0"></div><div style="left:1253px;top:621px;width:1px;height:16px;background:#c0c0c0"></div><div style="left:1328px;top:621px;width:1px;height:16px;background:#c0c0c0"></div><div style="left:1429px;top:621px;width:1px;height:16px;background:#c0c0c0"></div><div style="left:1504px;top:621px;width:1px;height:16px;background:#c0c0c0"></div><div style="left:1555px;top:621px;width:1px;height:16px;background:#c0c0c0"></div><div style="left:1620px;top:621px;width:1px;height:16px;background:#c0c0c0"></div><div class="t" style="left:7px;width:400px;text-align:right;top:624px;font-size:11px;line-height:11px;color:#000000;font-family:'Liberation Sans';">31</div><svg style="position:absolute;left:435px;top:623px" width="11" height="11" viewBox="0 0 11 11"><rect x="0.5" y="0.5" width="9" height="9" rx="0.8" fill="#f8f8f8" stroke="#8a8a8a"/><rect x="2" y="2" width="6" height="6" fill="#ececec"/><path d="M3 5 L4.3 7.3 L7.6 2.3" fill="none" stroke="#3a55a0" stroke-width="1.4"/></svg><svg style="position:absolute;left:483px;top:621px" width="16" height="16" viewBox="0 0 16 16"><path d="M0.5 2.5 L2.5 0.5 H11.5 V14.5 H0.5 Z" fill="url(#gdoc)" stroke="#404040"/><path d="M0.5 2.5 H2.5 V0.5" fill="#d8f8ff" stroke="#404040"/><path d="M2.5 5.5h6.5M2.5 7.5h6.5M2.5 9.5h6.5M2.5 11.5h6.5" stroke="#5a6a7a" stroke-width="1"/></svg><div class="t" style="left:513px;width:63px;overflow:hidden;top:624px;font-size:11px;line-height:11px;color:#000000;font-family:'Liberation Sans';">ГСН 81-05-01</div><div class="t" style="left:579px;width:73px;overflow:hidden;top:624px;font-size:11px;line-height:11px;color:#000000;font-family:'Liberation Sans';">Итог 1</div><div class="t" style="left:654px;width:315px;overflow:hidden;top:624px;font-size:11px;line-height:11px;color:#000000;font-family:'Liberation Sans';">Затраты на временные здания и сооружения; 1,5% от СМР</div><div class="t" style="left:689px;width:400px;text-align:right;top:624px;font-size:11px;line-height:11px;color:#000000;font-family:'Liberation Sans';">22,36</div><div class="t" style="left:770px;width:400px;text-align:right;top:624px;font-size:11px;line-height:11px;color:#000000;font-family:'Liberation Sans';">0,00</div><div class="t" style="left:851px;width:400px;text-align:right;top:624px;font-size:11px;line-height:11px;color:#000000;font-family:'Liberation Sans';">0,00</div><div class="t" style="left:926px;width:400px;text-align:right;top:624px;font-size:11px;line-height:11px;color:#000000;font-family:'Liberation Sans';">0,00</div><div class="t" style="left:1027px;width:400px;text-align:right;top:624px;font-size:11px;line-height:11px;color:#000000;font-family:'Liberation Sans';">22,36</div><div class="t" style="left:1102px;width:400px;text-align:right;top:624px;font-size:11px;line-height:11px;color:#000000;font-family:'Liberation Sans';">0,00</div><div class="t" style="left:1230px;width:600px;text-align:center;top:624px;font-size:11px;line-height:11px;color:#ff0000;font-family:'Liberation Sans';">√</div><div style="left:364px;top:637px;width:11px;height:15px;background:#f0f0f0;box-shadow:inset 1px 1px #fff"></div><div style="left:363px;top:652px;width:13px;height:1px;background:#808080"></div><div style="left:376px;top:637px;width:1244px;height:15px;background:#ffffff"></div><div style="left:376px;top:652px;width:1245px;height:1px;background:#c0c0c0"></div><div style="left:410px;top:637px;width:1px;height:16px;background:#c0c0c0"></div><div style="left:469px;top:637px;width:1px;height:16px;background:#c0c0c0"></div><div style="left:511px;top:637px;width:1px;height:16px;background:#c0c0c0"></div><div style="left:576px;top:637px;width:1px;height:16px;background:#c0c0c0"></div><div style="left:652px;top:637px;width:1px;height:16px;background:#c0c0c0"></div><div style="left:969px;top:637px;width:1px;height:16px;background:#c0c0c0"></div><div style="left:1010px;top:637px;width:1px;height:16px;background:#c0c0c0"></div><div style="left:1091px;top:637px;width:1px;height:16px;background:#c0c0c0"></div><div style="left:1172px;top:637px;width:1px;height:16px;background:#c0c0c0"></div><div style="left:1253px;top:637px;width:1px;height:16px;background:#c0c0c0"></div><div style="left:1328px;top:637px;width:1px;height:16px;background:#c0c0c0"></div><div style="left:1429px;top:637px;width:1px;height:16px;background:#c0c0c0"></div><div style="left:1504px;top:637px;width:1px;height:16px;background:#c0c0c0"></div><div style="left:1555px;top:637px;width:1px;height:16px;background:#c0c0c0"></div><div style="left:1620px;top:637px;width:1px;height:16px;background:#c0c0c0"></div><div class="t" style="left:7px;width:400px;text-align:right;top:640px;font-size:11px;line-height:11px;color:#888888;font-family:'Liberation Sans';">32</div><svg style="position:absolute;left:435px;top:639px" width="11" height="11" viewBox="0 0 11 11"><rect x="0.5" y="0.5" width="9" height="9" rx="0.8" fill="#f8f8f8" stroke="#8a8a8a"/><rect x="2" y="2" width="6" height="6" fill="#ececec"/></svg><svg style="position:absolute;left:483px;top:637px" width="16" height="16" viewBox="0 0 16 16"><path d="M0.5 2.5 L2.5 0.5 H11.5 V14.5 H0.5 Z" fill="url(#gdoc)" stroke="#404040"/><path d="M0.5 2.5 H2.5 V0.5" fill="#d8f8ff" stroke="#404040"/><path d="M2.5 5.5h6.5M2.5 7.5h6.5M2.5 9.5h6.5M2.5 11.5h6.5" stroke="#5a6a7a" stroke-width="1"/></svg><div class="t" style="left:579px;width:73px;overflow:hidden;top:640px;font-size:11px;line-height:11px;color:#888888;font-family:'Liberation Sans';">Итог 2</div><div class="t" style="left:654px;width:315px;overflow:hidden;top:640px;font-size:11px;line-height:11px;color:#888888;font-family:'Liberation Sans';">Временные здания и сооружения.</div><div class="t" style="left:689px;width:400px;text-align:right;top:640px;font-size:11px;line-height:11px;color:#888888;font-family:'Liberation Sans';">0,00</div><div class="t" style="left:770px;width:400px;text-align:right;top:640px;font-size:11px;line-height:11px;color:#888888;font-family:'Liberation Sans';">0,00</div><div class="t" style="left:851px;width:400px;text-align:right;top:640px;font-size:11px;line-height:11px;color:#888888;font-family:'Liberation Sans';">0,00</div><div class="t" style="left:926px;width:400px;text-align:right;top:640px;font-size:11px;line-height:11px;color:#888888;font-family:'Liberation Sans';">0,00</div><div class="t" style="left:1027px;width:400px;text-align:right;top:640px;font-size:11px;line-height:11px;color:#888888;font-family:'Liberation Sans';">0,00</div><div class="t" style="left:1102px;width:400px;text-align:right;top:640px;font-size:11px;line-height:11px;color:#888888;font-family:'Liberation Sans';">0,00</div><div style="left:364px;top:653px;width:11px;height:15px;background:#f0f0f0;box-shadow:inset 1px 1px #fff"></div><div style="left:363px;top:668px;width:13px;height:1px;background:#808080"></div><div style="left:376px;top:653px;width:1244px;height:15px;background:#dfdffe"></div><div style="left:376px;top:668px;width:1245px;height:1px;background:#c0c0c0"></div><div style="left:410px;top:653px;width:1px;height:16px;background:#c0c0c0"></div><div style="left:469px;top:653px;width:1px;height:16px;background:#c0c0c0"></div><div style="left:511px;top:653px;width:1px;height:16px;background:#c0c0c0"></div><div style="left:576px;top:653px;width:1px;height:16px;background:#c0c0c0"></div><div style="left:652px;top:653px;width:1px;height:16px;background:#c0c0c0"></div><div style="left:969px;top:653px;width:1px;height:16px;background:#c0c0c0"></div><div style="left:1010px;top:653px;width:1px;height:16px;background:#c0c0c0"></div><div style="left:1091px;top:653px;width:1px;height:16px;background:#c0c0c0"></div><div style="left:1172px;top:653px;width:1px;height:16px;background:#c0c0c0"></div><div style="left:1253px;top:653px;width:1px;height:16px;background:#c0c0c0"></div><div style="left:1328px;top:653px;width:1px;height:16px;background:#c0c0c0"></div><div style="left:1429px;top:653px;width:1px;height:16px;background:#c0c0c0"></div><div style="left:1504px;top:653px;width:1px;height:16px;background:#c0c0c0"></div><div style="left:1555px;top:653px;width:1px;height:16px;background:#c0c0c0"></div><div style="left:1620px;top:653px;width:1px;height:16px;background:#c0c0c0"></div><div class="t" style="left:7px;width:400px;text-align:right;top:656px;font-size:11px;line-height:11px;color:#0000ff;font-family:'Liberation Sans';">33</div><svg style="position:absolute;left:482px;top:653px" width="16" height="16" viewBox="0 0 16 16"><rect x="1" y="0.5" width="7" height="2" fill="#ffb000"/><rect x="0.5" y="2.5" width="15" height="11" fill="url(#gfold)" stroke="#8c8c8c"/><rect x="4.5" y="4.5" width="7" height="7" fill="#fff" stroke="#806020"/><path d="M6 6h4M6 6l2 2l-2 2h4" stroke="#404040" fill="none" stroke-width="0.9"/></svg><div class="t" style="left:579px;width:73px;overflow:hidden;top:656px;font-size:11px;line-height:11px;color:#0000ff;font-family:'Liberation Sans';">Ит 1-8</div><div class="t" style="left:654px;width:315px;overflow:hidden;top:656px;font-size:11px;line-height:11px;color:#0000ff;font-family:'Liberation Sans';">Итого по главам 1 - 8</div><div class="t" style="left:689px;width:400px;text-align:right;top:656px;font-size:11px;line-height:11px;color:#0000ff;font-family:'Liberation Sans';">1 513,20</div><div class="t" style="left:770px;width:400px;text-align:right;top:656px;font-size:11px;line-height:11px;color:#0000ff;font-family:'Liberation Sans';">0,00</div><div class="t" style="left:851px;width:400px;text-align:right;top:656px;font-size:11px;line-height:11px;color:#0000ff;font-family:'Liberation Sans';">0,00</div><div class="t" style="left:926px;width:400px;text-align:right;top:656px;font-size:11px;line-height:11px;color:#0000ff;font-family:'Liberation Sans';">0,00</div><div class="t" style="left:1027px;width:400px;text-align:right;top:656px;font-size:11px;line-height:11px;color:#0000ff;font-family:'Liberation Sans';">1 513,20</div><div class="t" style="left:1102px;width:400px;text-align:right;top:656px;font-size:11px;line-height:11px;color:#0000ff;font-family:'Liberation Sans';">0,00</div><div class="t" style="left:1230px;width:600px;text-align:center;top:656px;font-size:11px;line-height:11px;color:#0000ff;font-family:'Liberation Sans';">√</div><div style="left:364px;top:669px;width:11px;height:15px;background:#f0f0f0;box-shadow:inset 1px 1px #fff"></div><div style="left:363px;top:684px;width:13px;height:1px;background:#808080"></div><div style="left:376px;top:669px;width:1244px;height:15px;background:#ffffff"></div><div style="left:376px;top:684px;width:1245px;height:1px;background:#c0c0c0"></div><div style="left:410px;top:669px;width:1px;height:16px;background:#c0c0c0"></div><div style="left:469px;top:669px;width:1px;height:16px;background:#c0c0c0"></div><div style="left:511px;top:669px;width:1px;height:16px;background:#c0c0c0"></div><div style="left:576px;top:669px;width:1px;height:16px;background:#c0c0c0"></div><div style="left:652px;top:669px;width:1px;height:16px;background:#c0c0c0"></div><div style="left:969px;top:669px;width:1px;height:16px;background:#c0c0c0"></div><div style="left:1010px;top:669px;width:1px;height:16px;background:#c0c0c0"></div><div style="left:1091px;top:669px;width:1px;height:16px;background:#c0c0c0"></div><div style="left:1172px;top:669px;width:1px;height:16px;background:#c0c0c0"></div><div style="left:1253px;top:669px;width:1px;height:16px;background:#c0c0c0"></div><div style="left:1328px;top:669px;width:1px;height:16px;background:#c0c0c0"></div><div style="left:1429px;top:669px;width:1px;height:16px;background:#c0c0c0"></div><div style="left:1504px;top:669px;width:1px;height:16px;background:#c0c0c0"></div><div style="left:1555px;top:669px;width:1px;height:16px;background:#c0c0c0"></div><div style="left:1620px;top:669px;width:1px;height:16px;background:#c0c0c0"></div><div class="t" style="left:7px;width:400px;text-align:right;top:672px;font-size:11px;line-height:11px;color:#000000;font-family:'Liberation Sans';">34</div><svg style="position:absolute;left:435px;top:671px" width="11" height="11" viewBox="0 0 11 11"><rect x="0.5" y="0.5" width="9" height="9" rx="0.8" fill="#f8f8f8" stroke="#8a8a8a"/><rect x="2" y="2" width="6" height="6" fill="#ececec"/><path d="M3 5 L4.3 7.3 L7.6 2.3" fill="none" stroke="#3a55a0" stroke-width="1.4"/></svg><svg style="position:absolute;left:483px;top:669px" width="16" height="16" viewBox="0 0 16 16"><path d="M0.5 2.5 L2.5 0.5 H11.5 V14.5 H0.5 Z" fill="url(#gdoc)" stroke="#404040"/><path d="M0.5 2.5 H2.5 V0.5" fill="#d8f8ff" stroke="#404040"/><path d="M2.5 5.5h6.5M2.5 7.5h6.5M2.5 9.5h6.5M2.5 11.5h6.5" stroke="#5a6a7a" stroke-width="1"/></svg><div class="t" style="left:579px;width:73px;overflow:hidden;top:672px;font-size:11px;line-height:11px;color:#000000;font-family:'Liberation Sans';">1-8</div><div class="t" style="left:654px;width:315px;overflow:hidden;top:672px;font-size:11px;line-height:11px;color:#000000;font-family:'Liberation Sans';">Итого по главам 1 - 8</div><div class="t" style="left:689px;width:400px;text-align:right;top:672px;font-size:11px;line-height:11px;color:#000000;font-family:'Liberation Sans';">1 513,20</div><div class="t" style="left:770px;width:400px;text-align:right;top:672px;font-size:11px;line-height:11px;color:#000000;font-family:'Liberation Sans';">0,00</div><div class="t" style="left:851px;width:400px;text-align:right;top:672px;font-size:11px;line-height:11px;color:#000000;font-family:'Liberation Sans';">0,00</div><div class="t" style="left:926px;width:400px;text-align:right;top:672px;font-size:11px;line-height:11px;color:#000000;font-family:'Liberation Sans';">0,00</div><div class="t" style="left:1027px;width:400px;text-align:right;top:672px;font-size:11px;line-height:11px;color:#000000;font-family:'Liberation Sans';">1 513,20</div><div class="t" style="left:1102px;width:400px;text-align:right;top:672px;font-size:11px;line-height:11px;color:#000000;font-family:'Liberation Sans';">0,00</div><div style="left:364px;top:685px;width:11px;height:15px;background:#f0f0f0;box-shadow:inset 1px 1px #fff"></div><div style="left:363px;top:700px;width:13px;height:1px;background:#808080"></div><div style="left:376px;top:685px;width:1244px;height:15px;background:#dfdffe"></div><div style="left:376px;top:700px;width:1245px;height:1px;background:#c0c0c0"></div><div style="left:410px;top:685px;width:1px;height:16px;background:#c0c0c0"></div><div style="left:469px;top:685px;width:1px;height:16px;background:#c0c0c0"></div><div style="left:511px;top:685px;width:1px;height:16px;background:#c0c0c0"></div><div style="left:576px;top:685px;width:1px;height:16px;background:#c0c0c0"></div><div style="left:652px;top:685px;width:1px;height:16px;background:#c0c0c0"></div><div style="left:969px;top:685px;width:1px;height:16px;background:#c0c0c0"></div><div style="left:1010px;top:685px;width:1px;height:16px;background:#c0c0c0"></div><div style="left:1091px;top:685px;width:1px;height:16px;background:#c0c0c0"></div><div style="left:1172px;top:685px;width:1px;height:16px;background:#c0c0c0"></div><div style="left:1253px;top:685px;width:1px;height:16px;background:#c0c0c0"></div><div style="left:1328px;top:685px;width:1px;height:16px;background:#c0c0c0"></div><div style="left:1429px;top:685px;width:1px;height:16px;background:#c0c0c0"></div><div style="left:1504px;top:685px;width:1px;height:16px;background:#c0c0c0"></div><div style="left:1555px;top:685px;width:1px;height:16px;background:#c0c0c0"></div><div style="left:1620px;top:685px;width:1px;height:16px;background:#c0c0c0"></div><div class="t" style="left:7px;width:400px;text-align:right;top:688px;font-size:11px;line-height:11px;color:#0000ff;font-family:'Liberation Sans';">35</div><svg style="position:absolute;left:482px;top:685px" width="16" height="16" viewBox="0 0 16 16"><rect x="1" y="0.5" width="7" height="2" fill="#ffb000"/><rect x="0.5" y="2.5" width="15" height="11" fill="url(#gfold)" stroke="#8c8c8c"/></svg><div class="t" style="left:579px;width:73px;overflow:hidden;top:688px;font-size:11px;line-height:11px;color:#0000ff;font-family:'Liberation Sans';">Гл. 9</div><div class="t" style="left:654px;width:315px;overflow:hidden;top:688px;font-size:11px;line-height:11px;color:#0000ff;font-family:'Liberation Sans';">Глава  9. Прочие работы и затраты.</div><div class="t" style="left:607px;width:400px;text-align:right;top:688px;font-size:11px;line-height:11px;color:#0000ff;font-family:'Liberation Sans';">9</div><div class="t" style="left:689px;width:400px;text-align:right;top:688px;font-size:11px;line-height:11px;color:#0000ff;font-family:'Liberation Sans';">55,99</div><div class="t" style="left:770px;width:400px;text-align:right;top:688px;font-size:11px;line-height:11px;color:#0000ff;font-family:'Liberation Sans';">0,00</div><div class="t" style="left:851px;width:400px;text-align:right;top:688px;font-size:11px;line-height:11px;color:#0000ff;font-family:'Liberation Sans';">0,00</div><div class="t" style="left:926px;width:400px;text-align:right;top:688px;font-size:11px;line-height:11px;color:#0000ff;font-family:'Liberation Sans';">0,00</div><div class="t" style="left:1027px;width:400px;text-align:right;top:688px;font-size:11px;line-height:11px;color:#0000ff;font-family:'Liberation Sans';">55,99</div><div class="t" style="left:1102px;width:400px;text-align:right;top:688px;font-size:11px;line-height:11px;color:#0000ff;font-family:'Liberation Sans';">0,00</div><div class="t" style="left:1230px;width:600px;text-align:center;top:688px;font-size:11px;line-height:11px;color:#0000ff;font-family:'Liberation Sans';">√</div><div style="left:364px;top:701px;width:11px;height:15px;background:#f0f0f0;box-shadow:inset 1px 1px #fff"></div><div style="left:363px;top:716px;width:13px;height:1px;background:#808080"></div><div style="left:376px;top:701px;width:1244px;height:15px;background:#ffffff"></div><div style="left:376px;top:716px;width:1245px;height:1px;background:#c0c0c0"></div><div style="left:410px;top:701px;width:1px;height:16px;background:#c0c0c0"></div><div style="left:469px;top:701px;width:1px;height:16px;background:#c0c0c0"></div><div style="left:511px;top:701px;width:1px;height:16px;background:#c0c0c0"></div><div style="left:576px;top:701px;width:1px;height:16px;background:#c0c0c0"></div><div style="left:652px;top:701px;width:1px;height:16px;background:#c0c0c0"></div><div style="left:969px;top:701px;width:1px;height:16px;background:#c0c0c0"></div><div style="left:1010px;top:701px;width:1px;height:16px;background:#c0c0c0"></div><div style="left:1091px;top:701px;width:1px;height:16px;background:#c0c0c0"></div><div style="left:1172px;top:701px;width:1px;height:16px;background:#c0c0c0"></div><div style="left:1253px;top:701px;width:1px;height:16px;background:#c0c0c0"></div><div style="left:1328px;top:701px;width:1px;height:16px;background:#c0c0c0"></div><div style="left:1429px;top:701px;width:1px;height:16px;background:#c0c0c0"></div><div style="left:1504px;top:701px;width:1px;height:16px;background:#c0c0c0"></div><div style="left:1555px;top:701px;width:1px;height:16px;background:#c0c0c0"></div><div style="left:1620px;top:701px;width:1px;height:16px;background:#c0c0c0"></div><div class="t" style="left:7px;width:400px;text-align:right;top:704px;font-size:11px;line-height:11px;color:#000000;font-family:'Liberation Sans';">36</div><svg style="position:absolute;left:435px;top:703px" width="11" height="11" viewBox="0 0 11 11"><rect x="0.5" y="0.5" width="9" height="9" rx="0.8" fill="#f8f8f8" stroke="#8a8a8a"/><rect x="2" y="2" width="6" height="6" fill="#ececec"/><path d="M3 5 L4.3 7.3 L7.6 2.3" fill="none" stroke="#3a55a0" stroke-width="1.4"/></svg><svg style="position:absolute;left:483px;top:701px" width="16" height="16" viewBox="0 0 16 16"><path d="M0.5 2.5 L2.5 0.5 H11.5 V14.5 H0.5 Z" fill="url(#gdoc)" stroke="#404040"/><path d="M0.5 2.5 H2.5 V0.5" fill="#d8f8ff" stroke="#404040"/><path d="M2.5 5.5h6.5M2.5 7.5h6.5M2.5 9.5h6.5M2.5 11.5h6.5" stroke="#5a6a7a" stroke-width="1"/></svg><div class="t" style="left:513px;width:63px;overflow:hidden;top:704px;font-size:11px;line-height:11px;color:#000000;font-family:'Liberation Sans';">325/пр Прил</div><div class="t" style="left:579px;width:73px;overflow:hidden;top:704px;font-size:11px;line-height:11px;color:#000000;font-family:'Liberation Sans';">Итог 3</div><div class="t" style="left:654px;width:315px;overflow:hidden;top:704px;font-size:11px;line-height:11px;color:#000000;font-family:'Liberation Sans';">Дополнительные затраты в зимнее время; 3,7%</div><div class="t" style="left:689px;width:400px;text-align:right;top:704px;font-size:11px;line-height:11px;color:#000000;font-family:'Liberation Sans';">55,99</div><div class="t" style="left:770px;width:400px;text-align:right;top:704px;font-size:11px;line-height:11px;color:#000000;font-family:'Liberation Sans';">0,00</div><div class="t" style="left:851px;width:400px;text-align:right;top:704px;font-size:11px;line-height:11px;color:#000000;font-family:'Liberation Sans';">0,00</div><div class="t" style="left:926px;width:400px;text-align:right;top:704px;font-size:11px;line-height:11px;color:#000000;font-family:'Liberation Sans';">0,00</div><div class="t" style="left:1027px;width:400px;text-align:right;top:704px;font-size:11px;line-height:11px;color:#000000;font-family:'Liberation Sans';">55,99</div><div class="t" style="left:1102px;width:400px;text-align:right;top:704px;font-size:11px;line-height:11px;color:#000000;font-family:'Liberation Sans';">0,00</div><div class="t" style="left:1230px;width:600px;text-align:center;top:704px;font-size:11px;line-height:11px;color:#ff0000;font-family:'Liberation Sans';">√</div><div style="left:364px;top:717px;width:11px;height:15px;background:#f0f0f0;box-shadow:inset 1px 1px #fff"></div><div style="left:363px;top:732px;width:13px;height:1px;background:#808080"></div><div style="left:376px;top:717px;width:1244px;height:15px;background:#ffffff"></div><div style="left:376px;top:732px;width:1245px;height:1px;background:#c0c0c0"></div><div style="left:410px;top:717px;width:1px;height:16px;background:#c0c0c0"></div><div style="left:469px;top:717px;width:1px;height:16px;background:#c0c0c0"></div><div style="left:511px;top:717px;width:1px;height:16px;background:#c0c0c0"></div><div style="left:576px;top:717px;width:1px;height:16px;background:#c0c0c0"></div><div style="left:652px;top:717px;width:1px;height:16px;background:#c0c0c0"></div><div style="left:969px;top:717px;width:1px;height:16px;background:#c0c0c0"></div><div style="left:1010px;top:717px;width:1px;height:16px;background:#c0c0c0"></div><div style="left:1091px;top:717px;width:1px;height:16px;background:#c0c0c0"></div><div style="left:1172px;top:717px;width:1px;height:16px;background:#c0c0c0"></div><div style="left:1253px;top:717px;width:1px;height:16px;background:#c0c0c0"></div><div style="left:1328px;top:717px;width:1px;height:16px;background:#c0c0c0"></div><div style="left:1429px;top:717px;width:1px;height:16px;background:#c0c0c0"></div><div style="left:1504px;top:717px;width:1px;height:16px;background:#c0c0c0"></div><div style="left:1555px;top:717px;width:1px;height:16px;background:#c0c0c0"></div><div style="left:1620px;top:717px;width:1px;height:16px;background:#c0c0c0"></div><div class="t" style="left:7px;width:400px;text-align:right;top:720px;font-size:11px;line-height:11px;color:#000000;font-family:'Liberation Sans';">37</div><svg style="position:absolute;left:435px;top:719px" width="11" height="11" viewBox="0 0 11 11"><rect x="0.5" y="0.5" width="9" height="9" rx="0.8" fill="#f8f8f8" stroke="#8a8a8a"/><rect x="2" y="2" width="6" height="6" fill="#ececec"/><path d="M3 5 L4.3 7.3 L7.6 2.3" fill="none" stroke="#3a55a0" stroke-width="1.4"/></svg><svg style="position:absolute;left:483px;top:717px" width="16" height="16" viewBox="0 0 16 16"><path d="M0.5 2.5 L2.5 0.5 H11.5 V14.5 H0.5 Z" fill="url(#gdoc)" stroke="#404040"/><path d="M0.5 2.5 H2.5 V0.5" fill="#d8f8ff" stroke="#404040"/><path d="M2.5 5.5h6.5M2.5 7.5h6.5M2.5 9.5h6.5M2.5 11.5h6.5" stroke="#5a6a7a" stroke-width="1"/></svg><div class="t" style="left:579px;width:73px;overflow:hidden;top:720px;font-size:11px;line-height:11px;color:#000000;font-family:'Liberation Sans';">2.2</div><div class="t" style="left:654px;width:315px;overflow:hidden;top:720px;font-size:11px;line-height:11px;color:#000000;font-family:'Liberation Sans';">Затраты по перевозке работников к месту работы и обратно</div><div class="t" style="left:689px;width:400px;text-align:right;top:720px;font-size:11px;line-height:11px;color:#000000;font-family:'Liberation Sans';">0,00</div><div class="t" style="left:770px;width:400px;text-align:right;top:720px;font-size:11px;line-height:11px;color:#000000;font-family:'Liberation Sans';">0,00</div><div class="t" style="left:851px;width:400px;text-align:right;top:720px;font-size:11px;line-height:11px;color:#000000;font-family:'Liberation Sans';">0,00</div><div class="t" style="left:926px;width:400px;text-align:right;top:720px;font-size:11px;line-height:11px;color:#000000;font-family:'Liberation Sans';">0,00</div><div class="t" style="left:1027px;width:400px;text-align:right;top:720px;font-size:11px;line-height:11px;color:#000000;font-family:'Liberation Sans';">0,00</div><div class="t" style="left:1102px;width:400px;text-align:right;top:720px;font-size:11px;line-height:11px;color:#000000;font-family:'Liberation Sans';">0,00</div><div class="t" style="left:1230px;width:600px;text-align:center;top:720px;font-size:11px;line-height:11px;color:#ff0000;font-family:'Liberation Sans';">√</div><svg style="position:absolute;left:365px;top:400px" width="8" height="10" viewBox="0 0 8 10"><path d="M1 0 L7 5 L1 10 Z" fill="#000"/></svg><svg style="position:absolute;left:1604px;top:397px" width="15" height="15" viewBox="0 0 15 15"><path d="M7.5 0.8 L14 13 H1 Z" fill="#ffe866" stroke="#d0b040" stroke-width="0.9"/><path d="M7.5 4.5v5" stroke="#603010" stroke-width="1.1"/><rect x="7" y="11" width="1" height="1" fill="#603010"/></svg><div style="left:1734px;top:125px;width:16px;height:608px;background:#f0f0f0"></div><div style="left:1734px;top:208px;width:16px;height:152px;background:#cdcdcd"></div><svg style="position:absolute;left:1734px;top:127px" width="16" height="14" viewBox="0 0 16 14"><path d="M4 9 L8 5 L12 9" fill="none" stroke="#606060" stroke-width="1.6"/></svg><svg style="position:absolute;left:1734px;top:718px" width="16" height="14" viewBox="0 0 16 14"><path d="M4 5 L8 9 L12 5" fill="none" stroke="#606060" stroke-width="1.6"/></svg><div style="left:1px;top:665px;width:355px;height:1px;background:#a0a0a0"></div><div class="t" style="left:7px;top:673px;font-size:11px;line-height:11px;color:#000;font-family:'Liberation Sans';">Всего элементов в проекте: 4</div><div class="t" style="left:8px;top:691px;font-size:11px;line-height:11px;color:#000;font-family:'Liberation Sans';">Сводный сметный расчёт заполнен.</div><div style="left:84px;top:708px;width:229px;height:23px;background:#f0f0f0;box-shadow:inset 1px 1px #fff, inset -1px -1px #707070, inset -2px -2px #a0a0a0"></div><div class="t" style="left:-102px;width:600px;text-align:center;top:716px;font-size:11px;line-height:11px;color:#000;font-family:'Liberation Sans';">Перенести сметы в ССР</div><div style="left:2px;top:736px;width:354px;height:1px;background:#a0a0a0"></div><div class="t" style="left:7px;top:745px;font-size:11px;line-height:11px;color:#000;font-family:'Liberation Sans';">Вносить элементы в сводный расчёт до</div><div style="left:6px;top:759px;width:343px;height:21px;background:#fff;box-shadow:inset 1px 1px #a0a0a0, inset -1px -1px #e0e0e0"></div><div style="left:331px;top:761px;width:16px;height:17px;background:#f0f0f0;box-shadow:inset 1px 1px #fff, inset -1px -1px #a0a0a0"></div><svg style="position:absolute;left:334px;top:767px" width="10" height="6" viewBox="0 0 10 6"><path d="M1 0 H9 L5 5 Z" fill="#000"/></svg><div class="t" style="left:29px;top:766px;font-size:11px;line-height:11px;color:#000;font-family:'Liberation Sans';">Локальных смет</div><div style="left:355px;top:118px;width:1px;height:672px;background:#a0a0a0"></div><div style="left:356px;top:118px;width:1px;height:672px;background:#fff"></div><div style="left:363px;top:738px;width:75px;height:20px;background:#f3f3f3;box-shadow:inset 1px 1px #a0a0a0"></div><div class="t" style="left:368px;top:746px;font-size:11px;line-height:11px;color:#000;font-family:'Liberation Sans';">2000, Январь</div><div class="t" style="left:448px;top:746px;font-size:11px;line-height:11px;color:#000;font-family:'Liberation Sans';">2025, Март</div><div style="left:404px;top:768px;width:1349px;height:1px;background:#808080"></div><div style="left:404px;top:769px;width:1349px;height:1px;background:#a0a0a0"></div><div style="left:360px;top:758px;width:1px;height:31px;background:#fff"></div><div style="left:361px;top:788px;width:43px;height:1px;background:#a0a0a0"></div><div style="left:361px;top:789px;width:43px;height:1px;background:#707070"></div><div style="left:403px;top:769px;width:1px;height:20px;background:#707070"></div><div class="t" style="left:368px;top:776px;font-size:11px;line-height:11px;color:#000;font-family:'Liberation Sans';">ССР</div><div style="left:404px;top:770px;width:85px;height:18px;background:#f0f0f0;box-shadow:inset 1px 0 #fff, inset -1px -1px #707070, inset -2px -2px #a0a0a0"></div><div class="t" style="left:410px;top:775px;font-size:11px;line-height:11px;color:#000;font-family:'Liberation Sans';">Сводка затрат</div><div style="left:490px;top:770px;width:86px;height:18px;background:#f0f0f0;box-shadow:inset 1px 0 #fff, inset -1px -1px #707070, inset -2px -2px #a0a0a0"></div><div class="t" style="left:496px;top:775px;font-size:11px;line-height:11px;color:#000;font-family:'Liberation Sans';">Предпросмотр</div><div style="left:1px;top:790px;width:1752px;height:1px;background:#a0a0a0"></div><div style="left:1px;top:791px;width:1752px;height:1px;background:#fff"></div><div class="t" style="left:36px;top:800px;font-size:11px;line-height:11px;color:#000;font-family:'Liberation Sans';">Добавить</div><div class="t" style="left:117px;top:800px;font-size:11px;line-height:11px;color:#000;font-family:'Liberation Sans';">Удалить</div><div style="left:13px;top:817px;width:1723px;height:225px;background:#fff"></div><div style="left:13px;top:817px;width:465px;height:1px;background:#808080"></div><div style="left:14px;top:818px;width:11px;height:47px;background:#f0f0f0;box-shadow:inset 1px 1px #fff"></div><div style="left:26px;top:818px;width:98px;height:47px;background:#f0f0f0;box-shadow:inset 1px 1px #fff"></div><div style="left:125px;top:818px;width:222px;height:47px;background:#f0f0f0;box-shadow:inset 1px 1px #fff"></div><div style="left:348px;top:818px;width:129px;height:16px;background:#f0f0f0;box-shadow:inset 1px 1px #fff"></div><div style="left:348px;top:835px;width:64px;height:30px;background:#f0f0f0;box-shadow:inset 1px 1px #fff"></div><div style="left:413px;top:835px;width:64px;height:30px;background:#f0f0f0;box-shadow:inset 1px 1px #fff"></div><div style="left:347px;top:834px;width:131px;height:1px;background:#808080"></div><div style="left:13px;top:865px;width:465px;height:1px;background:#808080"></div><div style="left:13px;top:817px;width:1px;height:48px;background:#808080"></div><div style="left:25px;top:817px;width:1px;height:48px;background:#808080"></div><div style="left:124px;top:817px;width:1px;height:48px;background:#808080"></div><div style="left:347px;top:817px;width:1px;height:48px;background:#808080"></div><div style="left:477px;top:817px;width:1px;height:48px;background:#808080"></div><div style="left:412px;top:834px;width:1px;height:31px;background:#808080"></div><div class="t" style="left:-225px;width:600px;text-align:center;top:838px;font-size:11px;line-height:11px;color:#000;font-family:'Liberation Sans';">Сокр. Назв.</div><div class="t" style="left:-64px;width:600px;text-align:center;top:838px;font-size:11px;line-height:11px;color:#000;font-family:'Liberation Sans';">Название формулы</div><div class="t" style="left:112px;width:600px;text-align:center;top:822px;font-size:11px;line-height:11px;color:#000;font-family:'Liberation Sans';">Значение</div><div class="t" style="left:80px;width:600px;text-align:center;top:838px;font-size:11px;line-height:11px;color:#000;font-family:'Liberation Sans';">2000,</div><div class="t" style="left:80px;width:600px;text-align:center;top:852px;font-size:11px;line-height:11px;color:#000;font-family:'Liberation Sans';">Январь</div><div class="t" style="left:145px;width:600px;text-align:center;top:847px;font-size:11px;line-height:11px;color:#000;font-family:'Liberation Sans';">2025, Март</div><div style="left:14px;top:866px;width:11px;height:15px;background:#f0f0f0;box-shadow:inset 1px 1px #fff"></div><div style="left:13px;top:881px;width:13px;height:1px;background:#808080"></div><div style="left:25px;top:881px;width:453px;height:1px;background:#c0c0c0"></div><div style="left:124px;top:866px;width:1px;height:16px;background:#c0c0c0"></div><div style="left:347px;top:866px;width:1px;height:16px;background:#c0c0c0"></div><div style="left:412px;top:866px;width:1px;height:16px;background:#c0c0c0"></div><div style="left:477px;top:866px;width:1px;height:16px;background:#c0c0c0"></div><div style="left:13px;top:866px;width:1px;height:16px;background:#808080"></div><div style="left:25px;top:866px;width:1px;height:16px;background:#808080"></div><div class="t" style="left:28px;width:95px;overflow:hidden;top:869px;font-size:11px;line-height:11px;color:#000;font-family:'Liberation Sans';">врем</div><div class="t" style="left:127px;width:219px;overflow:hidden;top:869px;font-size:11px;line-height:11px;color:#000;font-family:'Liberation Sans';">Временные здания и сооружения</div><div class="t" style="left:350px;width:61px;overflow:hidden;top:869px;font-size:11px;line-height:11px;color:#000;font-family:'Liberation Sans';">1,6</div><div class="t" style="left:415px;width:61px;overflow:hidden;top:869px;font-size:11px;line-height:11px;color:#000;font-family:'Liberation Sans';">1,6</div><div style="left:14px;top:882px;width:11px;height:15px;background:#f0f0f0;box-shadow:inset 1px 1px #fff"></div><div style="left:13px;top:897px;width:13px;height:1px;background:#808080"></div><div style="left:25px;top:897px;width:453px;height:1px;background:#c0c0c0"></div><div style="left:124px;top:882px;width:1px;height:16px;background:#c0c0c0"></div><div style="left:347px;top:882px;width:1px;height:16px;background:#c0c0c0"></div><div style="left:412px;top:882px;width:1px;height:16px;background:#c0c0c0"></div><div style="left:477px;top:882px;width:1px;height:16px;background:#c0c0c0"></div><div style="left:13px;top:882px;width:1px;height:16px;background:#808080"></div><div style="left:25px;top:882px;width:1px;height:16px;background:#808080"></div><div class="t" style="left:28px;width:95px;overflow:hidden;top:885px;font-size:11px;line-height:11px;color:#000;font-family:'Liberation Sans';">зч</div><div class="t" style="left:127px;width:219px;overflow:hidden;top:885px;font-size:11px;line-height:11px;color:#000;font-family:'Liberation Sans';">Зимнее удорожание</div><div class="t" style="left:350px;width:61px;overflow:hidden;top:885px;font-size:11px;line-height:11px;color:#000;font-family:'Liberation Sans';">1,5</div><div class="t" style="left:415px;width:61px;overflow:hidden;top:885px;font-size:11px;line-height:11px;color:#000;font-family:'Liberation Sans';">1,5</div><div style="left:14px;top:898px;width:11px;height:15px;background:#f0f0f0;box-shadow:inset 1px 1px #fff"></div><div style="left:13px;top:913px;width:13px;height:1px;background:#808080"></div><div style="left:25px;top:913px;width:453px;height:1px;background:#c0c0c0"></div><div style="left:124px;top:898px;width:1px;height:16px;background:#c0c0c0"></div><div style="left:347px;top:898px;width:1px;height:16px;background:#c0c0c0"></div><div style="left:412px;top:898px;width:1px;height:16px;background:#c0c0c0"></div><div style="left:477px;top:898px;width:1px;height:16px;background:#c0c0c0"></div><div style="left:13px;top:898px;width:1px;height:16px;background:#808080"></div><div style="left:25px;top:898px;width:1px;height:16px;background:#808080"></div><div class="t" style="left:28px;width:95px;overflow:hidden;top:901px;font-size:11px;line-height:11px;color:#000;font-family:'Liberation Sans';">Авторский надзор</div><div class="t" style="left:127px;width:219px;overflow:hidden;top:901px;font-size:11px;line-height:11px;color:#000;font-family:'Liberation Sans';">Содержание авторского надзора 0,2%</div><div class="t" style="left:350px;width:61px;overflow:hidden;top:901px;font-size:11px;line-height:11px;color:#000;font-family:'Liberation Sans';">0,2</div><div class="t" style="left:415px;width:61px;overflow:hidden;top:901px;font-size:11px;line-height:11px;color:#000;font-family:'Liberation Sans';">0,2</div><div style="left:14px;top:914px;width:11px;height:15px;background:#f0f0f0;box-shadow:inset 1px 1px #fff"></div><div style="left:13px;top:929px;width:13px;height:1px;background:#808080"></div><div style="left:25px;top:929px;width:453px;height:1px;background:#c0c0c0"></div><div style="left:124px;top:914px;width:1px;height:16px;background:#c0c0c0"></div><div style="left:347px;top:914px;width:1px;height:16px;background:#c0c0c0"></div><div style="left:412px;top:914px;width:1px;height:16px;background:#c0c0c0"></div><div style="left:477px;top:914px;width:1px;height:16px;background:#c0c0c0"></div><div style="left:13px;top:914px;width:1px;height:16px;background:#808080"></div><div style="left:25px;top:914px;width:1px;height:16px;background:#808080"></div><div class="t" style="left:28px;width:95px;overflow:hidden;top:917px;font-size:11px;line-height:11px;color:#000;font-family:'Liberation Sans';">НДС 20%</div><div class="t" style="left:127px;width:219px;overflow:hidden;top:917px;font-size:11px;line-height:11px;color:#000;font-family:'Liberation Sans';">НДС 20%</div><div class="t" style="left:350px;width:61px;overflow:hidden;top:917px;font-size:11px;line-height:11px;color:#000;font-family:'Liberation Sans';">20</div><div class="t" style="left:415px;width:61px;overflow:hidden;top:917px;font-size:11px;line-height:11px;color:#000;font-family:'Liberation Sans';">20</div><div style="left:14px;top:930px;width:11px;height:15px;background:#f0f0f0;box-shadow:inset 1px 1px #fff"></div><div style="left:13px;top:945px;width:13px;height:1px;background:#808080"></div><div style="left:25px;top:945px;width:453px;height:1px;background:#c0c0c0"></div><div style="left:124px;top:930px;width:1px;height:16px;background:#c0c0c0"></div><div style="left:347px;top:930px;width:1px;height:16px;background:#c0c0c0"></div><div style="left:412px;top:930px;width:1px;height:16px;background:#c0c0c0"></div><div style="left:477px;top:930px;width:1px;height:16px;background:#c0c0c0"></div><div style="left:13px;top:930px;width:1px;height:16px;background:#808080"></div><div style="left:25px;top:930px;width:1px;height:16px;background:#808080"></div><div class="t" style="left:28px;width:95px;overflow:hidden;top:933px;font-size:11px;line-height:11px;color:#000;font-family:'Liberation Sans';">Непредв расх</div><div class="t" style="left:127px;width:219px;overflow:hidden;top:933px;font-size:11px;line-height:11px;color:#000;font-family:'Liberation Sans';">Непредвиденные расходы (установить% самостоятельно)</div><div class="t" style="left:350px;width:61px;overflow:hidden;top:933px;font-size:11px;line-height:11px;color:#000;font-family:'Liberation Sans';">2</div><div class="t" style="left:415px;width:61px;overflow:hidden;top:933px;font-size:11px;line-height:11px;color:#000;font-family:'Liberation Sans';">2</div><div style="left:14px;top:946px;width:11px;height:15px;background:#f0f0f0;box-shadow:inset 1px 1px #fff"></div><div style="left:13px;top:961px;width:13px;height:1px;background:#808080"></div><div style="left:25px;top:961px;width:453px;height:1px;background:#c0c0c0"></div><div style="left:124px;top:946px;width:1px;height:16px;background:#c0c0c0"></div><div style="left:347px;top:946px;width:1px;height:16px;background:#c0c0c0"></div><div style="left:412px;top:946px;width:1px;height:16px;background:#c0c0c0"></div><div style="left:477px;top:946px;width:1px;height:16px;background:#c0c0c0"></div><div style="left:13px;top:946px;width:1px;height:16px;background:#808080"></div><div style="left:25px;top:946px;width:1px;height:16px;background:#808080"></div><div class="t" style="left:28px;width:95px;overflow:hidden;top:949px;font-size:11px;line-height:11px;color:#000;font-family:'Liberation Sans';">Автодороги</div><div class="t" style="left:127px;width:219px;overflow:hidden;top:949px;font-size:11px;line-height:11px;color:#000;font-family:'Liberation Sans';">Пользование автодорогами</div><div class="t" style="left:350px;width:61px;overflow:hidden;top:949px;font-size:11px;line-height:11px;color:#000;font-family:'Liberation Sans';">1</div><div class="t" style="left:415px;width:61px;overflow:hidden;top:949px;font-size:11px;line-height:11px;color:#000;font-family:'Liberation Sans';">1</div><div style="left:14px;top:962px;width:11px;height:15px;background:#f0f0f0;box-shadow:inset 1px 1px #fff"></div><div style="left:13px;top:977px;width:13px;height:1px;background:#808080"></div><div style="left:25px;top:977px;width:453px;height:1px;background:#c0c0c0"></div><div style="left:124px;top:962px;width:1px;height:16px;background:#c0c0c0"></div><div style="left:347px;top:962px;width:1px;height:16px;background:#c0c0c0"></div><div style="left:412px;top:962px;width:1px;height:16px;background:#c0c0c0"></div><div style="left:477px;top:962px;width:1px;height:16px;background:#c0c0c0"></div><div style="left:13px;top:962px;width:1px;height:16px;background:#808080"></div><div style="left:25px;top:962px;width:1px;height:16px;background:#808080"></div><div class="t" style="left:28px;width:95px;overflow:hidden;top:965px;font-size:11px;line-height:11px;color:#000;font-family:'Liberation Sans';">БГ</div><div class="t" style="left:127px;width:219px;overflow:hidden;top:965px;font-size:11px;line-height:11px;color:#000;font-family:'Liberation Sans';">сумма банковской гарантии, руб.</div><div class="t" style="left:350px;width:61px;overflow:hidden;top:965px;font-size:11px;line-height:11px;color:#000;font-family:'Liberation Sans';">0</div><div class="t" style="left:415px;width:61px;overflow:hidden;top:965px;font-size:11px;line-height:11px;color:#000;font-family:'Liberation Sans';">0</div><div style="left:14px;top:978px;width:11px;height:15px;background:#f0f0f0;box-shadow:inset 1px 1px #fff"></div><div style="left:13px;top:993px;width:13px;height:1px;background:#808080"></div><div style="left:25px;top:993px;width:453px;height:1px;background:#c0c0c0"></div><div style="left:124px;top:978px;width:1px;height:16px;background:#c0c0c0"></div><div style="left:347px;top:978px;width:1px;height:16px;background:#c0c0c0"></div><div style="left:412px;top:978px;width:1px;height:16px;background:#c0c0c0"></div><div style="left:477px;top:978px;width:1px;height:16px;background:#c0c0c0"></div><div style="left:13px;top:978px;width:1px;height:16px;background:#808080"></div><div style="left:25px;top:978px;width:1px;height:16px;background:#808080"></div><div class="t" style="left:28px;width:95px;overflow:hidden;top:981px;font-size:11px;line-height:11px;color:#000;font-family:'Liberation Sans';">КВ</div><div class="t" style="left:127px;width:219px;overflow:hidden;top:981px;font-size:11px;line-height:11px;color:#000;font-family:'Liberation Sans';">размер вознаграждения в расчете на год, %</div><div class="t" style="left:350px;width:61px;overflow:hidden;top:981px;font-size:11px;line-height:11px;color:#000;font-family:'Liberation Sans';">1</div><div class="t" style="left:415px;width:61px;overflow:hidden;top:981px;font-size:11px;line-height:11px;color:#000;font-family:'Liberation Sans';">1</div><div style="left:14px;top:994px;width:11px;height:15px;background:#f0f0f0;box-shadow:inset 1px 1px #fff"></div><div style="left:13px;top:1009px;width:13px;height:1px;background:#808080"></div><div style="left:25px;top:1009px;width:453px;height:1px;background:#c0c0c0"></div><div style="left:124px;top:994px;width:1px;height:16px;background:#c0c0c0"></div><div style="left:347px;top:994px;width:1px;height:16px;background:#c0c0c0"></div><div style="left:412px;top:994px;width:1px;height:16px;background:#c0c0c0"></div><div style="left:477px;top:994px;width:1px;height:16px;background:#c0c0c0"></div><div style="left:13px;top:994px;width:1px;height:16px;background:#808080"></div><div style="left:25px;top:994px;width:1px;height:16px;background:#808080"></div><div class="t" style="left:28px;width:95px;overflow:hidden;top:997px;font-size:11px;line-height:11px;color:#000;font-family:'Liberation Sans';">N</div><div class="t" style="left:127px;width:219px;overflow:hidden;top:997px;font-size:11px;line-height:11px;color:#000;font-family:'Liberation Sans';">срок действия гарантии, количество лет</div><div class="t" style="left:350px;width:61px;overflow:hidden;top:997px;font-size:11px;line-height:11px;color:#000;font-family:'Liberation Sans';">2</div><div class="t" style="left:415px;width:61px;overflow:hidden;top:997px;font-size:11px;line-height:11px;color:#000;font-family:'Liberation Sans';">2</div><div style="left:14px;top:1010px;width:11px;height:15px;background:#f0f0f0;box-shadow:inset 1px 1px #fff"></div><div style="left:13px;top:1025px;width:13px;height:1px;background:#808080"></div><div style="left:25px;top:1025px;width:453px;height:1px;background:#c0c0c0"></div><div style="left:124px;top:1010px;width:1px;height:16px;background:#c0c0c0"></div><div style="left:347px;top:1010px;width:1px;height:16px;background:#c0c0c0"></div><div style="left:412px;top:1010px;width:1px;height:16px;background:#c0c0c0"></div><div style="left:477px;top:1010px;width:1px;height:16px;background:#c0c0c0"></div><div style="left:13px;top:1010px;width:1px;height:16px;background:#808080"></div><div style="left:25px;top:1010px;width:1px;height:16px;background:#808080"></div><div class="t" style="left:28px;width:95px;overflow:hidden;top:1013px;font-size:11px;line-height:11px;color:#000;font-family:'Liberation Sans';">НДС 10%</div><div class="t" style="left:127px;width:219px;overflow:hidden;top:1013px;font-size:11px;line-height:11px;color:#000;font-family:'Liberation Sans';">НДС 20%</div><div class="t" style="left:350px;width:61px;overflow:hidden;top:1013px;font-size:11px;line-height:11px;color:#000;font-family:'Liberation Sans';">10</div><div class="t" style="left:415px;width:61px;overflow:hidden;top:1013px;font-size:11px;line-height:11px;color:#000;font-family:'Liberation Sans';">10</div><div style="left:14px;top:1026px;width:11px;height:15px;background:#f0f0f0;box-shadow:inset 1px 1px #fff"></div><div style="left:13px;top:1041px;width:13px;height:1px;background:#808080"></div><div style="left:25px;top:1041px;width:453px;height:1px;background:#c0c0c0"></div><div style="left:124px;top:1026px;width:1px;height:16px;background:#c0c0c0"></div><div style="left:347px;top:1026px;width:1px;height:16px;background:#c0c0c0"></div><div style="left:412px;top:1026px;width:1px;height:16px;background:#c0c0c0"></div><div style="left:477px;top:1026px;width:1px;height:16px;background:#c0c0c0"></div><div style="left:13px;top:1026px;width:1px;height:16px;background:#808080"></div><div style="left:25px;top:1026px;width:1px;height:16px;background:#808080"></div><div class="t" style="left:28px;width:95px;overflow:hidden;top:1029px;font-size:11px;line-height:11px;color:#000;font-family:'Liberation Sans';">ИнжИз</div><div class="t" style="left:127px;width:219px;overflow:hidden;top:1029px;font-size:11px;line-height:11px;color:#000;font-family:'Liberation Sans';">Инженерные изыскания для архитектурно-строительного</div><div class="t" style="left:350px;width:61px;overflow:hidden;top:1029px;font-size:11px;line-height:11px;color:#000;font-family:'Liberation Sans';">0</div><div class="t" style="left:415px;width:61px;overflow:hidden;top:1029px;font-size:11px;line-height:11px;color:#000;font-family:'Liberation Sans';">0</div><svg style="position:absolute;left:16px;top:900px" width="8" height="11" viewBox="0 0 8 11"><path d="M1 0 L7 5.5 L1 11 Z" fill="#000"/></svg><div style="left:13px;top:816px;width:1740px;height:1px;background:#a0a0a0"></div><div style="left:1737px;top:817px;width:15px;height:225px;background:#f0f0f0"></div><div style="left:1737px;top:848px;width:15px;height:75px;background:#cdcdcd"></div><svg style="position:absolute;left:1737px;top:819px" width="16" height="14" viewBox="0 0 16 14"><path d="M4 9 L8 5 L12 9" fill="none" stroke="#606060" stroke-width="1.6"/></svg><svg style="position:absolute;left:1737px;top:1027px" width="16" height="14" viewBox="0 0 16 14"><path d="M4 5 L8 9 L12 5" fill="none" stroke="#606060" stroke-width="1.6"/></svg><div style="left:5px;top:812px;width:1px;height:230px;background:#a0a0a0"></div><div style="left:6px;top:812px;width:1px;height:230px;background:#fff"></div><div style="left:8px;top:812px;width:1px;height:230px;background:#a0a0a0"></div><div style="left:9px;top:812px;width:1px;height:230px;background:#fff"></div><div style="left:1px;top:1044px;width:1752px;height:1px;background:#a0a0a0"></div><div style="left:1px;top:1045px;width:1752px;height:1px;background:#fff"></div><div style="left:1632px;top:1054px;width:113px;height:22px;background:#f0f0f0;box-shadow:inset 1px 1px #fff, inset -1px -1px #707070, inset -2px -2px #a0a0a0"></div><div class="t" style="left:1388px;width:600px;text-align:center;top:1061px;font-size:11px;line-height:11px;color:#000;font-family:'Liberation Sans';">Закрыть</div><div style="left:1px;top:1085px;width:1752px;height:1px;background:#a0a0a0"></div><div style="left:1px;top:1086px;width:1752px;height:1px;background:#fff"></div><div style="left:3px;top:1088px;width:85px;height:27px;box-shadow:inset 1px 1px #a0a0a0, inset -1px -1px #fff"></div><div style="left:90px;top:1088px;width:299px;height:27px;box-shadow:inset 1px 1px #a0a0a0, inset -1px -1px #fff"></div><div style="left:391px;top:1088px;width:1292px;height:27px;box-shadow:inset 1px 1px #a0a0a0, inset -1px -1px #fff"></div><div style="left:1686px;top:1088px;width:31px;height:27px;box-shadow:inset 1px 1px #a0a0a0, inset -1px -1px #fff"></div><div style="left:1720px;top:1088px;width:31px;height:27px;box-shadow:inset 1px 1px #a0a0a0, inset -1px -1px #fff"></div><div class="t" style="left:1436px;width:600px;text-align:center;top:1097px;font-size:11px;line-height:11px;color:#000;font-family:'Liberation Sans';">RU</div><div style="left:1px;top:1116px;width:1752px;height:1px;background:#a0a0a0"></div><div style="left:1px;top:1117px;width:1752px;height:1px;background:#c8c8c8"></div><div style="left:1px;top:1119px;width:1752px;height:1px;background:#808080"></div><div style="left:0px;top:1120px;width:1755px;height:1px;background:#505050"></div><svg style="position:absolute;left:1694px;top:1093px" width="17" height="17" viewBox="0 0 17 17"><circle cx="8.5" cy="8.5" r="7.5" fill="#9a9a9a"/><rect x="7.5" y="7" width="2" height="6" fill="#fff"/><rect x="7.5" y="4" width="2" height="2" fill="#fff"/><path d="M1 1 L16 16" stroke="#ff0000" stroke-width="1.8"/></svg><svg style="position:absolute;left:15px;top:32px" width="16" height="16" viewBox="0 0 16 16"><rect x="0.5" y="0.5" width="7" height="2" fill="#f0f000" stroke="#808000"/><path d="M4.5 3 V13.5 H6" stroke="#203060" fill="none"/><rect x="6.5" y="3.5" width="7" height="2.2" fill="#a8c8f0" stroke="#5070a0" stroke-width="0.8"/><path d="M4.5 4.5 H6.5" stroke="#203060"/><rect x="6.5" y="7.5" width="7" height="2.2" fill="#a8c8f0" stroke="#5070a0" stroke-width="0.8"/><path d="M4.5 8.5 H6.5" stroke="#203060"/><rect x="6.5" y="11.5" width="7" height="2.2" fill="#a8c8f0" stroke="#5070a0" stroke-width="0.8"/><path d="M4.5 12.5 H6.5" stroke="#203060"/></svg><svg style="position:absolute;left:38px;top:32px" width="16" height="16" viewBox="0 0 16 16"><path d="M0 7.5 H3 V5.5 L6 8.5 L3 11.5 V9.5 H0 Z" fill="#0a3fe0"/><rect x="3.5" y="0.5" width="7" height="2" fill="#f0f000" stroke="#808000"/><path d="M7.5 3 V13.5 H9" stroke="#203060" fill="none"/><rect x="9.5" y="3.5" width="7" height="2.2" fill="#a8c8f0" stroke="#5070a0" stroke-width="0.8"/><path d="M7.5 4.5 H9.5" stroke="#203060"/><rect x="9.5" y="7.5" width="7" height="2.2" fill="#a8c8f0" stroke="#5070a0" stroke-width="0.8"/><path d="M7.5 8.5 H9.5" stroke="#203060"/><rect x="9.5" y="11.5" width="7" height="2.2" fill="#a8c8f0" stroke="#5070a0" stroke-width="0.8"/><path d="M7.5 12.5 H9.5" stroke="#203060"/></svg><svg style="position:absolute;left:68px;top:32px" width="16" height="16" viewBox="0 0 16 16"><rect x="0.5" y="0.5" width="13" height="13" fill="#fff" stroke="#2a7a2a"/><path d="M3 3 L11 11 M11 3 L3 11" stroke="#2a9a3a" stroke-width="2.6"/><path d="M3 3 L11 11" stroke="#7cd07c" stroke-width="0.9"/></svg><svg style="position:absolute;left:96px;top:32px" width="16" height="16" viewBox="0 0 16 16"><rect x="1.5" y="1" width="13" height="14" fill="#f4f4f4" stroke="#c8c8c8"/><rect x="0" y="1.5" width="15" height="6" fill="#e8101a"/><text x="7.5" y="6.6" font-family="Liberation Sans" font-weight="bold" font-size="5.6" fill="#fff" text-anchor="middle">PDF</text><path d="M4 14 Q6 10 9 9 M6.5 14 Q8.5 10 12 9.5 M10 14 Q10 11 14 11" stroke="#e8101a" stroke-width="1.3" fill="none"/></svg><svg style="position:absolute;left:125px;top:32px" width="16" height="16" viewBox="0 0 16 16"><path d="M2 14 L7 9" stroke="#d06a20" stroke-width="3" stroke-linecap="round"/><circle cx="10" cy="5.5" r="4.5" fill="#b8d0f0" stroke="#e08040" stroke-width="1.3"/><circle cx="9" cy="4.5" r="1.5" fill="#e8f0ff"/></svg><svg style="position:absolute;left:162px;top:32px" width="16" height="16" viewBox="0 0 16 16"><path d="M0.5 0.5 H12.5 L14.5 2.5 V14.5 H0.5 Z" fill="#7a7a7a"/><rect x="3" y="0.5" width="8" height="5" fill="#d0d0d0"/><rect x="8" y="1.5" width="2" height="3" fill="#7a7a7a"/><rect x="2.5" y="8" width="10" height="6" fill="#e6e6e6"/></svg><svg style="position:absolute;left:184px;top:32px" width="16" height="16" viewBox="0 0 16 16"><path d="M3 10 A5.5 5.5 0 0 1 11 3" stroke="#7a7a7a" stroke-width="2.2" fill="none"/><path d="M13 6 A5.5 5.5 0 0 1 5 13" stroke="#7a7a7a" stroke-width="2.2" fill="none"/><path d="M9 0 L13 3 L9 6 Z M7 10 L3 13 L7 16 Z" fill="#7a7a7a"/></svg><svg style="position:absolute;left:207px;top:32px" width="16" height="16" viewBox="0 0 16 16"><path d="M2 8 Q7 1 13 7" stroke="#7a7a7a" stroke-width="1.8" fill="none"/><path d="M0 5 L4 10 L0.5 10.5 Z" fill="#7a7a7a"/></svg><svg style="position:absolute;left:237px;top:32px" width="16" height="16" viewBox="0 0 16 16"><path d="M2 5 Q7 -1 11 6" stroke="#2040e0" stroke-width="2" fill="none"/><path d="M0 2 L5 7 L0 8 Z" fill="#2040e0"/><rect x="5.5" y="7.5" width="9" height="7" fill="#fff" stroke="#4060c0"/><path d="M7.5 9.5 L12.5 13 M12.5 9.5 L7.5 13 M10 9 V13.5" stroke="#000" stroke-width="0.9"/></svg><svg style="position:absolute;left:266px;top:32px" width="16" height="16" viewBox="0 0 16 16"><rect x="0.5" y="4.5" width="10" height="3" fill="#b8b8b8" stroke="#7a7a7a"/><rect x="1.5" y="8.5" width="9" height="2.5" fill="#7a7a7a"/><rect x="1.5" y="12" width="9" height="3" fill="#7a7a7a"/><rect x="9.5" y="0.5" width="6" height="6" fill="#fff" stroke="#7a7a7a"/><circle cx="12.5" cy="3.5" r="1.8" fill="none" stroke="#7a7a7a"/></svg><svg style="position:absolute;left:289px;top:32px" width="16" height="16" viewBox="0 0 16 16"><rect x="1.5" y="4.5" width="9" height="3" fill="#7a7a7a"/><rect x="1.5" y="8" width="9" height="3" fill="#7a7a7a"/><rect x="2.5" y="11.5" width="8" height="3" fill="#b8b8b8" stroke="#7a7a7a"/><rect x="9.5" y="0.5" width="6" height="6" fill="#fff" stroke="#7a7a7a"/><circle cx="12.5" cy="3.5" r="1.8" fill="none" stroke="#7a7a7a"/></svg><svg style="position:absolute;left:311px;top:32px" width="16" height="16" viewBox="0 0 16 16"><path d="M0.5 5.5 H11.5 V11.5 H6 L4 15 V11.5 H0.5 Z" fill="none" stroke="#b8b8b8"/><rect x="9.5" y="0.5" width="6" height="6" fill="#fff" stroke="#7a7a7a"/><circle cx="12.5" cy="3.5" r="1.8" fill="none" stroke="#7a7a7a"/></svg><svg style="position:absolute;left:340px;top:32px" width="16" height="16" viewBox="0 0 16 16"><path d="M0 8 H14 Q12 14 7 14 Q2 14 0 8 Z" fill="#7a7a7a"/><rect x="3" y="4" width="8" height="4" fill="#b8b8b8" stroke="#7a7a7a"/><rect x="14" y="7" width="2" height="7" fill="#7a7a7a"/></svg><svg style="position:absolute;left:363px;top:32px" width="16" height="16" viewBox="0 0 16 16"><rect x="5.5" y="0.5" width="8" height="13" fill="#b8b8b8" stroke="#7a7a7a"/><rect x="0.5" y="6.5" width="6" height="9" fill="#7a7a7a"/><rect x="10.5" y="10.5" width="5" height="5" fill="#b8b8b8" stroke="#7a7a7a"/></svg><svg style="position:absolute;left:529px;top:32px" width="16" height="16" viewBox="0 0 16 16"><path d="M2 2 L13 13 M13 2 L2 13" stroke="#a0a0a0" stroke-width="1.3"/></svg><svg style="position:absolute;left:556px;top:32px" width="16" height="16" viewBox="0 0 16 16"><rect x="2.5" y="0.5" width="10" height="10" fill="#b8b8b8" stroke="#7a7a7a"/><ellipse cx="3" cy="13" rx="3" ry="2" fill="#7a7a7a"/><ellipse cx="12" cy="13" rx="3" ry="2" fill="#7a7a7a"/></svg><svg style="position:absolute;left:579px;top:32px" width="16" height="16" viewBox="0 0 16 16"><rect x="5.5" y="0.5" width="9" height="13" fill="#f4f4f4" stroke="#7a7a7a"/><path d="M0 11 H6 M3 8 V14 M8 13 H13" stroke="#555" stroke-width="1.5"/></svg><svg style="position:absolute;left:605px;top:32px" width="16" height="16" viewBox="0 0 16 16"><path d="M4 4 H12 M8 0 V8" stroke="#555" stroke-width="2.4"/><rect x="3" y="12" width="10" height="2.5" fill="#888"/></svg><svg style="position:absolute;left:632px;top:32px" width="16" height="16" viewBox="0 0 16 16"><path d="M3 0 L10 11 M12 0 L5 11" stroke="#7a7a7a" stroke-width="1.1"/><circle cx="4" cy="13" r="2.3" fill="none" stroke="#7a7a7a" stroke-width="1.2"/><circle cx="11" cy="13" r="2.3" fill="none" stroke="#7a7a7a" stroke-width="1.2"/></svg><svg style="position:absolute;left:654px;top:32px" width="16" height="16" viewBox="0 0 16 16"><rect x="0.5" y="2.5" width="9" height="10" fill="#fafafa" stroke="#b8b8b8"/><rect x="5.5" y="5.5" width="10" height="10" fill="#fafafa" stroke="#b8b8b8"/><path d="M7 8.5 H14 M7 10.5 H14 M7 12.5 H14" stroke="#b8b8b8"/></svg><svg style="position:absolute;left:677px;top:32px" width="16" height="16" viewBox="0 0 16 16"><rect x="0.5" y="1.5" width="14" height="14" rx="1.5" fill="#7a7a7a"/><rect x="3.5" y="4.5" width="9" height="10" fill="#f0f0f0" stroke="#7a7a7a"/><path d="M5 7.5 H11 M5 9.5 H11 M5 11.5 H11" stroke="#7a7a7a"/></svg><svg style="position:absolute;left:824px;top:32px" width="16" height="16" viewBox="0 0 16 16"><rect x="0.5" y="0.5" width="8" height="12" fill="#fafafa" stroke="#b8b8b8"/><rect x="6.5" y="3.5" width="9" height="12" fill="#fafafa" stroke="#b8b8b8"/></svg><svg style="position:absolute;left:847px;top:32px" width="16" height="16" viewBox="0 0 16 16"><rect x="0.5" y="1.5" width="15" height="14" rx="1" fill="#f6b800" stroke="#c08000"/><rect x="3.5" y="0.5" width="9" height="3" fill="#f6d060" stroke="#c08000"/><path d="M4.5 5.5 H12 L14 7.5 V15.5 H4.5 Z" fill="#d8f0f8" stroke="#6080a0"/></svg><svg style="position:absolute;left:906px;top:32px" width="16" height="16" viewBox="0 0 16 16"><path d="M1 9 L8 3 L15 9 L13 15 H3 Z" fill="#7a7a7a"/><path d="M1 9 L8 4 L15 9" stroke="#555" fill="none" stroke-width="1.2"/><rect x="9.5" y="0.5" width="6" height="6" fill="#fff" stroke="#7a7a7a"/><circle cx="12.5" cy="3.5" r="1.8" fill="none" stroke="#7a7a7a"/></svg><svg style="position:absolute;left:929px;top:32px" width="16" height="16" viewBox="0 0 16 16"><rect x="0.5" y="3.5" width="15" height="12" fill="#fafafa" stroke="#7a7a7a"/><rect x="0" y="0" width="6" height="6" fill="#fff" stroke="#7a7a7a" stroke-width="0.8"/><circle cx="3" cy="3" r="1.6" fill="none" stroke="#7a7a7a"/><text x="9.5" y="14" font-family="Liberation Sans" font-size="8.5" fill="#444" text-anchor="middle">P</text></svg><svg style="position:absolute;left:952px;top:32px" width="16" height="16" viewBox="0 0 16 16"><rect x="0.5" y="3.5" width="15" height="12" fill="#fafafa" stroke="#7a7a7a"/><rect x="0" y="0" width="6" height="6" fill="#fff" stroke="#7a7a7a" stroke-width="0.8"/><circle cx="3" cy="3" r="1.6" fill="none" stroke="#7a7a7a"/><text x="9.5" y="14" font-family="Liberation Sans" font-size="8.5" fill="#444" text-anchor="middle">ПР</text></svg><svg style="position:absolute;left:981px;top:32px" width="16" height="16" viewBox="0 0 16 16"><rect x="0.5" y="1.5" width="7" height="2" fill="none" stroke="#7a7a7a"/><path d="M3.5 4 V14 H5" stroke="#7a7a7a" fill="none"/><rect x="5.5" y="6.5" width="7" height="2" fill="none" stroke="#7a7a7a"/><rect x="5.5" y="12.5" width="7" height="2" fill="none" stroke="#7a7a7a"/><path d="M3.5 7.5 H5.5" stroke="#7a7a7a"/><path d="M9 6 L15 0" stroke="#7a7a7a" stroke-width="1.5"/></svg><svg style="position:absolute;left:1004px;top:32px" width="16" height="16" viewBox="0 0 16 16"><rect x="0.5" y="1.5" width="7" height="2" fill="none" stroke="#7a7a7a"/><path d="M3.5 4 V14 H5" stroke="#7a7a7a" fill="none"/><rect x="5.5" y="6.5" width="7" height="2" fill="none" stroke="#7a7a7a"/><rect x="5.5" y="12.5" width="7" height="2" fill="none" stroke="#7a7a7a"/><path d="M3.5 7.5 H5.5" stroke="#7a7a7a"/><path d="M11 0 L15 4 M15 0 L11 4" stroke="#7a7a7a"/></svg><svg style="position:absolute;left:1040px;top:32px" width="16" height="16" viewBox="0 0 16 16"><path d="M5 6.5 H16 M5 10.5 H16 M5 14.5 H16" stroke="#404a70" stroke-width="1.2"/><path d="M0 3 H4" stroke="#0a3fe0" stroke-width="1.6"/><path d="M3 0 L7 3 L3 6 Z" fill="#0a3fe0"/></svg><svg style="position:absolute;left:1063px;top:32px" width="16" height="16" viewBox="0 0 16 16"><path d="M5 6.5 H16 M5 10.5 H16 M5 14.5 H16" stroke="#404a70" stroke-width="1.2"/><path d="M3 7 V2" stroke="#0a3fe0" stroke-width="1.6"/><path d="M0 3 L3 -1 L6 3 Z" fill="#0a3fe0"/></svg><svg style="position:absolute;left:1085px;top:32px" width="16" height="16" viewBox="0 0 16 16"><path d="M5 2.5 H16 M5 6.5 H16 M5 10.5 H16" stroke="#404a70" stroke-width="1.2"/><path d="M3 9 V14" stroke="#0a3fe0" stroke-width="1.6"/><path d="M0 12 L3 16 L6 12 Z" fill="#0a3fe0"/></svg><svg style="position:absolute;left:1108px;top:32px" width="16" height="16" viewBox="0 0 16 16"><path d="M5 2.5 H16 M5 6.5 H16 M5 10.5 H16" stroke="#404a70" stroke-width="1.2"/><path d="M0 13 H4" stroke="#0a3fe0" stroke-width="1.6"/><path d="M3 10 L7 13 L3 16 Z" fill="#0a3fe0"/></svg><svg style="position:absolute;left:1145px;top:32px" width="16" height="16" viewBox="0 0 16 16"><path d="M3 15 L12 4" stroke="#a07030" stroke-width="1.8"/><path d="M8 2 L13 0 L15 4 L12 5 Z" fill="#606060"/><path d="M4 5 A6 6 0 1 0 14 12" stroke="#707070" stroke-width="1.4" fill="none"/></svg><svg style="position:absolute;left:1168px;top:32px" width="16" height="16" viewBox="0 0 16 16"><rect x="0" y="5" width="11" height="6" fill="#2c7ad8"/><path d="M11 7 H14 L16 10 V12 H11 Z" fill="#f0a020"/><rect x="0" y="11" width="16" height="1.5" fill="#203050"/><circle cx="3.5" cy="13" r="1.8" fill="#202020"/><circle cx="12.5" cy="13" r="1.8" fill="#202020"/></svg><svg style="position:absolute;left:1191px;top:32px" width="16" height="16" viewBox="0 0 16 16"><rect x="0" y="9" width="16" height="3.5" fill="#e06010"/><rect x="2" y="5.5" width="12" height="3.5" fill="#f07820"/><rect x="5" y="2" width="6" height="3.5" fill="#f08828"/><path d="M4 9 V12.5 M8 9 V12.5 M12 9 V12.5 M6 5.5 V9 M10 5.5 V9 M8 2 V5.5" stroke="#ffd0a0" stroke-width="0.7"/></svg><svg style="position:absolute;left:1219px;top:32px" width="16" height="16" viewBox="0 0 16 16"><path d="M1 5 Q5 1 10 5 Z" fill="#e07020"/><rect x="0" y="5" width="11" height="6" fill="#2c7ad8"/><path d="M11 7 H14 L16 10 V12 H11 Z" fill="#f0a020"/><rect x="0" y="11" width="16" height="1.5" fill="#203050"/><circle cx="3.5" cy="13" r="1.8" fill="#202020"/><circle cx="12.5" cy="13" r="1.8" fill="#202020"/></svg><svg style="position:absolute;left:1255px;top:32px" width="16" height="16" viewBox="0 0 16 16"><path d="M1 9 L9 5 L15 8 L8 12 Z" fill="#f060a0"/><path d="M1 9 L8 12 V14 L1 11 Z" fill="#fff" stroke="#e0a0c0" stroke-width="0.7"/><path d="M1 5 L9 1 L15 4 L8 8 Z" fill="#f060a0"/><path d="M1 5 L8 8 V10 L1 7 Z" fill="#fff" stroke="#e0a0c0" stroke-width="0.7"/><path d="M8 8 L15 4 V6 L8 10 Z M8 12 L15 8 V10 L8 14 Z" fill="#e0a0c0"/></svg><svg style="position:absolute;left:1278px;top:32px" width="16" height="16" viewBox="0 0 16 16"><path d="M1 9 L9 5 L15 8 L8 12 Z" fill="#3070e0"/><path d="M1 9 L8 12 V14 L1 11 Z" fill="#fff" stroke="#80b0e0" stroke-width="0.7"/><path d="M1 5 L9 1 L15 4 L8 8 Z" fill="#3070e0"/><path d="M1 5 L8 8 V10 L1 7 Z" fill="#fff" stroke="#80b0e0" stroke-width="0.7"/><path d="M8 8 L15 4 V6 L8 10 Z M8 12 L15 8 V10 L8 14 Z" fill="#80b0e0"/></svg><div style="left:382px;top:79px;width:22px;height:22px;background:#f8f8f8;box-shadow:inset 1px 1px #e0e0e0, inset -1px -1px #fff"></div><div style="left:659px;top:79px;width:22px;height:22px;background:#f8f8f8;box-shadow:inset 1px 1px #e0e0e0, inset -1px -1px #fff"></div><svg style="position:absolute;left:3px;top:82px" width="16" height="16" viewBox="0 0 16 16"><rect x="0.5" y="2.5" width="15" height="12" fill="#e4e4e4" stroke="#b0b0b0"/><rect x="0.5" y="2.5" width="7" height="3" fill="#d0d0d0" stroke="#b0b0b0"/><rect x="11" y="0" width="5" height="5" fill="#d8d8d8"/></svg><svg style="position:absolute;left:26px;top:82px" width="16" height="16" viewBox="0 0 16 16"><path d="M0.5 2.5 L3 0.5 H10.5 V15.5 H0.5 Z" fill="#f4f4f4" stroke="#a0a0a0"/><path d="M2.5 6 H9 M2.5 8.5 H9 M2.5 11 H9 M2.5 13.5 H9" stroke="#a0a0a0"/><path d="M13 0 L14 3 L16 4 L14 5 L13 8 L12 5 L10 4 L12 3 Z" fill="#d0d0d0"/></svg><svg style="position:absolute;left:50px;top:82px" width="16" height="16" viewBox="0 0 16 16"><path d="M2 2 L13 13 M13 2 L2 13" stroke="#c0c0c0" stroke-width="1.3"/></svg><svg style="position:absolute;left:78px;top:82px" width="16" height="16" viewBox="0 0 16 16"><rect x="4.5" y="0.5" width="10" height="9" fill="#b8d0f0" stroke="#6080b0"/><path d="M0.5 3.5 H6 L7 5 H15.5 V15.5 H0.5 Z" fill="#f8c030" stroke="#b08020"/><rect x="0.5" y="8.5" width="15" height="7" fill="#ffd848" stroke="#b08020"/><path d="M8 11 H12 V9 L15.5 12 L12 15 V13 H8 Z" fill="#1060e0"/></svg><svg style="position:absolute;left:101px;top:82px" width="16" height="16" viewBox="0 0 16 16"><path d="M0.5 3.5 H6 L7 5 H15.5 V15.5 H0.5 Z" fill="#f8c030" stroke="#b08020"/><rect x="0.5" y="8.5" width="15" height="7" fill="#ffd848" stroke="#b08020"/><path d="M7 0 H10 V4 H12.5 L8.5 8 L4.5 4 H7 Z" fill="#1060e0"/></svg><svg style="position:absolute;left:131px;top:82px" width="16" height="16" viewBox="0 0 16 16"><path d="M0.5 2.5 L3 0.5 H11.5 V15.5 H0.5 Z" fill="#fff" stroke="#404040"/><text x="6" y="12" font-family="Liberation Sans" font-weight="bold" font-size="10" fill="#10a030" text-anchor="middle">?</text></svg><svg style="position:absolute;left:362px;top:82px" width="16" height="16" viewBox="0 0 16 16"><path d="M4 3 V14 M4 7.5 H7 M4 11 H7 M4 14 H7" stroke="#303030"/><rect x="0.5" y="0.5" width="7" height="2.5" fill="#d0d0d0" stroke="#303030"/><rect x="6.5" y="5.5" width="8" height="2.5" fill="#c0d8f0" stroke="#303030"/><rect x="6.5" y="9.5" width="8" height="2.5" fill="#c0d8f0" stroke="#303030"/><rect x="6.5" y="13" width="8" height="2.5" fill="#c0d8f0" stroke="#303030"/></svg><svg style="position:absolute;left:386px;top:82px" width="16" height="16" viewBox="0 0 16 16"><path d="M0.5 8 L8 1 L15.5 8" stroke="#a05020" stroke-width="1.4" fill="none"/><rect x="3" y="1" width="2" height="4" fill="#c86020"/><path d="M2.5 7.5 L8 2.5 L13.5 7.5 V15.5 H2.5 Z" fill="#fff" stroke="#808080"/><rect x="4" y="9" width="3" height="6.5" fill="#f0a030"/><rect x="9" y="9" width="3" height="3" fill="#2060e0"/></svg><svg style="position:absolute;left:414px;top:82px" width="16" height="16" viewBox="0 0 16 16"><path d="M0.5 3.5 H6 L7 5 H15.5 V15.5 H0.5 Z" fill="#f8d040" stroke="#b08020"/><rect x="0.5" y="7.5" width="15" height="8" fill="#ffe060" stroke="#b08020"/><rect x="9" y="0" width="7" height="7" fill="#f07020"/><circle cx="12.5" cy="3.5" r="1.8" fill="none" stroke="#fff" stroke-width="1.2"/></svg><svg style="position:absolute;left:438px;top:82px" width="16" height="16" viewBox="0 0 16 16"><path d="M0.5 3.5 L3 1 H10.5 V15.5 H0.5 Z" fill="url(#gdoc)" stroke="#303850"/><path d="M2.5 6.5 H9 M2.5 9 H9 M2.5 11.5 H9 M2.5 14 H9" stroke="#304060"/><path d="M12 0 L13 4 L16 5 L13 6 L12 10 L11 6 L8 5 L11 4 Z" fill="#ffe000"/></svg><svg style="position:absolute;left:460px;top:82px" width="16" height="16" viewBox="0 0 16 16"><path d="M1 1 L14 14 M14 1 L1 14" stroke="#e01010" stroke-width="2"/></svg><svg style="position:absolute;left:489px;top:82px" width="16" height="16" viewBox="0 0 16 16"><rect x="0.5" y="0.5" width="11" height="11" rx="1" fill="#e8f0f8" stroke="#606870"/><rect x="1" y="1" width="10" height="2" fill="#2080e0"/><rect x="4.5" y="5.5" width="11" height="10" fill="#d8f0f0" stroke="#606870"/><text x="10" y="14" font-family="Liberation Sans" font-size="8" fill="#000" text-anchor="middle">%</text></svg><svg style="position:absolute;left:512px;top:82px" width="16" height="16" viewBox="0 0 16 16"><path d="M0.5 2.5 L3 0.5 H12.5 V15.5 H0.5 Z" fill="#f8f8f8" stroke="#7a7a7a"/><path d="M3 5.5 H10 M3 8 H10 M3 10.5 H10 M3 13 H10" stroke="#7a7a7a"/></svg><svg style="position:absolute;left:535px;top:82px" width="16" height="16" viewBox="0 0 16 16"><path d="M3.5 2.5 L6 0.5 H14.5 V15.5 H3.5 Z" fill="#e8e8f0" stroke="#8080a0"/><rect x="0" y="7" width="10" height="3" fill="#f0c020" stroke="#c09000" stroke-width="0.6"/></svg><svg style="position:absolute;left:558px;top:82px" width="16" height="16" viewBox="0 0 16 16"><path d="M0.5 1.5 H6 L7 3.5 H15.5 V15.5 H0.5 Z" fill="#d8d8d8" stroke="#a0a0a0"/><rect x="0.5" y="5.5" width="15" height="10" fill="#d0d0d0" stroke="#a0a0a0"/></svg><svg style="position:absolute;left:581px;top:82px" width="16" height="16" viewBox="0 0 16 16"><path d="M0.5 1.5 H6 L7 3.5 H15.5 V15.5 H0.5 Z" fill="#d8d8d8" stroke="#a0a0a0"/><rect x="0.5" y="5.5" width="15" height="10" fill="#d0d0d0" stroke="#a0a0a0"/><rect x="3.5" y="6.5" width="9" height="8" fill="#f0f0f0" stroke="#909090"/><path d="M5.5 8 H10 M5.5 8 L8 10.5 L5.5 13 H10" stroke="#505050" fill="none" stroke-width="0.9"/></svg><svg style="position:absolute;left:612px;top:82px" width="16" height="16" viewBox="0 0 16 16"><rect x="0.5" y="0.5" width="10" height="14" rx="1" fill="#f0e0c0" stroke="#806040"/><rect x="2" y="2" width="7" height="3" fill="#208080"/><path d="M2 7 H9 M2 9.5 H9 M2 12 H9 M4.3 6 V13.5 M6.7 6 V13.5" stroke="#a08060" stroke-width="0.9"/></svg><svg style="position:absolute;left:639px;top:82px" width="16" height="16" viewBox="0 0 16 16"><path d="M1 9 L9 5 L15 8 L8 12 Z" fill="#f060a0"/><path d="M1 9 L8 12 V14 L1 11 Z" fill="#fff" stroke="#d090a0" stroke-width="0.7"/><path d="M1 5 L9 1 L15 4 L8 8 Z" fill="#f060a0"/><path d="M1 5 L8 8 V10 L1 7 Z" fill="#fff" stroke="#d090a0" stroke-width="0.7"/><path d="M8 8 L15 4 V6 L8 10 Z M8 12 L15 8 V10 L8 14 Z" fill="#d090a0"/></svg><svg style="position:absolute;left:663px;top:82px" width="16" height="16" viewBox="0 0 16 16"><path d="M0 10 L9 3 L16 6 L7 13 Z" fill="#3060d8"/><path d="M0 10 L7 13 V15 L0 12 Z" fill="#e0e8ff" stroke="#3060d8" stroke-width="0.6"/><rect x="9.5" y="9.5" width="6" height="6.5" fill="#fff" stroke="#404040"/><text x="12.5" y="15.5" font-family="Liberation Sans" font-size="6" fill="#000" text-anchor="middle">E</text></svg><svg style="position:absolute;left:686px;top:82px" width="16" height="16" viewBox="0 0 16 16"><rect x="0.5" y="0.5" width="13" height="13" fill="#fff" stroke="#2a7a2a"/><path d="M3 3 L11 11 M11 3 L3 11" stroke="#2a9a3a" stroke-width="2.6"/><path d="M3 3 L11 11" stroke="#7cd07c" stroke-width="0.9"/></svg><svg style="position:absolute;left:708px;top:82px" width="16" height="16" viewBox="0 0 16 16"><rect x="1.5" y="1" width="13" height="14" fill="#f4f4f4" stroke="#c8c8c8"/><rect x="0" y="1.5" width="15" height="6" fill="#e8101a"/><text x="7.5" y="6.6" font-family="Liberation Sans" font-weight="bold" font-size="5.6" fill="#fff" text-anchor="middle">PDF</text><path d="M4 14 Q6 10 9 9 M6.5 14 Q8.5 10 12 9.5 M10 14 Q10 11 14 11" stroke="#e8101a" stroke-width="1.3" fill="none"/></svg><svg style="position:absolute;left:731px;top:82px" width="16" height="16" viewBox="0 0 16 16"><rect x="2" y="0.5" width="13" height="15" fill="#202020"/><rect x="2" y="0.5" width="13" height="6" fill="#1070e0"/><text x="9" y="6" font-family="Liberation Sans" font-weight="bold" font-size="6" fill="#fff" text-anchor="middle">XML</text><text x="9" y="14.5" font-family="Liberation Sans" font-weight="bold" font-size="7" fill="#fff" text-anchor="middle">ГЭ</text><circle cx="1.5" cy="3.5" r="1.5" fill="#20d080"/></svg><svg style="position:absolute;left:754px;top:82px" width="16" height="16" viewBox="0 0 16 16"><rect x="2" y="0.5" width="13" height="15" fill="#202020"/><rect x="2" y="0.5" width="13" height="6" fill="#1070e0"/><text x="9" y="6" font-family="Liberation Sans" font-weight="bold" font-size="6" fill="#fff" text-anchor="middle">XML</text><text x="9" y="14.5" font-family="Liberation Sans" font-weight="bold" font-size="7" fill="#fff" text-anchor="middle">МГЭ</text><circle cx="1.5" cy="3.5" r="1.5" fill="#20d080"/></svg><svg style="position:absolute;left:783px;top:82px" width="16" height="16" viewBox="0 0 16 16"><path d="M0 10 L9 3 L16 7 L7 14 Z" fill="#f08040"/><path d="M0 10 L7 14 V16 L0 12 Z" fill="#fff0e0" stroke="#c06030" stroke-width="0.6"/><path d="M8 6 L11 7" stroke="#fff" stroke-width="1.2"/></svg><svg style="position:absolute;left:812px;top:82px" width="16" height="16" viewBox="0 0 16 16"><rect x="0.5" y="0.5" width="11" height="11" rx="1" fill="#e8f0f8" stroke="#606870"/><rect x="1" y="1" width="10" height="2" fill="#2080e0"/><rect x="4.5" y="5.5" width="11" height="10" fill="#d8f0f0" stroke="#606870"/><text x="10" y="14" font-family="Liberation Sans" font-size="8" fill="#000" text-anchor="middle">%</text></svg><svg style="position:absolute;left:844px;top:85px" width="16" height="16" viewBox="0 0 16 16"><path d="M5.5 0 L11 6 H7.5 V11 H3.5 V6 H0 Z" fill="#0a40d8"/></svg><svg style="position:absolute;left:867px;top:85px" width="16" height="16" viewBox="0 0 16 16"><path d="M3.5 0 H7.5 V5 H11 L5.5 11 L0 5 H3.5 Z" fill="#0a40d8"/></svg><div style="left:29px;top:136px;width:1px;height:96px;background-image:linear-gradient(180deg,#a0a0a0 50%,transparent 50%);background-size:1px 2px"></div><div style="left:48px;top:152px;width:1px;height:9px;background-image:linear-gradient(180deg,#a0a0a0 50%,transparent 50%);background-size:1px 2px"></div><div style="left:48px;top:184px;width:1px;height:25px;background-image:linear-gradient(180deg,#a0a0a0 50%,transparent 50%);background-size:1px 2px"></div><div style="left:48px;top:232px;width:1px;height:9px;background-image:linear-gradient(180deg,#a0a0a0 50%,transparent 50%);background-size:1px 2px"></div><div style="left:6px;top:124px;width:9px;height:9px;background:#fff;box-shadow:inset 0 0 0 1px #8a8a8a"></div><div style="left:8px;top:128px;width:5px;height:1px;background:#000"></div><div style="left:16px;top:128px;width:6px;height:1px;background-image:linear-gradient(90deg,#a0a0a0 50%,transparent 50%);background-size:2px 1px"></div><svg style="position:absolute;left:23px;top:122px" width="12" height="12" viewBox="0 0 12 12"><rect x="0.5" y="0.5" width="10" height="10" fill="#fff" stroke="#8a8a8a"/></svg><svg style="position:absolute;left:38px;top:121px" width="16" height="16" viewBox="0 0 16 16"><rect x="5" y="0" width="1" height="3.5" fill="#303030"/><path d="M5.5 0 H9 L10 1.5 H5.5 Z" fill="#e80000"/><rect x="0" y="5" width="5.2" height="10" fill="#2a78d8"/><rect x="5" y="3" width="5.2" height="12" fill="#1e6ad0"/><rect x="10" y="7" width="5" height="8" fill="#2a78d8"/><path d="M1.2 6.5 H4 M1.2 8.5 H4 M1.2 10.5 H4 M1.2 12.5 H4 M6.2 4.5 H9 M6.2 6.5 H9 M6.2 8.5 H9 M6.2 10.5 H9 M6.2 12.5 H9 M11.2 8.5 H14 M11.2 10.5 H14 M11.2 12.5 H14" stroke="#c8dcf8" stroke-width="1"/></svg><div class="t" style="left:59px;top:123px;font-size:11px;line-height:11px;color:#000;font-family:'Liberation Sans';">Здание спортивного комплекса</div><div style="left:25px;top:140px;width:9px;height:9px;background:#fff;box-shadow:inset 0 0 0 1px #8a8a8a"></div><div style="left:27px;top:144px;width:5px;height:1px;background:#000"></div><div style="left:35px;top:144px;width:6px;height:1px;background-image:linear-gradient(90deg,#a0a0a0 50%,transparent 50%);background-size:2px 1px"></div><svg style="position:absolute;left:42px;top:138px" width="12" height="12" viewBox="0 0 12 12"><rect x="0.5" y="0.5" width="10" height="10" fill="#fff" stroke="#8a8a8a"/></svg><svg style="position:absolute;left:57px;top:136px" width="16" height="16" viewBox="0 0 16 16"><rect x="1" y="2" width="3" height="14" fill="#888"/><path d="M2.5 3.5 V15" stroke="#fff" stroke-width="1" stroke-dasharray="1.2 0.8"/><path d="M0 1.5 H12" stroke="#909090"/><path d="M4 16 H6" stroke="#909090"/><path d="M1 0.5 L3 0 L4 2 L2 3 Z" fill="#a070f0"/><path d="M11 0 L13 1 V6 L14 7 V9 H11 Z" fill="#a070f0"/><path d="M7 4 L9 3 L10 8 H7 Z" fill="#a070f0"/><path d="M4.5 8 L9.5 2 L14 8" stroke="#802030" fill="none" stroke-width="0.9"/><rect x="4" y="8" width="11" height="2" fill="#ff8000"/><rect x="4" y="10" width="11" height="0.8" fill="#802020"/><rect x="7" y="11" width="4" height="5" fill="#1a8cff"/><rect x="12" y="11" width="4" height="5" fill="#1a8cff"/><path d="M7.5 12.5 H10.5 M7.5 14.5 H10.5 M12.5 12.5 H15.5 M12.5 14.5 H15.5" stroke="#c0e0ff" stroke-width="0.8" stroke-dasharray="1 1"/></svg><div class="t" style="left:78px;top:139px;font-size:11px;line-height:11px;color:#000;font-family:'Liberation Sans';">Объекты подсобного и обслуживающего назначения</div><div style="left:49px;top:160px;width:11px;height:1px;background-image:linear-gradient(90deg,#a0a0a0 50%,transparent 50%);background-size:2px 1px"></div><svg style="position:absolute;left:61px;top:154px" width="12" height="12" viewBox="0 0 12 12"><rect x="0.5" y="0.5" width="10" height="10" fill="#fff" stroke="#8a8a8a"/></svg><svg style="position:absolute;left:76px;top:152px" width="16" height="16" viewBox="0 0 16 16"><path d="M0.5 9 L7 2 L15.5 4 L15.5 9 L9 15.5 L0.5 13 Z" fill="#e8e8e8" stroke="#c0c0c0" stroke-width="0.8"/><path d="M0.5 9 L7 1 L15.5 3 L9 11 Z" fill="url(#gbook)"/><path d="M0.5 9 L9 11 L9 13 L0.5 11 Z" fill="#2a8050"/><path d="M7 4 L12 5" stroke="#fff" stroke-width="1.3"/></svg><div class="t" style="left:97px;top:155px;font-size:11px;line-height:11px;color:#000;font-family:'Liberation Sans';">Объекты подсобного назначения</div><div style="left:25px;top:172px;width:9px;height:9px;background:#fff;box-shadow:inset 0 0 0 1px #8a8a8a"></div><div style="left:27px;top:176px;width:5px;height:1px;background:#000"></div><div style="left:35px;top:176px;width:6px;height:1px;background-image:linear-gradient(90deg,#a0a0a0 50%,transparent 50%);background-size:2px 1px"></div><svg style="position:absolute;left:42px;top:170px" width="12" height="12" viewBox="0 0 12 12"><rect x="0.5" y="0.5" width="10" height="10" fill="#fff" stroke="#8a8a8a"/></svg><svg style="position:absolute;left:57px;top:168px" width="16" height="16" viewBox="0 0 16 16"><rect x="1" y="2" width="3" height="14" fill="#888"/><path d="M2.5 3.5 V15" stroke="#fff" stroke-width="1" stroke-dasharray="1.2 0.8"/><path d="M0 1.5 H12" stroke="#909090"/><path d="M4 16 H6" stroke="#909090"/><path d="M1 0.5 L3 0 L4 2 L2 3 Z" fill="#a070f0"/><path d="M11 0 L13 1 V6 L14 7 V9 H11 Z" fill="#a070f0"/><path d="M7 4 L9 3 L10 8 H7 Z" fill="#a070f0"/><path d="M4.5 8 L9.5 2 L14 8" stroke="#802030" fill="none" stroke-width="0.9"/><rect x="4" y="8" width="11" height="2" fill="#ff8000"/><rect x="4" y="10" width="11" height="0.8" fill="#802020"/><rect x="7" y="11" width="4" height="5" fill="#1a8cff"/><rect x="12" y="11" width="4" height="5" fill="#1a8cff"/><path d="M7.5 12.5 H10.5 M7.5 14.5 H10.5 M12.5 12.5 H15.5 M12.5 14.5 H15.5" stroke="#c0e0ff" stroke-width="0.8" stroke-dasharray="1 1"/></svg><div class="t" style="left:78px;top:171px;font-size:11px;line-height:11px;color:#000;font-family:'Liberation Sans';">Основные объекты строительства</div><div style="left:49px;top:192px;width:11px;height:1px;background-image:linear-gradient(90deg,#a0a0a0 50%,transparent 50%);background-size:2px 1px"></div><svg style="position:absolute;left:61px;top:186px" width="12" height="12" viewBox="0 0 12 12"><rect x="0.5" y="0.5" width="10" height="10" fill="#fff" stroke="#8a8a8a"/></svg><svg style="position:absolute;left:76px;top:184px" width="16" height="16" viewBox="0 0 16 16"><path d="M0.5 9 L7 2 L15.5 4 L15.5 9 L9 15.5 L0.5 13 Z" fill="#e8e8e8" stroke="#c0c0c0" stroke-width="0.8"/><path d="M0.5 9 L7 1 L15.5 3 L9 11 Z" fill="url(#gbook)"/><path d="M0.5 9 L9 11 L9 13 L0.5 11 Z" fill="#2a8050"/><path d="M7 4 L12 5" stroke="#fff" stroke-width="1.3"/></svg><div style="left:94px;top:184px;width:121px;height:16px;background:#0078d7"></div><div class="t" style="left:96px;top:187px;font-size:11px;line-height:11px;color:#fff;font-family:'Liberation Sans';">Устройство котлована</div><div style="left:49px;top:208px;width:11px;height:1px;background-image:linear-gradient(90deg,#a0a0a0 50%,transparent 50%);background-size:2px 1px"></div><svg style="position:absolute;left:61px;top:202px" width="12" height="12" viewBox="0 0 12 12"><rect x="0.5" y="0.5" width="10" height="10" fill="#fff" stroke="#8a8a8a"/></svg><svg style="position:absolute;left:76px;top:200px" width="16" height="16" viewBox="0 0 16 16"><path d="M0.5 9 L7 2 L15.5 4 L15.5 9 L9 15.5 L0.5 13 Z" fill="#e8e8e8" stroke="#c0c0c0" stroke-width="0.8"/><path d="M0.5 9 L7 1 L15.5 3 L9 11 Z" fill="url(#gbook)"/><path d="M0.5 9 L9 11 L9 13 L0.5 11 Z" fill="#2a8050"/><path d="M7 4 L12 5" stroke="#fff" stroke-width="1.3"/></svg><div class="t" style="left:97px;top:203px;font-size:11px;line-height:11px;color:#000;font-family:'Liberation Sans';">Фундамент</div><div style="left:25px;top:220px;width:9px;height:9px;background:#fff;box-shadow:inset 0 0 0 1px #8a8a8a"></div><div style="left:27px;top:224px;width:5px;height:1px;background:#000"></div><div style="left:35px;top:224px;width:6px;height:1px;background-image:linear-gradient(90deg,#a0a0a0 50%,transparent 50%);background-size:2px 1px"></div><svg style="position:absolute;left:42px;top:218px" width="12" height="12" viewBox="0 0 12 12"><rect x="0.5" y="0.5" width="10" height="10" fill="#fff" stroke="#8a8a8a"/></svg><svg style="position:absolute;left:57px;top:216px" width="16" height="16" viewBox="0 0 16 16"><rect x="1" y="2" width="3" height="14" fill="#888"/><path d="M2.5 3.5 V15" stroke="#fff" stroke-width="1" stroke-dasharray="1.2 0.8"/><path d="M0 1.5 H12" stroke="#909090"/><path d="M4 16 H6" stroke="#909090"/><path d="M1 0.5 L3 0 L4 2 L2 3 Z" fill="#a070f0"/><path d="M11 0 L13 1 V6 L14 7 V9 H11 Z" fill="#a070f0"/><path d="M7 4 L9 3 L10 8 H7 Z" fill="#a070f0"/><path d="M4.5 8 L9.5 2 L14 8" stroke="#802030" fill="none" stroke-width="0.9"/><rect x="4" y="8" width="11" height="2" fill="#ff8000"/><rect x="4" y="10" width="11" height="0.8" fill="#802020"/><rect x="7" y="11" width="4" height="5" fill="#1a8cff"/><rect x="12" y="11" width="4" height="5" fill="#1a8cff"/><path d="M7.5 12.5 H10.5 M7.5 14.5 H10.5 M12.5 12.5 H15.5 M12.5 14.5 H15.5" stroke="#c0e0ff" stroke-width="0.8" stroke-dasharray="1 1"/></svg><div class="t" style="left:78px;top:219px;font-size:11px;line-height:11px;color:#000;font-family:'Liberation Sans';">Подготовка территории строительства</div><div style="left:49px;top:240px;width:11px;height:1px;background-image:linear-gradient(90deg,#a0a0a0 50%,transparent 50%);background-size:2px 1px"></div><svg style="position:absolute;left:61px;top:234px" width="12" height="12" viewBox="0 0 12 12"><rect x="0.5" y="0.5" width="10" height="10" fill="#fff" stroke="#8a8a8a"/></svg><svg style="position:absolute;left:76px;top:232px" width="16" height="16" viewBox="0 0 16 16"><path d="M0.5 9 L7 2 L15.5 4 L15.5 9 L9 15.5 L0.5 13 Z" fill="#e8e8e8" stroke="#c0c0c0" stroke-width="0.8"/><path d="M0.5 9 L7 1 L15.5 3 L9 11 Z" fill="url(#gbook)"/><path d="M0.5 9 L9 11 L9 13 L0.5 11 Z" fill="#2a8050"/><path d="M7 4 L12 5" stroke="#fff" stroke-width="1.3"/></svg><div class="t" style="left:97px;top:235px;font-size:11px;line-height:11px;color:#000;font-family:'Liberation Sans';">Подготовительные работы</div><svg style="position:absolute;left:7px;top:713px" width="14" height="14" viewBox="0 0 14 14"><rect x="0" y="0" width="14" height="14" rx="2" fill="#909090"/><path d="M7 2 L12 7 H9 V12 H5 V7 H2 Z" fill="#d8d8d8"/></svg><svg style="position:absolute;left:29px;top:713px" width="14" height="14" viewBox="0 0 14 14"><rect x="0" y="0" width="14" height="14" rx="2" fill="#909090"/><path d="M5 2 H9 V7 H12 L7 12 L2 7 H5 Z" fill="#d8d8d8"/></svg><svg style="position:absolute;left:58px;top:713px" width="14" height="14" viewBox="0 0 14 14"><rect x="0" y="0" width="14" height="14" fill="#20a020" stroke="#107010"/><text x="7" y="11" font-family="Liberation Sans" font-weight="bold" font-size="9" fill="#fff" text-anchor="middle">№</text></svg><svg style="position:absolute;left:10px;top:762px" width="16" height="16" viewBox="0 0 16 16"><path d="M0.5 9 L7 2 L15.5 4 L15.5 9 L9 15.5 L0.5 13 Z" fill="#e8e8e8" stroke="#c0c0c0" stroke-width="0.8"/><path d="M0.5 9 L7 1 L15.5 3 L9 11 Z" fill="url(#gbook)"/><path d="M0.5 9 L9 11 L9 13 L0.5 11 Z" fill="#2a8050"/><path d="M7 4 L12 5" stroke="#fff" stroke-width="1.3"/></svg><svg style="position:absolute;left:3px;top:796px" width="10" height="10" viewBox="0 0 10 10"><rect x="0.5" y="0.5" width="9" height="9" fill="#f0f0f0" stroke="#808080"/><path d="M2 2 L8 8 M8 2 L2 8" stroke="#404040"/></svg><svg style="position:absolute;left:18px;top:799px" width="12" height="12" viewBox="0 0 12 12"><path d="M4 0 H8 V4 H12 V8 H8 V12 H4 V8 H0 V4 H4 Z" fill="#30a030"/></svg><svg style="position:absolute;left:100px;top:799px" width="11" height="11" viewBox="0 0 11 11"><path d="M1 1 L10 10 M10 1 L1 10" stroke="#f04020" stroke-width="1.8"/></svg><svg style="position:absolute;left:0;top:0" width="1755" height="1121"><rect x="567.5" y="99.5" width="162" height="20" fill="none" stroke="#ff0000" stroke-width="3"/><rect x="26.5" y="896.5" width="450" height="16" fill="none" stroke="#ff0000" stroke-width="3"/><path d="M1054.7 397.0 L668.7 134.1" stroke="#ff0000" stroke-width="3"/><path d="M652.6 123.1 L676.4 129.9 L667.7 142.7 Z" fill="#ff0000"/><path d="M211.8 898.3 L376.3 769.1" stroke="#ff0000" stroke-width="3"/><path d="M391.6 757.1 L377.9 777.7 L368.3 765.5 Z" fill="#ff0000"/></svg></body></html>
